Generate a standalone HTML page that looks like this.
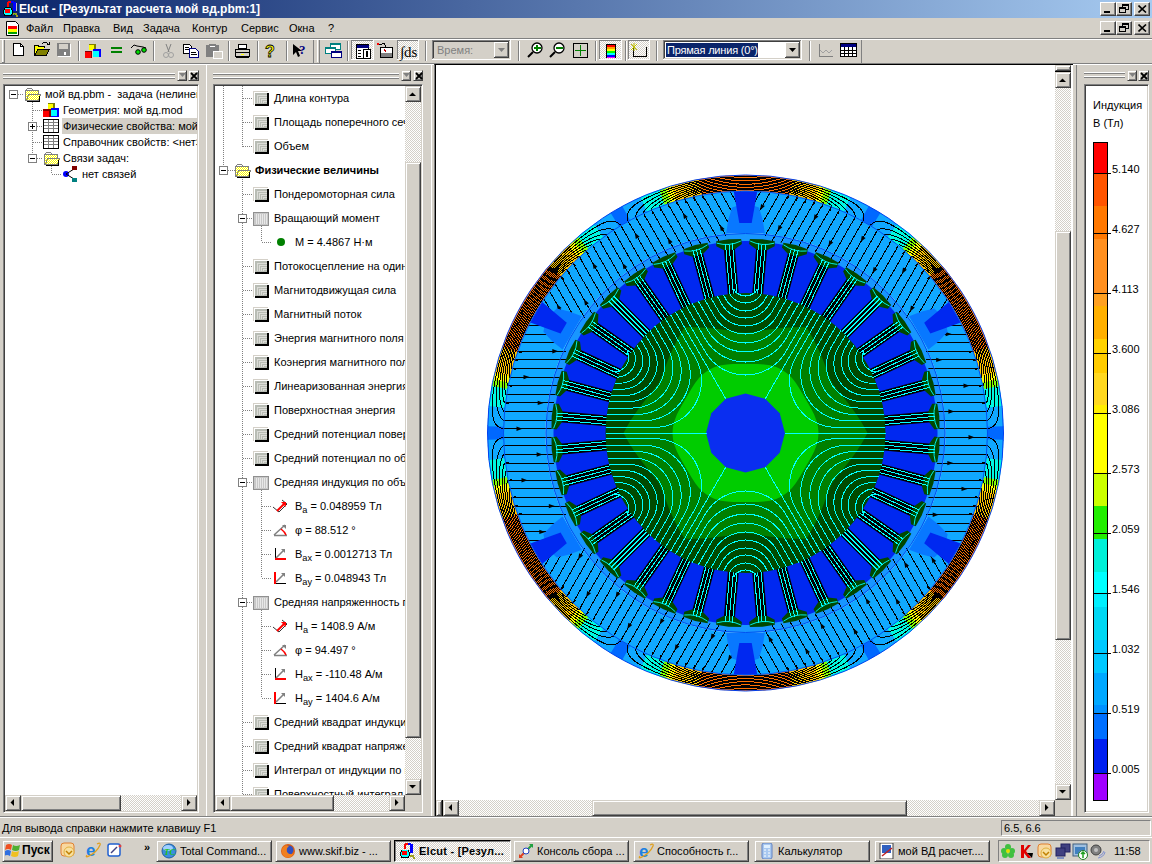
<!DOCTYPE html>
<html><head><meta charset="utf-8">
<style>
*{margin:0;padding:0;box-sizing:border-box}
html,body{width:1152px;height:864px;overflow:hidden;background:#D4D0C8;font-family:"Liberation Sans",sans-serif;font-size:11px;color:#000}
.a{position:absolute}
.t{position:absolute;white-space:nowrap;line-height:13px}
.raised{background:#D4D0C8;border:1px solid;border-color:#fff #404040 #404040 #fff;box-shadow:inset -1px -1px #808080}
.raised2{background:#D4D0C8;border:1px solid;border-color:#D4D0C8 #404040 #404040 #D4D0C8;box-shadow:inset 1px 1px #fff,inset -1px -1px #808080}
.sunk{border:1px solid;border-color:#808080 #fff #fff #808080;box-shadow:inset 1px 1px #404040,inset -1px -1px #D4D0C8}
.track{background-color:#fff;background-image:linear-gradient(45deg,#D4D0C8 25%,transparent 25%,transparent 75%,#D4D0C8 75%),linear-gradient(45deg,#D4D0C8 25%,transparent 25%,transparent 75%,#D4D0C8 75%);background-size:2px 2px;background-position:0 0,1px 1px}
.hl{position:absolute;height:1px}
.vl{position:absolute;width:1px}
.grip{position:absolute;height:6px;border-top:1px solid #fff;border-bottom:1px solid #808080}
.dot{position:absolute;border-left:1px dotted #808080}
.doth{position:absolute;border-top:1px dotted #808080}
</style></head><body>

<!-- TITLE BAR -->
<div class="a" style="left:0;top:0;width:1152px;height:18px;background:linear-gradient(90deg,#0A246A 0%,#A6CAF0 100%)"></div>
<svg class="a" style="left:1px;top:0px" width="18" height="18" viewBox="0 0 18 18" shape-rendering="crispEdges">
<rect x="6" y="2" width="2" height="5" fill="#FF0000"/><rect x="7" y="1" width="3" height="2" fill="#FF0000"/>
<rect x="10" y="1" width="3" height="2" fill="#0000FF"/><rect x="12" y="2" width="3" height="9" fill="#0000FF"/><rect x="15" y="3" width="1" height="8" fill="#C0C0C0"/>
<rect x="4" y="7" width="6" height="1" fill="#000"/><rect x="3" y="8" width="8" height="8" fill="#000"/><rect x="2" y="10" width="10" height="4" fill="#000"/>
<rect x="4" y="8" width="6" height="7" fill="#00FFFF"/><rect x="3" y="10" width="8" height="4" fill="#00FFFF"/>
<rect x="4" y="9" width="5" height="4" fill="#FF0000"/>
<rect x="12" y="13" width="4" height="2" fill="#A0A020"/><rect x="15" y="15" width="2" height="2" fill="#A0A020"/><rect x="13" y="14" width="1" height="1" fill="#00A000"/>
</svg>
<div class="t" style="left:19px;top:2px;color:#fff;font-weight:bold;font-size:12px;line-height:14px">Elcut - [Результат расчета мой вд.pbm:1]</div>
<div class="a raised" style="left:1100px;top:2px;width:16px;height:14px"><div class="a" style="left:3px;top:8px;width:6px;height:2px;background:#000"></div></div>
<div class="a raised" style="left:1116px;top:2px;width:16px;height:14px"><div class="a" style="left:5px;top:1px;width:7px;height:6px;border:1px solid #000;border-top-width:2px"></div><div class="a" style="left:2px;top:4px;width:7px;height:6px;border:1px solid #000;border-top-width:2px;background:#D4D0C8"></div></div>
<div class="a raised" style="left:1134px;top:2px;width:16px;height:14px"><svg class="a" style="left:3px;top:2px" width="9" height="8"><path d="M0.5 0.5 L8 7.5 M8 0.5 L0.5 7.5" stroke="#000" stroke-width="1.6"/></svg></div>

<!-- MENU BAR -->
<svg class="a" style="left:5px;top:20px" width="15" height="17" viewBox="0 0 15 17">
<path d="M1.5 1.5 h9 l3 3 v11 h-12 z" fill="#fff" stroke="#000"/>
<rect x="3" y="6" width="9" height="3" fill="#FF0000"/><rect x="3" y="9" width="9" height="3" fill="#FFFF00"/><rect x="3" y="12" width="9" height="2" fill="#00A000"/>
</svg>
<div class="t" style="left:26px;top:22px">Файл</div>
<div class="t" style="left:63px;top:22px">Правка</div>
<div class="t" style="left:113px;top:22px">Вид</div>
<div class="t" style="left:143px;top:22px">Задача</div>
<div class="t" style="left:192px;top:22px">Контур</div>
<div class="t" style="left:241px;top:22px">Сервис</div>
<div class="t" style="left:289px;top:22px">Окна</div>
<div class="t" style="left:328px;top:22px">?</div>
<div class="a raised" style="left:1100px;top:21px;width:16px;height:14px"><div class="a" style="left:3px;top:8px;width:6px;height:2px;background:#000"></div></div>
<div class="a raised" style="left:1116px;top:21px;width:16px;height:14px"><div class="a" style="left:5px;top:1px;width:7px;height:6px;border:1px solid #000;border-top-width:2px"></div><div class="a" style="left:2px;top:4px;width:7px;height:6px;border:1px solid #000;border-top-width:2px;background:#D4D0C8"></div></div>
<div class="a raised" style="left:1134px;top:21px;width:16px;height:14px"><svg class="a" style="left:3px;top:2px" width="9" height="8"><path d="M0.5 0.5 L8 7.5 M8 0.5 L0.5 7.5" stroke="#000" stroke-width="1.6"/></svg></div>
<div class="hl" style="left:0;top:38px;width:1152px;background:#808080"></div>
<div class="hl" style="left:0;top:39px;width:1152px;background:#fff"></div>

<!-- TOOLBAR -->
<svg class="a" style="left:0;top:0" width="1152" height="64" viewBox="0 0 1152 64" shape-rendering="crispEdges">
<defs><pattern id="chk" width="2" height="2" patternUnits="userSpaceOnUse"><rect width="2" height="2" fill="#fff"/><rect width="1" height="1" fill="#D4D0C8"/><rect x="1" y="1" width="1" height="1" fill="#D4D0C8"/></pattern></defs>
<!-- grip toolbar 1 -->
<rect x="2" y="40" width="1" height="22" fill="#fff"/><rect x="4" y="40" width="1" height="23" fill="#808080"/><rect x="2" y="62" width="3" height="1" fill="#808080"/>
<!-- new -->
<path d="M13.5 43.5 H20.5 L23.5 46.5 V55.5 H13.5 Z" fill="#fff" stroke="#000"/><path d="M20.5 43.5 V46.5 H23.5" stroke="#000" fill="none"/>
<!-- open -->
<path d="M34.5 55.5 V45.5 H38 L39 46.5 H44.5 V48" fill="#FFFF00" stroke="#000"/>
<path d="M34.5 55.5 L38 49.5 H49.5 L46 55.5 Z" fill="#808000" stroke="#000"/>
<path d="M42 44 Q45 41 48 44" stroke="#000" fill="none"/><path d="M47 44 h2 v-2" stroke="#000" fill="none"/>
<!-- save grey -->
<rect x="58" y="44" width="13" height="13" fill="#fff"/>
<rect x="57" y="43" width="13" height="13" fill="#808080"/><rect x="59" y="44" width="9" height="5" fill="#D4D0C8"/><rect x="64" y="52" width="2" height="3" fill="#fff"/>
<rect x="78" y="41" width="1" height="20" fill="#808080"/><rect x="79" y="41" width="1" height="20" fill="#fff"/>
<!-- cubes -->
<rect x="89" y="44" width="7" height="6" fill="#808000"/><rect x="89" y="45" width="5" height="5" fill="#FFFF00"/>
<rect x="85" y="51" width="7" height="7" fill="#800000"/><rect x="85" y="52" width="6" height="6" fill="#FF0000"/>
<rect x="93" y="49" width="8" height="8" fill="#0000FF"/><rect x="93" y="51" width="6" height="6" fill="#00FFFF"/>
<!-- = -->
<rect x="111" y="47" width="11" height="2" fill="#008000"/><rect x="111" y="51" width="11" height="2" fill="#008000"/>
<!-- glasses -->
<path d="M131 48 L134 45 L137 46 M137 46 L143 47 L146 48" stroke="#000" fill="none" shape-rendering="auto"/>
<circle cx="138" cy="52" r="2.3" fill="#00E000" stroke="#000" shape-rendering="auto"/><circle cx="144" cy="50" r="2.3" fill="#00E000" stroke="#000" shape-rendering="auto"/>
<rect x="153" y="41" width="1" height="20" fill="#808080"/><rect x="154" y="41" width="1" height="20" fill="#fff"/>
<!-- scissors grey -->
<path d="M166 44 L169 52 M171 44 L168 52" stroke="#808080" fill="none" shape-rendering="auto"/>
<circle cx="166" cy="55" r="2.5" fill="none" stroke="#A0A0A0" shape-rendering="auto"/><circle cx="171" cy="55" r="2.5" fill="none" stroke="#A0A0A0" shape-rendering="auto"/>
<!-- copy -->
<path d="M183.5 44.5 H189.5 L191.5 46.5 V53.5 H183.5 Z" fill="#fff" stroke="#000"/><rect x="185" y="47" width="4" height="1" fill="#000"/><rect x="185" y="49" width="5" height="1" fill="#000"/>
<path d="M189.5 48.5 H195.5 L198.5 51.5 V57.5 H189.5 Z" fill="#fff" stroke="#000080"/><rect x="191" y="52" width="5" height="1" fill="#000"/><rect x="191" y="54" width="6" height="1" fill="#000"/>
<!-- paste grey -->
<rect x="206" y="45" width="13" height="12" fill="#808080"/><rect x="209" y="44" width="7" height="3" fill="#808080"/><rect x="210" y="46" width="5" height="1" fill="#fff"/>
<rect x="213" y="51" width="9" height="7" fill="#D4D0C8" stroke="#fff"/>
<rect x="228" y="41" width="1" height="20" fill="#808080"/><rect x="229" y="41" width="1" height="20" fill="#fff"/>
<!-- print -->
<path d="M238.5 44.5 H246.5 V48.5 H238.5 Z" fill="#fff" stroke="#000"/>
<path d="M235.5 49.5 H249.5 V56.5 H235.5 Z" fill="#D4D0C8" stroke="#000"/><rect x="236" y="52" width="13" height="1" fill="#000"/><rect x="241" y="54" width="3" height="1" fill="#FFFF00"/><rect x="236" y="57" width="13" height="1" fill="#000"/>
<rect x="257" y="41" width="1" height="20" fill="#808080"/><rect x="258" y="41" width="1" height="20" fill="#fff"/>
<!-- ? -->
<text x="265" y="57" font-family="Liberation Sans" font-weight="bold" font-size="16" fill="#FFFF00" stroke="#000" stroke-width="0.8" shape-rendering="auto">?</text>
<rect x="286" y="41" width="1" height="20" fill="#808080"/><rect x="287" y="41" width="1" height="20" fill="#fff"/>
<!-- arrow ? -->
<path d="M293 44 V55 L296 52 L298 57 L300 56 L298 51 L302 51 Z" fill="#000" shape-rendering="auto"/>
<text x="299" y="54" font-family="Liberation Serif" font-weight="bold" font-size="13" fill="#000080" shape-rendering="auto">?</text>
<!-- toolbar 1 end + grip 2 -->
<rect x="313" y="40" width="1" height="23" fill="#808080"/><rect x="317" y="40" width="1" height="22" fill="#fff"/><rect x="319" y="40" width="1" height="23" fill="#808080"/>
<!-- windows icon -->
<rect x="330" y="43" width="10" height="6" fill="#fff" stroke="#008080"/><rect x="330" y="43" width="10" height="2" fill="#008080"/>
<rect x="325" y="47" width="10" height="6" fill="#fff" stroke="#008080"/><rect x="325" y="47" width="10" height="2" fill="#008080"/>
<rect x="331" y="51" width="10" height="6" fill="#fff" stroke="#000080"/><rect x="331" y="51" width="10" height="2" fill="#000080"/>
<rect x="347" y="41" width="1" height="20" fill="#808080"/><rect x="348" y="41" width="1" height="20" fill="#fff"/><rect x="351" y="40" width="23" height="20" fill="url(#chk)"/><path d="M351.5 60 V40.5 H374" stroke="#808080" fill="none"/><path d="M351 59.5 H373.5 V40" stroke="#fff" fill="none"/>
<!-- table icon -->
<rect x="356.5" y="44.5" width="12" height="14" fill="#fff" stroke="#000"/><rect x="357" y="45" width="12" height="3" fill="#000080"/>
<rect x="358" y="50" width="3" height="1" fill="#000"/><rect x="358" y="53" width="3" height="1" fill="#000"/><rect x="358" y="56" width="3" height="1" fill="#000"/>
<rect x="363.5" y="49.5" width="7" height="9" fill="#fff" stroke="#000"/><rect x="366" y="51" width="2" height="6" fill="#000"/>
<!-- meter -->
<rect x="380.5" y="47.5" width="12" height="10" fill="#fff" stroke="#000"/><rect x="381" y="53" width="11" height="4" fill="#808080"/>
<path d="M378 44 H382 L384 43 L386 47" stroke="#000" fill="none"/><rect x="377" y="43" width="2" height="2" fill="#f00"/><path d="M384 49 L386 52" stroke="#C00000"/>
<rect x="397" y="40" width="22" height="20" fill="url(#chk)"/><path d="M397.5 60 V40.5 H419" stroke="#808080" fill="none"/><path d="M397 59.5 H418.5 V40" stroke="#fff" fill="none"/>
<text x="400" y="57" font-family="Liberation Serif" font-size="15" fill="#000" shape-rendering="auto">∫ds</text>
<rect x="425" y="41" width="1" height="20" fill="#808080"/><rect x="426" y="41" width="1" height="20" fill="#fff"/>
<!-- combo Время -->
<path d="M432.5 59.5 V40.5 H510" stroke="#808080" fill="none"/><path d="M433.5 58.5 V41.5 H509" stroke="#404040" fill="none"/>
<path d="M432 59.5 H510.5 V40" stroke="#fff" fill="none"/><path d="M433 58.5 H509.5 V41" stroke="#D4D0C8" fill="none"/>
<rect x="494" y="42" width="15" height="16" fill="#D4D0C8"/><path d="M494.5 57 V42.5 H508" stroke="#fff" fill="none"/><path d="M494 57.5 H508.5 V42" stroke="#404040" fill="none"/><path d="M495 56.5 H507.5 V43" stroke="#808080" fill="none"/>
<path d="M498 48 H505 L501.5 52 Z" fill="#808080" shape-rendering="auto"/>
<text x="437" y="54" font-family="Liberation Sans" font-size="11" fill="#808080" shape-rendering="auto">Время:</text>
<rect x="518" y="41" width="1" height="20" fill="#808080"/><rect x="519" y="41" width="1" height="20" fill="#fff"/>
<!-- zoom + -->
<circle cx="537" cy="48" r="5" fill="#fff" stroke="#000" stroke-width="1.3" shape-rendering="auto"/><rect x="534" y="47" width="7" height="2" fill="#008000"/><rect x="536" y="45" width="2" height="6" fill="#008000"/>
<path d="M533 52 L528 57" stroke="#000" stroke-width="2" shape-rendering="auto"/>
<!-- zoom - -->
<circle cx="559" cy="48" r="5" fill="#fff" stroke="#000" stroke-width="1.3" shape-rendering="auto"/><rect x="556" y="47" width="7" height="2" fill="#008000"/>
<path d="M555 52 L550 57" stroke="#000" stroke-width="2" shape-rendering="auto"/>
<!-- fit -->
<rect x="573.5" y="43.5" width="14" height="14" fill="none" stroke="#000"/><rect x="575" y="50" width="11" height="1" fill="#008000"/><rect x="580" y="45" width="1" height="11" fill="#008000"/>
<rect x="595" y="41" width="1" height="20" fill="#808080"/><rect x="596" y="41" width="1" height="20" fill="#fff"/><rect x="599" y="40" width="23" height="20" fill="url(#chk)"/><path d="M599.5 60 V40.5 H622" stroke="#808080" fill="none"/><path d="M599 59.5 H621.5 V40" stroke="#fff" fill="none"/>
<rect x="606" y="44" width="10" height="14" fill="#000"/>
<rect x="607" y="45" width="8" height="2" fill="#FF0000"/><rect x="607" y="47" width="8" height="2" fill="#FFA000"/><rect x="607" y="49" width="8" height="2" fill="#FFFF00"/><rect x="607" y="51" width="8" height="2" fill="#00FF00"/><rect x="607" y="53" width="8" height="2" fill="#00FFFF"/><rect x="607" y="55" width="8" height="2" fill="#0000FF"/><rect x="607" y="57" width="8" height="1" fill="#FF00FF"/>
<rect x="625" y="41" width="1" height="20" fill="#808080"/><rect x="626" y="41" width="1" height="20" fill="#fff"/><rect x="628" y="40" width="22" height="20" fill="url(#chk)"/><path d="M628.5 60 V40.5 H650" stroke="#808080" fill="none"/><path d="M628 59.5 H649.5 V40" stroke="#fff" fill="none"/>
<path d="M633.5 46 V56.5 H646.5 V47" stroke="#000" fill="none"/>
<path d="M631 44 L637 50 M637 44 L631 50 M634 43 V51" stroke="#C0C000" stroke-width="1" shape-rendering="auto"/>
<rect x="656" y="41" width="1" height="20" fill="#808080"/><rect x="657" y="41" width="1" height="20" fill="#fff"/>
<!-- combo line -->
<path d="M663.5 59.5 V40.5 H801" stroke="#808080" fill="none"/><path d="M664.5 58.5 V41.5 H800" stroke="#404040" fill="none"/>
<path d="M663 59.5 H801.5 V40" stroke="#fff" fill="none"/><path d="M664 58.5 H800.5 V41" stroke="#D4D0C8" fill="none"/>
<rect x="665" y="42" width="120" height="16" fill="#fff"/>
<rect x="666" y="43" width="92" height="14" fill="#0A246A"/>
<rect x="785" y="42" width="15" height="16" fill="#D4D0C8"/><path d="M785.5 57 V42.5 H799" stroke="#fff" fill="none"/><path d="M785 57.5 H799.5 V42" stroke="#404040" fill="none"/><path d="M786 56.5 H798.5 V43" stroke="#808080" fill="none"/>
<path d="M789 48 H796 L792.5 52 Z" fill="#000" shape-rendering="auto"/>
<text x="667" y="54" font-family="Liberation Sans" font-size="11" letter-spacing="-0.2" fill="#fff" shape-rendering="auto">Прямая линия (0°)</text>
<rect x="809" y="41" width="1" height="20" fill="#808080"/><rect x="810" y="41" width="1" height="20" fill="#fff"/>
<!-- graph grey -->
<path d="M819.5 44 V56.5 H833" stroke="#808080" fill="none"/><path d="M820 50 L823 53 L826 50 L829 53 L832 50" stroke="#A0A0A0" fill="none" shape-rendering="auto"/>
<!-- table -->
<rect x="840.5" y="43.5" width="16" height="13" fill="#fff" stroke="#000"/><rect x="841" y="44" width="15" height="3" fill="#000080"/>
<path d="M841 50.5 H856 M841 53.5 H856 M844.5 47 V56 M848.5 47 V56 M852.5 47 V56" stroke="#000"/>
<rect x="861" y="40" width="1" height="23" fill="#808080"/>
</svg>
<div class="hl" style="left:0;top:63px;width:1152px;background:#808080"></div>
<div class="hl" style="left:0;top:64px;width:1152px;background:#fff"></div>

<!-- LEFT PANEL -->
<div class="grip" style="left:3px;top:73px;width:172px;height:2px"></div><div class="grip" style="left:3px;top:77px;width:172px;height:2px"></div><div class="a raised2" style="left:177px;top:70px;width:10px;height:11px"><svg class="a" style="left:1px;top:2px" width="7" height="5"><path d="M0 0 H7 L3.5 4 Z" fill="#808080"/></svg></div><div class="a raised2" style="left:188px;top:70px;width:11px;height:11px"><svg class="a" style="left:1px;top:1px" width="8" height="8"><path d="M1 1 L7 7 M7 1 L1 7" stroke="#000" stroke-width="1.8"/></svg></div><div class="a sunk" style="left:3px;top:84px;width:196px;height:729px;background:#fff"></div><div class="a" style="left:0;top:86px;width:197px;height:709px;overflow:hidden"><div class="a" style="left:0;top:-86px;width:197px;height:800px"><div class="a" style="left:9px;top:90px;width:9px;height:9px;border:1px solid #808080;background:#fff"><div class="a" style="left:1px;top:3px;width:5px;height:1px;background:#000"></div></div><div class="a" style="left:18px;top:94px;width:6px;height:1px;background-image:linear-gradient(90deg,#808080 50%,transparent 50%);background-size:2px 1px"></div><svg class="a" style="left:24px;top:87px" width="17" height="15" viewBox="0 0 17 15" shape-rendering="crispEdges"><defs><pattern id="ydot" width="2" height="2" patternUnits="userSpaceOnUse"><rect width="2" height="2" fill="#FFFF00"/><rect width="1" height="1" fill="#fff"/><rect x="1" y="1" width="1" height="1" fill="#fff"/></pattern></defs><path d="M1.5 3.5 L3.5 1.5 H7.5 L9.5 3.5 H14.5 V6.5" fill="#fff" stroke="#808080"/><path d="M1.5 13.5 V3.5 H14.5 V13.5 Z" fill="url(#ydot)" stroke="#808080"/><path d="M2.5 13.5 L4.5 7.5 H16.5 L14.5 13.5 Z" fill="url(#ydot)" stroke="#808080"/><path d="M15.5 13.5 V9 M3 14.5 H16" stroke="#000"/></svg><div class="t" style="left:45px;top:88px;">мой вд.pbm -&nbsp; задача (нелинейная магнитостатика)</div><div class="a" style="left:32px;top:102px;width:1px;height:56px;background-image:linear-gradient(#808080 50%,transparent 50%);background-size:1px 2px"></div><div class="a" style="left:33px;top:110px;width:10px;height:1px;background-image:linear-gradient(90deg,#808080 50%,transparent 50%);background-size:2px 1px"></div><svg class="a" style="left:43px;top:102px" width="17" height="16" viewBox="0 0 17 16"><rect x="5" y="1" width="7" height="7" fill="#808000"/><rect x="5" y="2" width="5" height="5" fill="#FFFF00"/><rect x="0" y="7" width="8" height="8" fill="#800000"/><rect x="0" y="9" width="6" height="6" fill="#FF0000"/><rect x="8" y="6" width="8" height="9" fill="#0000FF"/><rect x="8" y="8" width="6" height="6" fill="#00FFFF"/></svg><div class="t" style="left:63px;top:104px;">Геометрия: мой вд.mod</div><div class="a" style="left:28px;top:122px;width:9px;height:9px;border:1px solid #808080;background:#fff"><div class="a" style="left:1px;top:3px;width:5px;height:1px;background:#000"></div><div class="a" style="left:3px;top:1px;width:1px;height:5px;background:#000"></div></div><div class="a" style="left:37px;top:126px;width:6px;height:1px;background-image:linear-gradient(90deg,#808080 50%,transparent 50%);background-size:2px 1px"></div><svg class="a" style="left:43px;top:119px" width="16" height="14" viewBox="0 0 16 14" shape-rendering="crispEdges"><rect x="0.5" y="0.5" width="15" height="13" fill="#fff" stroke="#000"/><path d="M1 3.5 H15 M1 6.5 H15 M1 9.5 H15 M5.5 1 V13 M10.5 1 V13" stroke="#808080"/></svg><div class="a" style="left:62px;top:118px;width:135px;height:16px;background:#D4D0C8"></div><div class="t" style="left:63px;top:120px;">Физические свойства: мой вд.dms</div><div class="a" style="left:33px;top:142px;width:10px;height:1px;background-image:linear-gradient(90deg,#808080 50%,transparent 50%);background-size:2px 1px"></div><svg class="a" style="left:43px;top:135px" width="16" height="14" viewBox="0 0 16 14" shape-rendering="crispEdges"><rect x="0.5" y="0.5" width="15" height="13" fill="#fff" stroke="#000"/><path d="M1 3.5 H15 M1 6.5 H15 M1 9.5 H15 M5.5 1 V13 M10.5 1 V13" stroke="#808080"/></svg><div class="t" style="left:63px;top:136px;">Справочник свойств: &lt;нет&gt;</div><div class="a" style="left:28px;top:154px;width:9px;height:9px;border:1px solid #808080;background:#fff"><div class="a" style="left:1px;top:3px;width:5px;height:1px;background:#000"></div></div><div class="a" style="left:37px;top:158px;width:6px;height:1px;background-image:linear-gradient(90deg,#808080 50%,transparent 50%);background-size:2px 1px"></div><svg class="a" style="left:43px;top:151px" width="17" height="15" viewBox="0 0 17 15" shape-rendering="crispEdges"><defs><pattern id="ydot" width="2" height="2" patternUnits="userSpaceOnUse"><rect width="2" height="2" fill="#FFFF00"/><rect width="1" height="1" fill="#fff"/><rect x="1" y="1" width="1" height="1" fill="#fff"/></pattern></defs><path d="M1.5 3.5 L3.5 1.5 H7.5 L9.5 3.5 H14.5 V6.5" fill="#fff" stroke="#808080"/><path d="M1.5 13.5 V3.5 H14.5 V13.5 Z" fill="url(#ydot)" stroke="#808080"/><path d="M2.5 13.5 L4.5 7.5 H16.5 L14.5 13.5 Z" fill="url(#ydot)" stroke="#808080"/><path d="M15.5 13.5 V9 M3 14.5 H16" stroke="#000"/></svg><div class="t" style="left:63px;top:152px;">Связи задач:</div><div class="a" style="left:51px;top:166px;width:1px;height:8px;background-image:linear-gradient(#808080 50%,transparent 50%);background-size:1px 2px"></div><div class="a" style="left:52px;top:174px;width:10px;height:1px;background-image:linear-gradient(90deg,#808080 50%,transparent 50%);background-size:2px 1px"></div><svg class="a" style="left:62px;top:166px" width="17" height="16" viewBox="0 0 17 16"><circle cx="4" cy="8" r="3" fill="#0000FF"/><path d="M4 8 L12 3 M4 8 L12 13" stroke="#000"/><rect x="10" y="0" width="5" height="4" fill="#800000"/><rect x="10" y="12" width="5" height="4" fill="#008080"/></svg><div class="t" style="left:82px;top:168px;">нет связей</div></div></div><div class="a track" style="left:5px;top:795px;width:192px;height:16px"></div><div class="a raised2" style="left:5px;top:795px;width:16px;height:16px"><svg class="a" style="left:-1px;top:-1px" width="16" height="16"><path d="M9 4 V11 L5.5 7.5 Z" fill="#000"/></svg></div><div class="a raised2" style="left:181px;top:795px;width:16px;height:16px"><svg class="a" style="left:-1px;top:-1px" width="16" height="16"><path d="M6 4 V11 L9.5 7.5 Z" fill="#000"/></svg></div><div class="a raised2" style="left:21px;top:795px;width:100px;height:16px"></div>
<!-- MIDDLE PANEL -->
<div class="vl" style="left:206px;top:65px;height:752px;background:#fff"></div><div class="grip" style="left:213px;top:73px;width:186px;height:2px"></div><div class="grip" style="left:213px;top:77px;width:186px;height:2px"></div><div class="a raised2" style="left:401px;top:70px;width:10px;height:11px"><svg class="a" style="left:1px;top:2px" width="7" height="5"><path d="M0 0 H7 L3.5 4 Z" fill="#808080"/></svg></div><div class="a raised2" style="left:413px;top:70px;width:10px;height:11px"><svg class="a" style="left:1px;top:1px" width="8" height="8"><path d="M1 1 L7 7 M7 1 L1 7" stroke="#000" stroke-width="1.8"/></svg></div><div class="a sunk" style="left:213px;top:84px;width:210px;height:729px;background:#fff"></div><div class="a" style="left:216px;top:86px;width:189px;height:709px;overflow:hidden"><div class="a" style="left:7px;top:0px;width:1px;height:80px;background-image:linear-gradient(#808080 50%,transparent 50%);background-size:1px 2px"></div><div class="a" style="left:26px;top:0px;width:1px;height:61px;background-image:linear-gradient(#808080 50%,transparent 50%);background-size:1px 2px"></div><div class="a" style="left:26px;top:89px;width:1px;height:639px;background-image:linear-gradient(#808080 50%,transparent 50%);background-size:1px 2px"></div><div class="a" style="left:27px;top:12px;width:10px;height:1px;background-image:linear-gradient(90deg,#808080 50%,transparent 50%);background-size:2px 1px"></div><svg class="a" style="left:37px;top:5px" width="17" height="15" viewBox="0 0 17 15" shape-rendering="crispEdges"><rect x="0" y="0" width="15" height="14" fill="#D4D0C8"/><rect x="1" y="1" width="14" height="13" fill="#fff"/><rect x="2" y="2" width="13" height="12" fill="#000"/><rect x="2" y="2" width="12" height="11" fill="#B8BCB4"/><path d="M4.5 12 V4.5 H14 M6.5 12 V6.5 H14 M8.5 12 V8.5 H14 M10.5 12 V10.5 H14" stroke="#DCDCD8" fill="none"/><rect x="15" y="2" width="1" height="13" fill="#000"/><rect x="2" y="14" width="14" height="1" fill="#000"/></svg><div class="t" style="left:58px;top:6px;">Длина контура</div><div class="a" style="left:27px;top:36px;width:10px;height:1px;background-image:linear-gradient(90deg,#808080 50%,transparent 50%);background-size:2px 1px"></div><svg class="a" style="left:37px;top:29px" width="17" height="15" viewBox="0 0 17 15" shape-rendering="crispEdges"><rect x="0" y="0" width="15" height="14" fill="#D4D0C8"/><rect x="1" y="1" width="14" height="13" fill="#fff"/><rect x="2" y="2" width="13" height="12" fill="#000"/><rect x="2" y="2" width="12" height="11" fill="#B8BCB4"/><path d="M4.5 12 V4.5 H14 M6.5 12 V6.5 H14 M8.5 12 V8.5 H14 M10.5 12 V10.5 H14" stroke="#DCDCD8" fill="none"/><rect x="15" y="2" width="1" height="13" fill="#000"/><rect x="2" y="14" width="14" height="1" fill="#000"/></svg><div class="t" style="left:58px;top:30px;">Площадь поперечного сечения</div><div class="a" style="left:27px;top:60px;width:10px;height:1px;background-image:linear-gradient(90deg,#808080 50%,transparent 50%);background-size:2px 1px"></div><svg class="a" style="left:37px;top:53px" width="17" height="15" viewBox="0 0 17 15" shape-rendering="crispEdges"><rect x="0" y="0" width="15" height="14" fill="#D4D0C8"/><rect x="1" y="1" width="14" height="13" fill="#fff"/><rect x="2" y="2" width="13" height="12" fill="#000"/><rect x="2" y="2" width="12" height="11" fill="#B8BCB4"/><path d="M4.5 12 V4.5 H14 M6.5 12 V6.5 H14 M8.5 12 V8.5 H14 M10.5 12 V10.5 H14" stroke="#DCDCD8" fill="none"/><rect x="15" y="2" width="1" height="13" fill="#000"/><rect x="2" y="14" width="14" height="1" fill="#000"/></svg><div class="t" style="left:58px;top:54px;">Объем</div><div class="a" style="left:3px;top:80px;width:9px;height:9px;border:1px solid #808080;background:#fff"><div class="a" style="left:1px;top:3px;width:5px;height:1px;background:#000"></div></div><div class="a" style="left:12px;top:84px;width:7px;height:1px;background-image:linear-gradient(90deg,#808080 50%,transparent 50%);background-size:2px 1px"></div><svg class="a" style="left:18px;top:77px" width="17" height="15" viewBox="0 0 17 15" shape-rendering="crispEdges"><defs><pattern id="ydot" width="2" height="2" patternUnits="userSpaceOnUse"><rect width="2" height="2" fill="#FFFF00"/><rect width="1" height="1" fill="#fff"/><rect x="1" y="1" width="1" height="1" fill="#fff"/></pattern></defs><path d="M1.5 3.5 L3.5 1.5 H7.5 L9.5 3.5 H14.5 V6.5" fill="#fff" stroke="#808080"/><path d="M1.5 13.5 V3.5 H14.5 V13.5 Z" fill="url(#ydot)" stroke="#808080"/><path d="M2.5 13.5 L4.5 7.5 H16.5 L14.5 13.5 Z" fill="url(#ydot)" stroke="#808080"/><path d="M15.5 13.5 V9 M3 14.5 H16" stroke="#000"/></svg><div class="t" style="left:39px;top:78px;"><b>Физические величины</b></div><div class="a" style="left:27px;top:108px;width:10px;height:1px;background-image:linear-gradient(90deg,#808080 50%,transparent 50%);background-size:2px 1px"></div><svg class="a" style="left:37px;top:101px" width="17" height="15" viewBox="0 0 17 15" shape-rendering="crispEdges"><rect x="0" y="0" width="15" height="14" fill="#D4D0C8"/><rect x="1" y="1" width="14" height="13" fill="#fff"/><rect x="2" y="2" width="13" height="12" fill="#000"/><rect x="2" y="2" width="12" height="11" fill="#B8BCB4"/><path d="M4.5 12 V4.5 H14 M6.5 12 V6.5 H14 M8.5 12 V8.5 H14 M10.5 12 V10.5 H14" stroke="#DCDCD8" fill="none"/><rect x="15" y="2" width="1" height="13" fill="#000"/><rect x="2" y="14" width="14" height="1" fill="#000"/></svg><div class="t" style="left:58px;top:102px;">Пондеромоторная сила</div><div class="a" style="left:22px;top:128px;width:9px;height:9px;border:1px solid #808080;background:#fff"><div class="a" style="left:1px;top:3px;width:5px;height:1px;background:#000"></div></div><div class="a" style="left:31px;top:132px;width:6px;height:1px;background-image:linear-gradient(90deg,#808080 50%,transparent 50%);background-size:2px 1px"></div><svg class="a" style="left:37px;top:126px" width="16" height="14" viewBox="0 0 16 14"><rect x="0.5" y="0.5" width="15" height="13" fill="#C8C8C8" stroke="#909090"/><path d="M3.5 2 V12 M5.5 2 V12 M7.5 2 V12 M9.5 2 V12 M11.5 2 V12 M13.5 2 V12" stroke="#E8E8E8"/></svg><div class="a" style="left:45px;top:140px;width:1px;height:16px;background-image:linear-gradient(#808080 50%,transparent 50%);background-size:1px 2px"></div><div class="t" style="left:58px;top:126px;">Вращающий момент</div><div class="a" style="left:46px;top:156px;width:10px;height:1px;background-image:linear-gradient(90deg,#808080 50%,transparent 50%);background-size:2px 1px"></div><div class="a" style="left:61px;top:152px;width:8px;height:8px;border-radius:50%;background:#008000"></div><div class="t" style="left:79px;top:150px;">M = 4.4867 Н·м</div><div class="a" style="left:27px;top:180px;width:10px;height:1px;background-image:linear-gradient(90deg,#808080 50%,transparent 50%);background-size:2px 1px"></div><svg class="a" style="left:37px;top:173px" width="17" height="15" viewBox="0 0 17 15" shape-rendering="crispEdges"><rect x="0" y="0" width="15" height="14" fill="#D4D0C8"/><rect x="1" y="1" width="14" height="13" fill="#fff"/><rect x="2" y="2" width="13" height="12" fill="#000"/><rect x="2" y="2" width="12" height="11" fill="#B8BCB4"/><path d="M4.5 12 V4.5 H14 M6.5 12 V6.5 H14 M8.5 12 V8.5 H14 M10.5 12 V10.5 H14" stroke="#DCDCD8" fill="none"/><rect x="15" y="2" width="1" height="13" fill="#000"/><rect x="2" y="14" width="14" height="1" fill="#000"/></svg><div class="t" style="left:58px;top:174px;">Потокосцепление на один виток</div><div class="a" style="left:27px;top:204px;width:10px;height:1px;background-image:linear-gradient(90deg,#808080 50%,transparent 50%);background-size:2px 1px"></div><svg class="a" style="left:37px;top:197px" width="17" height="15" viewBox="0 0 17 15" shape-rendering="crispEdges"><rect x="0" y="0" width="15" height="14" fill="#D4D0C8"/><rect x="1" y="1" width="14" height="13" fill="#fff"/><rect x="2" y="2" width="13" height="12" fill="#000"/><rect x="2" y="2" width="12" height="11" fill="#B8BCB4"/><path d="M4.5 12 V4.5 H14 M6.5 12 V6.5 H14 M8.5 12 V8.5 H14 M10.5 12 V10.5 H14" stroke="#DCDCD8" fill="none"/><rect x="15" y="2" width="1" height="13" fill="#000"/><rect x="2" y="14" width="14" height="1" fill="#000"/></svg><div class="t" style="left:58px;top:198px;">Магнитодвижущая сила</div><div class="a" style="left:27px;top:228px;width:10px;height:1px;background-image:linear-gradient(90deg,#808080 50%,transparent 50%);background-size:2px 1px"></div><svg class="a" style="left:37px;top:221px" width="17" height="15" viewBox="0 0 17 15" shape-rendering="crispEdges"><rect x="0" y="0" width="15" height="14" fill="#D4D0C8"/><rect x="1" y="1" width="14" height="13" fill="#fff"/><rect x="2" y="2" width="13" height="12" fill="#000"/><rect x="2" y="2" width="12" height="11" fill="#B8BCB4"/><path d="M4.5 12 V4.5 H14 M6.5 12 V6.5 H14 M8.5 12 V8.5 H14 M10.5 12 V10.5 H14" stroke="#DCDCD8" fill="none"/><rect x="15" y="2" width="1" height="13" fill="#000"/><rect x="2" y="14" width="14" height="1" fill="#000"/></svg><div class="t" style="left:58px;top:222px;">Магнитный поток</div><div class="a" style="left:27px;top:252px;width:10px;height:1px;background-image:linear-gradient(90deg,#808080 50%,transparent 50%);background-size:2px 1px"></div><svg class="a" style="left:37px;top:245px" width="17" height="15" viewBox="0 0 17 15" shape-rendering="crispEdges"><rect x="0" y="0" width="15" height="14" fill="#D4D0C8"/><rect x="1" y="1" width="14" height="13" fill="#fff"/><rect x="2" y="2" width="13" height="12" fill="#000"/><rect x="2" y="2" width="12" height="11" fill="#B8BCB4"/><path d="M4.5 12 V4.5 H14 M6.5 12 V6.5 H14 M8.5 12 V8.5 H14 M10.5 12 V10.5 H14" stroke="#DCDCD8" fill="none"/><rect x="15" y="2" width="1" height="13" fill="#000"/><rect x="2" y="14" width="14" height="1" fill="#000"/></svg><div class="t" style="left:58px;top:246px;">Энергия магнитного поля</div><div class="a" style="left:27px;top:276px;width:10px;height:1px;background-image:linear-gradient(90deg,#808080 50%,transparent 50%);background-size:2px 1px"></div><svg class="a" style="left:37px;top:269px" width="17" height="15" viewBox="0 0 17 15" shape-rendering="crispEdges"><rect x="0" y="0" width="15" height="14" fill="#D4D0C8"/><rect x="1" y="1" width="14" height="13" fill="#fff"/><rect x="2" y="2" width="13" height="12" fill="#000"/><rect x="2" y="2" width="12" height="11" fill="#B8BCB4"/><path d="M4.5 12 V4.5 H14 M6.5 12 V6.5 H14 M8.5 12 V8.5 H14 M10.5 12 V10.5 H14" stroke="#DCDCD8" fill="none"/><rect x="15" y="2" width="1" height="13" fill="#000"/><rect x="2" y="14" width="14" height="1" fill="#000"/></svg><div class="t" style="left:58px;top:270px;">Коэнергия магнитного поля</div><div class="a" style="left:27px;top:300px;width:10px;height:1px;background-image:linear-gradient(90deg,#808080 50%,transparent 50%);background-size:2px 1px"></div><svg class="a" style="left:37px;top:293px" width="17" height="15" viewBox="0 0 17 15" shape-rendering="crispEdges"><rect x="0" y="0" width="15" height="14" fill="#D4D0C8"/><rect x="1" y="1" width="14" height="13" fill="#fff"/><rect x="2" y="2" width="13" height="12" fill="#000"/><rect x="2" y="2" width="12" height="11" fill="#B8BCB4"/><path d="M4.5 12 V4.5 H14 M6.5 12 V6.5 H14 M8.5 12 V8.5 H14 M10.5 12 V10.5 H14" stroke="#DCDCD8" fill="none"/><rect x="15" y="2" width="1" height="13" fill="#000"/><rect x="2" y="14" width="14" height="1" fill="#000"/></svg><div class="t" style="left:58px;top:294px;">Линеаризованная энергия</div><div class="a" style="left:27px;top:324px;width:10px;height:1px;background-image:linear-gradient(90deg,#808080 50%,transparent 50%);background-size:2px 1px"></div><svg class="a" style="left:37px;top:317px" width="17" height="15" viewBox="0 0 17 15" shape-rendering="crispEdges"><rect x="0" y="0" width="15" height="14" fill="#D4D0C8"/><rect x="1" y="1" width="14" height="13" fill="#fff"/><rect x="2" y="2" width="13" height="12" fill="#000"/><rect x="2" y="2" width="12" height="11" fill="#B8BCB4"/><path d="M4.5 12 V4.5 H14 M6.5 12 V6.5 H14 M8.5 12 V8.5 H14 M10.5 12 V10.5 H14" stroke="#DCDCD8" fill="none"/><rect x="15" y="2" width="1" height="13" fill="#000"/><rect x="2" y="14" width="14" height="1" fill="#000"/></svg><div class="t" style="left:58px;top:318px;">Поверхностная энергия</div><div class="a" style="left:27px;top:348px;width:10px;height:1px;background-image:linear-gradient(90deg,#808080 50%,transparent 50%);background-size:2px 1px"></div><svg class="a" style="left:37px;top:341px" width="17" height="15" viewBox="0 0 17 15" shape-rendering="crispEdges"><rect x="0" y="0" width="15" height="14" fill="#D4D0C8"/><rect x="1" y="1" width="14" height="13" fill="#fff"/><rect x="2" y="2" width="13" height="12" fill="#000"/><rect x="2" y="2" width="12" height="11" fill="#B8BCB4"/><path d="M4.5 12 V4.5 H14 M6.5 12 V6.5 H14 M8.5 12 V8.5 H14 M10.5 12 V10.5 H14" stroke="#DCDCD8" fill="none"/><rect x="15" y="2" width="1" height="13" fill="#000"/><rect x="2" y="14" width="14" height="1" fill="#000"/></svg><div class="t" style="left:58px;top:342px;">Средний потенциал поверхности</div><div class="a" style="left:27px;top:372px;width:10px;height:1px;background-image:linear-gradient(90deg,#808080 50%,transparent 50%);background-size:2px 1px"></div><svg class="a" style="left:37px;top:365px" width="17" height="15" viewBox="0 0 17 15" shape-rendering="crispEdges"><rect x="0" y="0" width="15" height="14" fill="#D4D0C8"/><rect x="1" y="1" width="14" height="13" fill="#fff"/><rect x="2" y="2" width="13" height="12" fill="#000"/><rect x="2" y="2" width="12" height="11" fill="#B8BCB4"/><path d="M4.5 12 V4.5 H14 M6.5 12 V6.5 H14 M8.5 12 V8.5 H14 M10.5 12 V10.5 H14" stroke="#DCDCD8" fill="none"/><rect x="15" y="2" width="1" height="13" fill="#000"/><rect x="2" y="14" width="14" height="1" fill="#000"/></svg><div class="t" style="left:58px;top:366px;">Средний потенциал по объему</div><div class="a" style="left:22px;top:392px;width:9px;height:9px;border:1px solid #808080;background:#fff"><div class="a" style="left:1px;top:3px;width:5px;height:1px;background:#000"></div></div><div class="a" style="left:31px;top:396px;width:6px;height:1px;background-image:linear-gradient(90deg,#808080 50%,transparent 50%);background-size:2px 1px"></div><svg class="a" style="left:37px;top:390px" width="16" height="14" viewBox="0 0 16 14"><rect x="0.5" y="0.5" width="15" height="13" fill="#C8C8C8" stroke="#909090"/><path d="M3.5 2 V12 M5.5 2 V12 M7.5 2 V12 M9.5 2 V12 M11.5 2 V12 M13.5 2 V12" stroke="#E8E8E8"/></svg><div class="a" style="left:45px;top:404px;width:1px;height:88px;background-image:linear-gradient(#808080 50%,transparent 50%);background-size:1px 2px"></div><div class="t" style="left:58px;top:390px;">Средняя индукция по объему</div><div class="a" style="left:46px;top:420px;width:10px;height:1px;background-image:linear-gradient(90deg,#808080 50%,transparent 50%);background-size:2px 1px"></div><svg class="a" style="left:56px;top:413px" width="17" height="14" viewBox="0 0 17 14"><path d="M1 8 L7 13 L15 5 L10 1" stroke="#000" fill="none" stroke-width="0.8"/><path d="M5 12 L13 4" stroke="#f00" stroke-width="2"/><path d="M9 3 H14 V8 Z" fill="#f00"/></svg><div class="t" style="left:79px;top:414px;">B<sub>a</sub> = 0.048959 Тл</div><div class="a" style="left:46px;top:444px;width:10px;height:1px;background-image:linear-gradient(90deg,#808080 50%,transparent 50%);background-size:2px 1px"></div><svg class="a" style="left:56px;top:437px" width="17" height="14" viewBox="0 0 17 14"><path d="M2 12.5 H15 M2 12 L13 2" stroke="#808080" stroke-width="1.5" fill="none"/><path d="M10 2 H14 V6 Z" fill="#808080"/><path d="M9 6 Q13 9 14 12" stroke="#f00" stroke-width="1.5" fill="none"/></svg><div class="t" style="left:79px;top:438px;">φ = 88.512 °</div><div class="a" style="left:46px;top:468px;width:10px;height:1px;background-image:linear-gradient(90deg,#808080 50%,transparent 50%);background-size:2px 1px"></div><svg class="a" style="left:56px;top:461px" width="17" height="14" viewBox="0 0 17 14"><path d="M3.5 1 V13" stroke="#000"/><path d="M3 12 H14" stroke="#f00" stroke-width="2"/><path d="M4 11 L12 3" stroke="#808080" stroke-width="1.6"/><path d="M9 2 H13 V6 Z" fill="#808080"/></svg><div class="t" style="left:79px;top:462px;">B<sub>ax</sub> = 0.0012713 Тл</div><div class="a" style="left:46px;top:492px;width:10px;height:1px;background-image:linear-gradient(90deg,#808080 50%,transparent 50%);background-size:2px 1px"></div><svg class="a" style="left:56px;top:485px" width="17" height="14" viewBox="0 0 17 14"><path d="M3 12.5 H14" stroke="#000"/><path d="M3 1 V13" stroke="#f00" stroke-width="2"/><path d="M4 11 L12 3" stroke="#808080" stroke-width="1.6"/><path d="M9 2 H13 V6 Z" fill="#808080"/></svg><div class="t" style="left:79px;top:486px;">B<sub>ay</sub> = 0.048943 Тл</div><div class="a" style="left:22px;top:512px;width:9px;height:9px;border:1px solid #808080;background:#fff"><div class="a" style="left:1px;top:3px;width:5px;height:1px;background:#000"></div></div><div class="a" style="left:31px;top:516px;width:6px;height:1px;background-image:linear-gradient(90deg,#808080 50%,transparent 50%);background-size:2px 1px"></div><svg class="a" style="left:37px;top:510px" width="16" height="14" viewBox="0 0 16 14"><rect x="0.5" y="0.5" width="15" height="13" fill="#C8C8C8" stroke="#909090"/><path d="M3.5 2 V12 M5.5 2 V12 M7.5 2 V12 M9.5 2 V12 M11.5 2 V12 M13.5 2 V12" stroke="#E8E8E8"/></svg><div class="a" style="left:45px;top:524px;width:1px;height:88px;background-image:linear-gradient(#808080 50%,transparent 50%);background-size:1px 2px"></div><div class="t" style="left:58px;top:510px;">Средняя напряженность поля</div><div class="a" style="left:46px;top:540px;width:10px;height:1px;background-image:linear-gradient(90deg,#808080 50%,transparent 50%);background-size:2px 1px"></div><svg class="a" style="left:56px;top:533px" width="17" height="14" viewBox="0 0 17 14"><path d="M1 8 L7 13 L15 5 L10 1" stroke="#000" fill="none" stroke-width="0.8"/><path d="M5 12 L13 4" stroke="#f00" stroke-width="2"/><path d="M9 3 H14 V8 Z" fill="#f00"/></svg><div class="t" style="left:79px;top:534px;">H<sub>a</sub> = 1408.9 А/м</div><div class="a" style="left:46px;top:564px;width:10px;height:1px;background-image:linear-gradient(90deg,#808080 50%,transparent 50%);background-size:2px 1px"></div><svg class="a" style="left:56px;top:557px" width="17" height="14" viewBox="0 0 17 14"><path d="M2 12.5 H15 M2 12 L13 2" stroke="#808080" stroke-width="1.5" fill="none"/><path d="M10 2 H14 V6 Z" fill="#808080"/><path d="M9 6 Q13 9 14 12" stroke="#f00" stroke-width="1.5" fill="none"/></svg><div class="t" style="left:79px;top:558px;">φ = 94.497 °</div><div class="a" style="left:46px;top:588px;width:10px;height:1px;background-image:linear-gradient(90deg,#808080 50%,transparent 50%);background-size:2px 1px"></div><svg class="a" style="left:56px;top:581px" width="17" height="14" viewBox="0 0 17 14"><path d="M3.5 1 V13" stroke="#000"/><path d="M3 12 H14" stroke="#f00" stroke-width="2"/><path d="M4 11 L12 3" stroke="#808080" stroke-width="1.6"/><path d="M9 2 H13 V6 Z" fill="#808080"/></svg><div class="t" style="left:79px;top:582px;">H<sub>ax</sub> = -110.48 А/м</div><div class="a" style="left:46px;top:612px;width:10px;height:1px;background-image:linear-gradient(90deg,#808080 50%,transparent 50%);background-size:2px 1px"></div><svg class="a" style="left:56px;top:605px" width="17" height="14" viewBox="0 0 17 14"><path d="M3 12.5 H14" stroke="#000"/><path d="M3 1 V13" stroke="#f00" stroke-width="2"/><path d="M4 11 L12 3" stroke="#808080" stroke-width="1.6"/><path d="M9 2 H13 V6 Z" fill="#808080"/></svg><div class="t" style="left:79px;top:606px;">H<sub>ay</sub> = 1404.6 А/м</div><div class="a" style="left:27px;top:636px;width:10px;height:1px;background-image:linear-gradient(90deg,#808080 50%,transparent 50%);background-size:2px 1px"></div><svg class="a" style="left:37px;top:629px" width="17" height="15" viewBox="0 0 17 15" shape-rendering="crispEdges"><rect x="0" y="0" width="15" height="14" fill="#D4D0C8"/><rect x="1" y="1" width="14" height="13" fill="#fff"/><rect x="2" y="2" width="13" height="12" fill="#000"/><rect x="2" y="2" width="12" height="11" fill="#B8BCB4"/><path d="M4.5 12 V4.5 H14 M6.5 12 V6.5 H14 M8.5 12 V8.5 H14 M10.5 12 V10.5 H14" stroke="#DCDCD8" fill="none"/><rect x="15" y="2" width="1" height="13" fill="#000"/><rect x="2" y="14" width="14" height="1" fill="#000"/></svg><div class="t" style="left:58px;top:630px;">Средний квадрат индукции</div><div class="a" style="left:27px;top:660px;width:10px;height:1px;background-image:linear-gradient(90deg,#808080 50%,transparent 50%);background-size:2px 1px"></div><svg class="a" style="left:37px;top:653px" width="17" height="15" viewBox="0 0 17 15" shape-rendering="crispEdges"><rect x="0" y="0" width="15" height="14" fill="#D4D0C8"/><rect x="1" y="1" width="14" height="13" fill="#fff"/><rect x="2" y="2" width="13" height="12" fill="#000"/><rect x="2" y="2" width="12" height="11" fill="#B8BCB4"/><path d="M4.5 12 V4.5 H14 M6.5 12 V6.5 H14 M8.5 12 V8.5 H14 M10.5 12 V10.5 H14" stroke="#DCDCD8" fill="none"/><rect x="15" y="2" width="1" height="13" fill="#000"/><rect x="2" y="14" width="14" height="1" fill="#000"/></svg><div class="t" style="left:58px;top:654px;">Средний квадрат напряженности</div><div class="a" style="left:27px;top:684px;width:10px;height:1px;background-image:linear-gradient(90deg,#808080 50%,transparent 50%);background-size:2px 1px"></div><svg class="a" style="left:37px;top:677px" width="17" height="15" viewBox="0 0 17 15" shape-rendering="crispEdges"><rect x="0" y="0" width="15" height="14" fill="#D4D0C8"/><rect x="1" y="1" width="14" height="13" fill="#fff"/><rect x="2" y="2" width="13" height="12" fill="#000"/><rect x="2" y="2" width="12" height="11" fill="#B8BCB4"/><path d="M4.5 12 V4.5 H14 M6.5 12 V6.5 H14 M8.5 12 V8.5 H14 M10.5 12 V10.5 H14" stroke="#DCDCD8" fill="none"/><rect x="15" y="2" width="1" height="13" fill="#000"/><rect x="2" y="14" width="14" height="1" fill="#000"/></svg><div class="t" style="left:58px;top:678px;">Интеграл от индукции по поверхности</div><div class="a" style="left:27px;top:708px;width:10px;height:1px;background-image:linear-gradient(90deg,#808080 50%,transparent 50%);background-size:2px 1px"></div><svg class="a" style="left:37px;top:701px" width="17" height="15" viewBox="0 0 17 15" shape-rendering="crispEdges"><rect x="0" y="0" width="15" height="14" fill="#D4D0C8"/><rect x="1" y="1" width="14" height="13" fill="#fff"/><rect x="2" y="2" width="13" height="12" fill="#000"/><rect x="2" y="2" width="12" height="11" fill="#B8BCB4"/><path d="M4.5 12 V4.5 H14 M6.5 12 V6.5 H14 M8.5 12 V8.5 H14 M10.5 12 V10.5 H14" stroke="#DCDCD8" fill="none"/><rect x="15" y="2" width="1" height="13" fill="#000"/><rect x="2" y="14" width="14" height="1" fill="#000"/></svg><div class="t" style="left:58px;top:702px;">Поверхностный интеграл</div></div><div class="a track" style="left:405px;top:86px;width:16px;height:709px"></div><div class="a raised2" style="left:405px;top:86px;width:16px;height:16px"><svg class="a" style="left:-1px;top:-1px" width="16" height="16"><path d="M4 10 H11 L7.5 6.5 Z" fill="#000"/></svg></div><div class="a raised2" style="left:405px;top:779px;width:16px;height:16px"><svg class="a" style="left:-1px;top:-1px" width="16" height="16"><path d="M4 6 H11 L7.5 9.5 Z" fill="#000"/></svg></div><div class="a raised2" style="left:405px;top:162px;width:16px;height:576px"></div><div class="a" style="left:405px;top:795px;width:16px;height:16px;background:#D4D0C8"></div><div class="a track" style="left:215px;top:795px;width:190px;height:16px"></div><div class="a raised2" style="left:215px;top:795px;width:16px;height:16px"><svg class="a" style="left:-1px;top:-1px" width="16" height="16"><path d="M9 4 V11 L5.5 7.5 Z" fill="#000"/></svg></div><div class="a raised2" style="left:389px;top:795px;width:16px;height:16px"><svg class="a" style="left:-1px;top:-1px" width="16" height="16"><path d="M6 4 V11 L9.5 7.5 Z" fill="#000"/></svg></div><div class="a raised2" style="left:230px;top:795px;width:104px;height:16px"></div>

<!-- MAIN VIEW -->
<div class="vl" style="left:431px;top:65px;height:752px;background:#fff"></div><div class="a" style="left:434px;top:64px;width:639px;height:753px;background:#fff;border-left:1px solid #808080;border-top:1px solid #000;box-shadow:inset 1px 0 #000"></div><!-- PLOT -->
<svg class="a" style="left:436px;top:65px" width="619" height="735" viewBox="436 65 619 735">
<defs>
<clipPath id="core"><circle cx="745.5" cy="433.0" r="140"/></clipPath>
<clipPath id="outer"><path d="M487.5 433.0 a258 258 0 1 0 516 0 a258 258 0 1 0 -516 0 Z M544.5 433.0 a201 201 0 1 1 402 0 a201 201 0 1 1 -402 0 Z" clip-rule="evenodd"/></clipPath>
<clipPath id="seg0"><path d="M745.5 191.0 A242 242 0 0 1 955.1 312.0 L913.5 336.0 A194 194 0 0 0 745.5 239.0 Z"/></clipPath>
<clipPath id="seg1"><path d="M955.1 312.0 A242 242 0 0 1 955.1 554.0 L913.5 530.0 A194 194 0 0 0 913.5 336.0 Z"/></clipPath>
<clipPath id="seg2"><path d="M955.1 554.0 A242 242 0 0 1 745.5 675.0 L745.5 627.0 A194 194 0 0 0 913.5 530.0 Z"/></clipPath>
<clipPath id="seg3"><path d="M745.5 675.0 A242 242 0 0 1 535.9 554.0 L577.5 530.0 A194 194 0 0 0 745.5 627.0 Z"/></clipPath>
<clipPath id="seg4"><path d="M535.9 554.0 A242 242 0 0 1 535.9 312.0 L577.5 336.0 A194 194 0 0 0 577.5 530.0 Z"/></clipPath>
<clipPath id="seg5"><path d="M535.9 312.0 A242 242 0 0 1 745.5 191.0 L745.5 239.0 A194 194 0 0 0 577.5 336.0 Z"/></clipPath>
</defs>
<path d="M745.5 175.0 A258 258 0 0 1 753.6 175.1 L753.1 191.6 A241.5 241.5 0 0 0 745.5 191.5 Z" fill="#FF7000"/>
<path d="M752.3 175.1 A258 258 0 0 1 760.4 175.4 L759.4 191.9 A241.5 241.5 0 0 0 751.8 191.6 Z" fill="#FF7000"/>
<path d="M759.0 175.4 A258 258 0 0 1 767.1 175.9 L765.7 192.3 A241.5 241.5 0 0 0 758.1 191.8 Z" fill="#FF7000"/>
<path d="M765.7 175.8 A258 258 0 0 1 773.8 176.6 L772.0 193.0 A241.5 241.5 0 0 0 764.4 192.2 Z" fill="#FF7000"/>
<path d="M772.5 176.4 A258 258 0 0 1 780.5 177.4 L778.3 193.7 A241.5 241.5 0 0 0 770.7 192.8 Z" fill="#FF7000"/>
<path d="M779.2 177.2 A258 258 0 0 1 787.2 178.4 L784.5 194.7 A241.5 241.5 0 0 0 777.0 193.6 Z" fill="#FF7000"/>
<path d="M785.9 178.2 A258 258 0 0 1 793.8 179.6 L790.8 195.8 A241.5 241.5 0 0 0 783.3 194.5 Z" fill="#FF7000"/>
<path d="M792.5 179.3 A258 258 0 0 1 800.5 180.9 L796.9 197.0 A241.5 241.5 0 0 0 789.5 195.5 Z" fill="#FFC800"/>
<path d="M799.1 180.6 A258 258 0 0 1 807.0 182.4 L803.1 198.5 A241.5 241.5 0 0 0 795.7 196.8 Z" fill="#FFC800"/>
<path d="M805.7 182.1 A258 258 0 0 1 813.6 184.1 L809.2 200.1 A241.5 241.5 0 0 0 801.9 198.2 Z" fill="#FFC800"/>
<path d="M812.3 183.8 A258 258 0 0 1 820.1 186.0 L815.3 201.8 A241.5 241.5 0 0 0 808.0 199.7 Z" fill="#FFC800"/>
<path d="M818.8 185.6 A258 258 0 0 1 826.5 188.0 L821.3 203.7 A241.5 241.5 0 0 0 814.1 201.4 Z" fill="#FFFF00"/>
<path d="M825.2 187.6 A258 258 0 0 1 832.9 190.3 L827.3 205.8 A241.5 241.5 0 0 0 820.1 203.3 Z" fill="#80FF00"/>
<path d="M831.6 189.8 A258 258 0 0 1 839.2 192.6 L833.2 208.0 A241.5 241.5 0 0 0 826.1 205.4 Z" fill="#00F8E0"/>
<path d="M838.0 192.1 A258 258 0 0 1 845.5 195.2 L839.1 210.4 A241.5 241.5 0 0 0 832.0 207.5 Z" fill="#00F8E0"/>
<path d="M844.2 194.6 A258 258 0 0 1 851.7 197.9 L844.9 212.9 A241.5 241.5 0 0 0 837.9 209.9 Z" fill="#00F8E0"/>
<path d="M850.4 197.3 A258 258 0 0 1 857.8 200.7 L850.6 215.6 A241.5 241.5 0 0 0 843.7 212.4 Z" fill="#10A8FF"/>
<path d="M856.6 200.1 A258 258 0 0 1 863.8 203.7 L856.3 218.4 A241.5 241.5 0 0 0 849.5 215.0 Z" fill="#10A8FF"/>
<path d="M862.6 203.1 A258 258 0 0 1 869.8 206.9 L861.8 221.4 A241.5 241.5 0 0 0 855.1 217.8 Z" fill="#10A8FF"/>
<path d="M868.6 206.3 A258 258 0 0 1 875.7 210.2 L867.3 224.5 A241.5 241.5 0 0 0 860.7 220.8 Z" fill="#0068FF"/>
<path d="M874.5 209.6 A258 258 0 0 1 881.5 213.7 L872.8 227.8 A241.5 241.5 0 0 0 866.2 223.9 Z" fill="#0068FF"/>
<path d="M880.3 213.0 A258 258 0 0 1 887.1 217.4 L878.1 231.2 A241.5 241.5 0 0 0 871.7 227.1 Z" fill="#10A8FF"/>
<path d="M886.0 216.6 A258 258 0 0 1 892.7 221.1 L883.3 234.7 A241.5 241.5 0 0 0 877.0 230.5 Z" fill="#10A8FF"/>
<path d="M891.6 220.4 A258 258 0 0 1 898.2 225.1 L888.5 238.4 A241.5 241.5 0 0 0 882.3 234.0 Z" fill="#10A8FF"/>
<path d="M897.1 224.3 A258 258 0 0 1 903.6 229.1 L893.5 242.2 A241.5 241.5 0 0 0 887.5 237.6 Z" fill="#00F8E0"/>
<path d="M902.6 228.3 A258 258 0 0 1 908.9 233.3 L898.5 246.1 A241.5 241.5 0 0 0 892.5 241.4 Z" fill="#00F8E0"/>
<path d="M907.9 232.5 A258 258 0 0 1 914.1 237.7 L903.3 250.2 A241.5 241.5 0 0 0 897.5 245.3 Z" fill="#00F8E0"/>
<path d="M913.1 236.8 A258 258 0 0 1 919.1 242.2 L908.0 254.4 A241.5 241.5 0 0 0 902.3 249.4 Z" fill="#80FF00"/>
<path d="M918.1 241.3 A258 258 0 0 1 924.1 246.8 L912.7 258.7 A241.5 241.5 0 0 0 907.1 253.5 Z" fill="#FFFF00"/>
<path d="M923.1 245.9 A258 258 0 0 1 928.9 251.5 L917.2 263.1 A241.5 241.5 0 0 0 911.7 257.8 Z" fill="#FFC800"/>
<path d="M927.9 250.6 A258 258 0 0 1 933.6 256.4 L921.5 267.7 A241.5 241.5 0 0 0 916.3 262.2 Z" fill="#FFC800"/>
<path d="M932.6 255.4 A258 258 0 0 1 938.1 261.4 L925.8 272.3 A241.5 241.5 0 0 0 920.7 266.8 Z" fill="#FFC800"/>
<path d="M937.2 260.4 A258 258 0 0 1 942.6 266.5 L930.0 277.1 A241.5 241.5 0 0 0 925.0 271.4 Z" fill="#FFC800"/>
<path d="M941.7 265.4 A258 258 0 0 1 946.9 271.7 L934.0 282.0 A241.5 241.5 0 0 0 929.1 276.2 Z" fill="#FF7000"/>
<path d="M946.0 270.6 A258 258 0 0 1 951.0 277.0 L937.9 287.0 A241.5 241.5 0 0 0 933.2 281.0 Z" fill="#FF7000"/>
<path d="M950.2 275.9 A258 258 0 0 1 955.0 282.4 L941.6 292.1 A241.5 241.5 0 0 0 937.1 286.0 Z" fill="#FF7000"/>
<path d="M954.2 281.4 A258 258 0 0 1 958.9 288.0 L945.2 297.3 A241.5 241.5 0 0 0 940.9 291.0 Z" fill="#FF7000"/>
<path d="M958.1 286.9 A258 258 0 0 1 962.6 293.6 L948.7 302.5 A241.5 241.5 0 0 0 944.5 296.2 Z" fill="#FF7000"/>
<path d="M961.9 292.5 A258 258 0 0 1 966.2 299.3 L952.1 307.9 A241.5 241.5 0 0 0 948.0 301.5 Z" fill="#FF7000"/>
<path d="M965.5 298.2 A258 258 0 0 1 969.6 305.2 L955.3 313.3 A241.5 241.5 0 0 0 951.4 306.8 Z" fill="#FF7000"/>
<path d="M968.9 304.0 A258 258 0 0 1 972.9 311.1 L958.3 318.9 A241.5 241.5 0 0 0 954.6 312.2 Z" fill="#FF7000"/>
<path d="M972.2 309.9 A258 258 0 0 1 976.0 317.1 L961.2 324.5 A241.5 241.5 0 0 0 957.7 317.8 Z" fill="#FF7000"/>
<path d="M975.4 315.9 A258 258 0 0 1 978.9 323.1 L964.0 330.2 A241.5 241.5 0 0 0 960.7 323.4 Z" fill="#FF7000"/>
<path d="M978.4 321.9 A258 258 0 0 1 981.7 329.3 L966.6 335.9 A241.5 241.5 0 0 0 963.5 329.0 Z" fill="#FF7000"/>
<path d="M981.2 328.1 A258 258 0 0 1 984.4 335.5 L969.1 341.8 A241.5 241.5 0 0 0 966.1 334.8 Z" fill="#FF7000"/>
<path d="M983.9 334.3 A258 258 0 0 1 986.8 341.8 L971.4 347.6 A241.5 241.5 0 0 0 968.6 340.6 Z" fill="#FF7000"/>
<path d="M986.4 340.5 A258 258 0 0 1 989.1 348.2 L973.6 353.6 A241.5 241.5 0 0 0 971.0 346.5 Z" fill="#FF7000"/>
<path d="M988.7 346.9 A258 258 0 0 1 991.3 354.6 L975.6 359.6 A241.5 241.5 0 0 0 973.1 352.4 Z" fill="#FFC800"/>
<path d="M990.9 353.3 A258 258 0 0 1 993.3 361.0 L977.4 365.6 A241.5 241.5 0 0 0 975.2 358.4 Z" fill="#FFC800"/>
<path d="M992.9 359.7 A258 258 0 0 1 995.1 367.5 L979.1 371.7 A241.5 241.5 0 0 0 977.1 364.4 Z" fill="#FFC800"/>
<path d="M994.7 366.2 A258 258 0 0 1 996.7 374.1 L980.6 377.9 A241.5 241.5 0 0 0 978.8 370.5 Z" fill="#FFC800"/>
<path d="M996.4 372.8 A258 258 0 0 1 998.1 380.7 L982.0 384.0 A241.5 241.5 0 0 0 980.3 376.6 Z" fill="#FFFF00"/>
<path d="M997.9 379.4 A258 258 0 0 1 999.4 387.3 L983.2 390.2 A241.5 241.5 0 0 0 981.7 382.8 Z" fill="#80FF00"/>
<path d="M999.2 386.0 A258 258 0 0 1 1000.5 394.0 L984.2 396.5 A241.5 241.5 0 0 0 983.0 389.0 Z" fill="#00F8E0"/>
<path d="M1000.3 392.6 A258 258 0 0 1 1001.5 400.7 L985.1 402.7 A241.5 241.5 0 0 0 984.0 395.2 Z" fill="#00F8E0"/>
<path d="M1001.3 399.3 A258 258 0 0 1 1002.2 407.4 L985.8 409.0 A241.5 241.5 0 0 0 984.9 401.5 Z" fill="#00F8E0"/>
<path d="M1002.1 406.0 A258 258 0 0 1 1002.8 414.1 L986.4 415.3 A241.5 241.5 0 0 0 985.7 407.8 Z" fill="#10A8FF"/>
<path d="M1002.7 412.8 A258 258 0 0 1 1003.2 420.8 L986.7 421.6 A241.5 241.5 0 0 0 986.3 414.1 Z" fill="#10A8FF"/>
<path d="M1003.1 419.5 A258 258 0 0 1 1003.4 427.6 L986.9 427.9 A241.5 241.5 0 0 0 986.7 420.4 Z" fill="#10A8FF"/>
<path d="M1003.4 426.2 A258 258 0 0 1 1003.5 434.4 L987.0 434.3 A241.5 241.5 0 0 0 986.9 426.7 Z" fill="#0068FF"/>
<path d="M1003.5 433.0 A258 258 0 0 1 1003.4 441.1 L986.9 440.6 A241.5 241.5 0 0 0 987.0 433.0 Z" fill="#0068FF"/>
<path d="M1003.4 439.8 A258 258 0 0 1 1003.1 447.9 L986.6 446.9 A241.5 241.5 0 0 0 986.9 439.3 Z" fill="#10A8FF"/>
<path d="M1003.1 446.5 A258 258 0 0 1 1002.6 454.6 L986.2 453.2 A241.5 241.5 0 0 0 986.7 445.6 Z" fill="#10A8FF"/>
<path d="M1002.7 453.2 A258 258 0 0 1 1001.9 461.3 L985.5 459.5 A241.5 241.5 0 0 0 986.3 451.9 Z" fill="#10A8FF"/>
<path d="M1002.1 460.0 A258 258 0 0 1 1001.1 468.0 L984.8 465.8 A241.5 241.5 0 0 0 985.7 458.2 Z" fill="#00F8E0"/>
<path d="M1001.3 466.7 A258 258 0 0 1 1000.1 474.7 L983.8 472.0 A241.5 241.5 0 0 0 984.9 464.5 Z" fill="#00F8E0"/>
<path d="M1000.3 473.4 A258 258 0 0 1 998.9 481.3 L982.7 478.3 A241.5 241.5 0 0 0 984.0 470.8 Z" fill="#00F8E0"/>
<path d="M999.2 480.0 A258 258 0 0 1 997.6 488.0 L981.5 484.4 A241.5 241.5 0 0 0 983.0 477.0 Z" fill="#80FF00"/>
<path d="M997.9 486.6 A258 258 0 0 1 996.1 494.5 L980.0 490.6 A241.5 241.5 0 0 0 981.7 483.2 Z" fill="#FFFF00"/>
<path d="M996.4 493.2 A258 258 0 0 1 994.4 501.1 L978.4 496.7 A241.5 241.5 0 0 0 980.3 489.4 Z" fill="#FFC800"/>
<path d="M994.7 499.8 A258 258 0 0 1 992.5 507.6 L976.7 502.8 A241.5 241.5 0 0 0 978.8 495.5 Z" fill="#FFC800"/>
<path d="M992.9 506.3 A258 258 0 0 1 990.5 514.0 L974.8 508.8 A241.5 241.5 0 0 0 977.1 501.6 Z" fill="#FFC800"/>
<path d="M990.9 512.7 A258 258 0 0 1 988.2 520.4 L972.7 514.8 A241.5 241.5 0 0 0 975.2 507.6 Z" fill="#FFC800"/>
<path d="M988.7 519.1 A258 258 0 0 1 985.9 526.7 L970.5 520.7 A241.5 241.5 0 0 0 973.1 513.6 Z" fill="#FF7000"/>
<path d="M986.4 525.5 A258 258 0 0 1 983.3 533.0 L968.1 526.6 A241.5 241.5 0 0 0 971.0 519.5 Z" fill="#FF7000"/>
<path d="M983.9 531.7 A258 258 0 0 1 980.6 539.2 L965.6 532.4 A241.5 241.5 0 0 0 968.6 525.4 Z" fill="#FF7000"/>
<path d="M981.2 537.9 A258 258 0 0 1 977.8 545.3 L962.9 538.1 A241.5 241.5 0 0 0 966.1 531.2 Z" fill="#FF7000"/>
<path d="M978.4 544.1 A258 258 0 0 1 974.8 551.3 L960.1 543.8 A241.5 241.5 0 0 0 963.5 537.0 Z" fill="#FF7000"/>
<path d="M975.4 550.1 A258 258 0 0 1 971.6 557.3 L957.1 549.3 A241.5 241.5 0 0 0 960.7 542.6 Z" fill="#FF7000"/>
<path d="M972.2 556.1 A258 258 0 0 1 968.3 563.2 L954.0 554.8 A241.5 241.5 0 0 0 957.7 548.2 Z" fill="#FF7000"/>
<path d="M968.9 562.0 A258 258 0 0 1 964.8 569.0 L950.7 560.3 A241.5 241.5 0 0 0 954.6 553.8 Z" fill="#FF7000"/>
<path d="M965.5 567.8 A258 258 0 0 1 961.1 574.6 L947.3 565.6 A241.5 241.5 0 0 0 951.4 559.2 Z" fill="#FF7000"/>
<path d="M961.9 573.5 A258 258 0 0 1 957.4 580.2 L943.8 570.8 A241.5 241.5 0 0 0 948.0 564.5 Z" fill="#FF7000"/>
<path d="M958.1 579.1 A258 258 0 0 1 953.4 585.7 L940.1 576.0 A241.5 241.5 0 0 0 944.5 569.8 Z" fill="#FF7000"/>
<path d="M954.2 584.6 A258 258 0 0 1 949.4 591.1 L936.3 581.0 A241.5 241.5 0 0 0 940.9 575.0 Z" fill="#FF7000"/>
<path d="M950.2 590.1 A258 258 0 0 1 945.2 596.4 L932.4 586.0 A241.5 241.5 0 0 0 937.1 580.0 Z" fill="#FF7000"/>
<path d="M946.0 595.4 A258 258 0 0 1 940.8 601.6 L928.3 590.8 A241.5 241.5 0 0 0 933.2 585.0 Z" fill="#FF7000"/>
<path d="M941.7 600.6 A258 258 0 0 1 936.3 606.6 L924.1 595.5 A241.5 241.5 0 0 0 929.1 589.8 Z" fill="#FFC800"/>
<path d="M937.2 605.6 A258 258 0 0 1 931.7 611.6 L919.8 600.2 A241.5 241.5 0 0 0 925.0 594.6 Z" fill="#FFC800"/>
<path d="M932.6 610.6 A258 258 0 0 1 927.0 616.4 L915.4 604.7 A241.5 241.5 0 0 0 920.7 599.2 Z" fill="#FFC800"/>
<path d="M927.9 615.4 A258 258 0 0 1 922.1 621.1 L910.8 609.0 A241.5 241.5 0 0 0 916.3 603.8 Z" fill="#FFC800"/>
<path d="M923.1 620.1 A258 258 0 0 1 917.1 625.6 L906.2 613.3 A241.5 241.5 0 0 0 911.7 608.2 Z" fill="#FFFF00"/>
<path d="M918.1 624.7 A258 258 0 0 1 912.0 630.1 L901.4 617.5 A241.5 241.5 0 0 0 907.1 612.5 Z" fill="#80FF00"/>
<path d="M913.1 629.2 A258 258 0 0 1 906.8 634.4 L896.5 621.5 A241.5 241.5 0 0 0 902.3 616.6 Z" fill="#00F8E0"/>
<path d="M907.9 633.5 A258 258 0 0 1 901.5 638.5 L891.5 625.4 A241.5 241.5 0 0 0 897.5 620.7 Z" fill="#00F8E0"/>
<path d="M902.6 637.7 A258 258 0 0 1 896.1 642.5 L886.4 629.1 A241.5 241.5 0 0 0 892.5 624.6 Z" fill="#00F8E0"/>
<path d="M897.1 641.7 A258 258 0 0 1 890.5 646.4 L881.2 632.7 A241.5 241.5 0 0 0 887.5 628.4 Z" fill="#10A8FF"/>
<path d="M891.6 645.6 A258 258 0 0 1 884.9 650.1 L876.0 636.2 A241.5 241.5 0 0 0 882.3 632.0 Z" fill="#10A8FF"/>
<path d="M886.0 649.4 A258 258 0 0 1 879.2 653.7 L870.6 639.6 A241.5 241.5 0 0 0 877.0 635.5 Z" fill="#10A8FF"/>
<path d="M880.3 653.0 A258 258 0 0 1 873.3 657.1 L865.2 642.8 A241.5 241.5 0 0 0 871.7 638.9 Z" fill="#0068FF"/>
<path d="M874.5 656.4 A258 258 0 0 1 867.4 660.4 L859.6 645.8 A241.5 241.5 0 0 0 866.2 642.1 Z" fill="#0068FF"/>
<path d="M868.6 659.7 A258 258 0 0 1 861.4 663.5 L854.0 648.7 A241.5 241.5 0 0 0 860.7 645.2 Z" fill="#10A8FF"/>
<path d="M862.6 662.9 A258 258 0 0 1 855.4 666.4 L848.3 651.5 A241.5 241.5 0 0 0 855.1 648.2 Z" fill="#10A8FF"/>
<path d="M856.6 665.9 A258 258 0 0 1 849.2 669.2 L842.6 654.1 A241.5 241.5 0 0 0 849.5 651.0 Z" fill="#10A8FF"/>
<path d="M850.4 668.7 A258 258 0 0 1 843.0 671.9 L836.7 656.6 A241.5 241.5 0 0 0 843.7 653.6 Z" fill="#00F8E0"/>
<path d="M844.2 671.4 A258 258 0 0 1 836.7 674.3 L830.9 658.9 A241.5 241.5 0 0 0 837.9 656.1 Z" fill="#00F8E0"/>
<path d="M838.0 673.9 A258 258 0 0 1 830.3 676.6 L824.9 661.1 A241.5 241.5 0 0 0 832.0 658.5 Z" fill="#00F8E0"/>
<path d="M831.6 676.2 A258 258 0 0 1 823.9 678.8 L818.9 663.1 A241.5 241.5 0 0 0 826.1 660.6 Z" fill="#80FF00"/>
<path d="M825.2 678.4 A258 258 0 0 1 817.5 680.8 L812.9 664.9 A241.5 241.5 0 0 0 820.1 662.7 Z" fill="#FFFF00"/>
<path d="M818.8 680.4 A258 258 0 0 1 811.0 682.6 L806.8 666.6 A241.5 241.5 0 0 0 814.1 664.6 Z" fill="#FFC800"/>
<path d="M812.3 682.2 A258 258 0 0 1 804.4 684.2 L800.6 668.1 A241.5 241.5 0 0 0 808.0 666.3 Z" fill="#FFC800"/>
<path d="M805.7 683.9 A258 258 0 0 1 797.8 685.6 L794.5 669.5 A241.5 241.5 0 0 0 801.9 667.8 Z" fill="#FFC800"/>
<path d="M799.1 685.4 A258 258 0 0 1 791.2 686.9 L788.3 670.7 A241.5 241.5 0 0 0 795.7 669.2 Z" fill="#FFC800"/>
<path d="M792.5 686.7 A258 258 0 0 1 784.5 688.0 L782.0 671.7 A241.5 241.5 0 0 0 789.5 670.5 Z" fill="#FF7000"/>
<path d="M785.9 687.8 A258 258 0 0 1 777.8 689.0 L775.8 672.6 A241.5 241.5 0 0 0 783.3 671.5 Z" fill="#FF7000"/>
<path d="M779.2 688.8 A258 258 0 0 1 771.1 689.7 L769.5 673.3 A241.5 241.5 0 0 0 777.0 672.4 Z" fill="#FF7000"/>
<path d="M772.5 689.6 A258 258 0 0 1 764.4 690.3 L763.2 673.9 A241.5 241.5 0 0 0 770.7 673.2 Z" fill="#FF7000"/>
<path d="M765.7 690.2 A258 258 0 0 1 757.7 690.7 L756.9 674.2 A241.5 241.5 0 0 0 764.4 673.8 Z" fill="#FF7000"/>
<path d="M759.0 690.6 A258 258 0 0 1 750.9 690.9 L750.6 674.4 A241.5 241.5 0 0 0 758.1 674.2 Z" fill="#FF7000"/>
<path d="M752.3 690.9 A258 258 0 0 1 744.1 691.0 L744.2 674.5 A241.5 241.5 0 0 0 751.8 674.4 Z" fill="#FF7000"/>
<path d="M745.5 691.0 A258 258 0 0 1 737.4 690.9 L737.9 674.4 A241.5 241.5 0 0 0 745.5 674.5 Z" fill="#FF7000"/>
<path d="M738.7 690.9 A258 258 0 0 1 730.6 690.6 L731.6 674.1 A241.5 241.5 0 0 0 739.2 674.4 Z" fill="#FF7000"/>
<path d="M732.0 690.6 A258 258 0 0 1 723.9 690.1 L725.3 673.7 A241.5 241.5 0 0 0 732.9 674.2 Z" fill="#FF7000"/>
<path d="M725.3 690.2 A258 258 0 0 1 717.2 689.4 L719.0 673.0 A241.5 241.5 0 0 0 726.6 673.8 Z" fill="#FF7000"/>
<path d="M718.5 689.6 A258 258 0 0 1 710.5 688.6 L712.7 672.3 A241.5 241.5 0 0 0 720.3 673.2 Z" fill="#FF7000"/>
<path d="M711.8 688.8 A258 258 0 0 1 703.8 687.6 L706.5 671.3 A241.5 241.5 0 0 0 714.0 672.4 Z" fill="#FF7000"/>
<path d="M705.1 687.8 A258 258 0 0 1 697.2 686.4 L700.2 670.2 A241.5 241.5 0 0 0 707.7 671.5 Z" fill="#FF7000"/>
<path d="M698.5 686.7 A258 258 0 0 1 690.5 685.1 L694.1 669.0 A241.5 241.5 0 0 0 701.5 670.5 Z" fill="#FFC800"/>
<path d="M691.9 685.4 A258 258 0 0 1 684.0 683.6 L687.9 667.5 A241.5 241.5 0 0 0 695.3 669.2 Z" fill="#FFC800"/>
<path d="M685.3 683.9 A258 258 0 0 1 677.4 681.9 L681.8 665.9 A241.5 241.5 0 0 0 689.1 667.8 Z" fill="#FFC800"/>
<path d="M678.7 682.2 A258 258 0 0 1 670.9 680.0 L675.7 664.2 A241.5 241.5 0 0 0 683.0 666.3 Z" fill="#FFC800"/>
<path d="M672.2 680.4 A258 258 0 0 1 664.5 678.0 L669.7 662.3 A241.5 241.5 0 0 0 676.9 664.6 Z" fill="#FFFF00"/>
<path d="M665.8 678.4 A258 258 0 0 1 658.1 675.7 L663.7 660.2 A241.5 241.5 0 0 0 670.9 662.7 Z" fill="#80FF00"/>
<path d="M659.4 676.2 A258 258 0 0 1 651.8 673.4 L657.8 658.0 A241.5 241.5 0 0 0 664.9 660.6 Z" fill="#00F8E0"/>
<path d="M653.0 673.9 A258 258 0 0 1 645.5 670.8 L651.9 655.6 A241.5 241.5 0 0 0 659.0 658.5 Z" fill="#00F8E0"/>
<path d="M646.8 671.4 A258 258 0 0 1 639.3 668.1 L646.1 653.1 A241.5 241.5 0 0 0 653.1 656.1 Z" fill="#00F8E0"/>
<path d="M640.6 668.7 A258 258 0 0 1 633.2 665.3 L640.4 650.4 A241.5 241.5 0 0 0 647.3 653.6 Z" fill="#10A8FF"/>
<path d="M634.4 665.9 A258 258 0 0 1 627.2 662.3 L634.7 647.6 A241.5 241.5 0 0 0 641.5 651.0 Z" fill="#10A8FF"/>
<path d="M628.4 662.9 A258 258 0 0 1 621.2 659.1 L629.2 644.6 A241.5 241.5 0 0 0 635.9 648.2 Z" fill="#10A8FF"/>
<path d="M622.4 659.7 A258 258 0 0 1 615.3 655.8 L623.7 641.5 A241.5 241.5 0 0 0 630.3 645.2 Z" fill="#0068FF"/>
<path d="M616.5 656.4 A258 258 0 0 1 609.5 652.3 L618.2 638.2 A241.5 241.5 0 0 0 624.8 642.1 Z" fill="#0068FF"/>
<path d="M610.7 653.0 A258 258 0 0 1 603.9 648.6 L612.9 634.8 A241.5 241.5 0 0 0 619.3 638.9 Z" fill="#10A8FF"/>
<path d="M605.0 649.4 A258 258 0 0 1 598.3 644.9 L607.7 631.3 A241.5 241.5 0 0 0 614.0 635.5 Z" fill="#10A8FF"/>
<path d="M599.4 645.6 A258 258 0 0 1 592.8 640.9 L602.5 627.6 A241.5 241.5 0 0 0 608.7 632.0 Z" fill="#10A8FF"/>
<path d="M593.9 641.7 A258 258 0 0 1 587.4 636.9 L597.5 623.8 A241.5 241.5 0 0 0 603.5 628.4 Z" fill="#00F8E0"/>
<path d="M588.4 637.7 A258 258 0 0 1 582.1 632.7 L592.5 619.9 A241.5 241.5 0 0 0 598.5 624.6 Z" fill="#00F8E0"/>
<path d="M583.1 633.5 A258 258 0 0 1 576.9 628.3 L587.7 615.8 A241.5 241.5 0 0 0 593.5 620.7 Z" fill="#00F8E0"/>
<path d="M577.9 629.2 A258 258 0 0 1 571.9 623.8 L583.0 611.6 A241.5 241.5 0 0 0 588.7 616.6 Z" fill="#80FF00"/>
<path d="M572.9 624.7 A258 258 0 0 1 566.9 619.2 L578.3 607.3 A241.5 241.5 0 0 0 583.9 612.5 Z" fill="#FFFF00"/>
<path d="M567.9 620.1 A258 258 0 0 1 562.1 614.5 L573.8 602.9 A241.5 241.5 0 0 0 579.3 608.2 Z" fill="#FFC800"/>
<path d="M563.1 615.4 A258 258 0 0 1 557.4 609.6 L569.5 598.3 A241.5 241.5 0 0 0 574.7 603.8 Z" fill="#FFC800"/>
<path d="M558.4 610.6 A258 258 0 0 1 552.9 604.6 L565.2 593.7 A241.5 241.5 0 0 0 570.3 599.2 Z" fill="#FFC800"/>
<path d="M553.8 605.6 A258 258 0 0 1 548.4 599.5 L561.0 588.9 A241.5 241.5 0 0 0 566.0 594.6 Z" fill="#FFC800"/>
<path d="M549.3 600.6 A258 258 0 0 1 544.1 594.3 L557.0 584.0 A241.5 241.5 0 0 0 561.9 589.8 Z" fill="#FF7000"/>
<path d="M545.0 595.4 A258 258 0 0 1 540.0 589.0 L553.1 579.0 A241.5 241.5 0 0 0 557.8 585.0 Z" fill="#FF7000"/>
<path d="M540.8 590.1 A258 258 0 0 1 536.0 583.6 L549.4 573.9 A241.5 241.5 0 0 0 553.9 580.0 Z" fill="#FF7000"/>
<path d="M536.8 584.6 A258 258 0 0 1 532.1 578.0 L545.8 568.7 A241.5 241.5 0 0 0 550.1 575.0 Z" fill="#FF7000"/>
<path d="M532.9 579.1 A258 258 0 0 1 528.4 572.4 L542.3 563.5 A241.5 241.5 0 0 0 546.5 569.8 Z" fill="#FF7000"/>
<path d="M529.1 573.5 A258 258 0 0 1 524.8 566.7 L538.9 558.1 A241.5 241.5 0 0 0 543.0 564.5 Z" fill="#FF7000"/>
<path d="M525.5 567.8 A258 258 0 0 1 521.4 560.8 L535.7 552.7 A241.5 241.5 0 0 0 539.6 559.2 Z" fill="#FF7000"/>
<path d="M522.1 562.0 A258 258 0 0 1 518.1 554.9 L532.7 547.1 A241.5 241.5 0 0 0 536.4 553.8 Z" fill="#FF7000"/>
<path d="M518.8 556.1 A258 258 0 0 1 515.0 548.9 L529.8 541.5 A241.5 241.5 0 0 0 533.3 548.2 Z" fill="#FF7000"/>
<path d="M515.6 550.1 A258 258 0 0 1 512.1 542.9 L527.0 535.8 A241.5 241.5 0 0 0 530.3 542.6 Z" fill="#FF7000"/>
<path d="M512.6 544.1 A258 258 0 0 1 509.3 536.7 L524.4 530.1 A241.5 241.5 0 0 0 527.5 537.0 Z" fill="#FF7000"/>
<path d="M509.8 537.9 A258 258 0 0 1 506.6 530.5 L521.9 524.2 A241.5 241.5 0 0 0 524.9 531.2 Z" fill="#FF7000"/>
<path d="M507.1 531.7 A258 258 0 0 1 504.2 524.2 L519.6 518.4 A241.5 241.5 0 0 0 522.4 525.4 Z" fill="#FF7000"/>
<path d="M504.6 525.5 A258 258 0 0 1 501.9 517.8 L517.4 512.4 A241.5 241.5 0 0 0 520.0 519.5 Z" fill="#FF7000"/>
<path d="M502.3 519.1 A258 258 0 0 1 499.7 511.4 L515.4 506.4 A241.5 241.5 0 0 0 517.9 513.6 Z" fill="#FFC800"/>
<path d="M500.1 512.7 A258 258 0 0 1 497.7 505.0 L513.6 500.4 A241.5 241.5 0 0 0 515.8 507.6 Z" fill="#FFC800"/>
<path d="M498.1 506.3 A258 258 0 0 1 495.9 498.5 L511.9 494.3 A241.5 241.5 0 0 0 513.9 501.6 Z" fill="#FFC800"/>
<path d="M496.3 499.8 A258 258 0 0 1 494.3 491.9 L510.4 488.1 A241.5 241.5 0 0 0 512.2 495.5 Z" fill="#FFC800"/>
<path d="M494.6 493.2 A258 258 0 0 1 492.9 485.3 L509.0 482.0 A241.5 241.5 0 0 0 510.7 489.4 Z" fill="#FFFF00"/>
<path d="M493.1 486.6 A258 258 0 0 1 491.6 478.7 L507.8 475.8 A241.5 241.5 0 0 0 509.3 483.2 Z" fill="#80FF00"/>
<path d="M491.8 480.0 A258 258 0 0 1 490.5 472.0 L506.8 469.5 A241.5 241.5 0 0 0 508.0 477.0 Z" fill="#00F8E0"/>
<path d="M490.7 473.4 A258 258 0 0 1 489.5 465.3 L505.9 463.3 A241.5 241.5 0 0 0 507.0 470.8 Z" fill="#00F8E0"/>
<path d="M489.7 466.7 A258 258 0 0 1 488.8 458.6 L505.2 457.0 A241.5 241.5 0 0 0 506.1 464.5 Z" fill="#00F8E0"/>
<path d="M488.9 460.0 A258 258 0 0 1 488.2 451.9 L504.6 450.7 A241.5 241.5 0 0 0 505.3 458.2 Z" fill="#10A8FF"/>
<path d="M488.3 453.2 A258 258 0 0 1 487.8 445.2 L504.3 444.4 A241.5 241.5 0 0 0 504.7 451.9 Z" fill="#10A8FF"/>
<path d="M487.9 446.5 A258 258 0 0 1 487.6 438.4 L504.1 438.1 A241.5 241.5 0 0 0 504.3 445.6 Z" fill="#10A8FF"/>
<path d="M487.6 439.8 A258 258 0 0 1 487.5 431.6 L504.0 431.7 A241.5 241.5 0 0 0 504.1 439.3 Z" fill="#0068FF"/>
<path d="M487.5 433.0 A258 258 0 0 1 487.6 424.9 L504.1 425.4 A241.5 241.5 0 0 0 504.0 433.0 Z" fill="#0068FF"/>
<path d="M487.6 426.2 A258 258 0 0 1 487.9 418.1 L504.4 419.1 A241.5 241.5 0 0 0 504.1 426.7 Z" fill="#10A8FF"/>
<path d="M487.9 419.5 A258 258 0 0 1 488.4 411.4 L504.8 412.8 A241.5 241.5 0 0 0 504.3 420.4 Z" fill="#10A8FF"/>
<path d="M488.3 412.8 A258 258 0 0 1 489.1 404.7 L505.5 406.5 A241.5 241.5 0 0 0 504.7 414.1 Z" fill="#10A8FF"/>
<path d="M488.9 406.0 A258 258 0 0 1 489.9 398.0 L506.2 400.2 A241.5 241.5 0 0 0 505.3 407.8 Z" fill="#00F8E0"/>
<path d="M489.7 399.3 A258 258 0 0 1 490.9 391.3 L507.2 394.0 A241.5 241.5 0 0 0 506.1 401.5 Z" fill="#00F8E0"/>
<path d="M490.7 392.6 A258 258 0 0 1 492.1 384.7 L508.3 387.7 A241.5 241.5 0 0 0 507.0 395.2 Z" fill="#00F8E0"/>
<path d="M491.8 386.0 A258 258 0 0 1 493.4 378.0 L509.5 381.6 A241.5 241.5 0 0 0 508.0 389.0 Z" fill="#80FF00"/>
<path d="M493.1 379.4 A258 258 0 0 1 494.9 371.5 L511.0 375.4 A241.5 241.5 0 0 0 509.3 382.8 Z" fill="#FFFF00"/>
<path d="M494.6 372.8 A258 258 0 0 1 496.6 364.9 L512.6 369.3 A241.5 241.5 0 0 0 510.7 376.6 Z" fill="#FFC800"/>
<path d="M496.3 366.2 A258 258 0 0 1 498.5 358.4 L514.3 363.2 A241.5 241.5 0 0 0 512.2 370.5 Z" fill="#FFC800"/>
<path d="M498.1 359.7 A258 258 0 0 1 500.5 352.0 L516.2 357.2 A241.5 241.5 0 0 0 513.9 364.4 Z" fill="#FFC800"/>
<path d="M500.1 353.3 A258 258 0 0 1 502.8 345.6 L518.3 351.2 A241.5 241.5 0 0 0 515.8 358.4 Z" fill="#FFC800"/>
<path d="M502.3 346.9 A258 258 0 0 1 505.1 339.3 L520.5 345.3 A241.5 241.5 0 0 0 517.9 352.4 Z" fill="#FF7000"/>
<path d="M504.6 340.5 A258 258 0 0 1 507.7 333.0 L522.9 339.4 A241.5 241.5 0 0 0 520.0 346.5 Z" fill="#FF7000"/>
<path d="M507.1 334.3 A258 258 0 0 1 510.4 326.8 L525.4 333.6 A241.5 241.5 0 0 0 522.4 340.6 Z" fill="#FF7000"/>
<path d="M509.8 328.1 A258 258 0 0 1 513.2 320.7 L528.1 327.9 A241.5 241.5 0 0 0 524.9 334.8 Z" fill="#FF7000"/>
<path d="M512.6 321.9 A258 258 0 0 1 516.2 314.7 L530.9 322.2 A241.5 241.5 0 0 0 527.5 329.0 Z" fill="#FF7000"/>
<path d="M515.6 315.9 A258 258 0 0 1 519.4 308.7 L533.9 316.7 A241.5 241.5 0 0 0 530.3 323.4 Z" fill="#FF7000"/>
<path d="M518.8 309.9 A258 258 0 0 1 522.7 302.8 L537.0 311.2 A241.5 241.5 0 0 0 533.3 317.8 Z" fill="#FF7000"/>
<path d="M522.1 304.0 A258 258 0 0 1 526.2 297.0 L540.3 305.7 A241.5 241.5 0 0 0 536.4 312.2 Z" fill="#FF7000"/>
<path d="M525.5 298.2 A258 258 0 0 1 529.9 291.4 L543.7 300.4 A241.5 241.5 0 0 0 539.6 306.8 Z" fill="#FF7000"/>
<path d="M529.1 292.5 A258 258 0 0 1 533.6 285.8 L547.2 295.2 A241.5 241.5 0 0 0 543.0 301.5 Z" fill="#FF7000"/>
<path d="M532.9 286.9 A258 258 0 0 1 537.6 280.3 L550.9 290.0 A241.5 241.5 0 0 0 546.5 296.2 Z" fill="#FF7000"/>
<path d="M536.8 281.4 A258 258 0 0 1 541.6 274.9 L554.7 285.0 A241.5 241.5 0 0 0 550.1 291.0 Z" fill="#FF7000"/>
<path d="M540.8 275.9 A258 258 0 0 1 545.8 269.6 L558.6 280.0 A241.5 241.5 0 0 0 553.9 286.0 Z" fill="#FF7000"/>
<path d="M545.0 270.6 A258 258 0 0 1 550.2 264.4 L562.7 275.2 A241.5 241.5 0 0 0 557.8 281.0 Z" fill="#FF7000"/>
<path d="M549.3 265.4 A258 258 0 0 1 554.7 259.4 L566.9 270.5 A241.5 241.5 0 0 0 561.9 276.2 Z" fill="#FFC800"/>
<path d="M553.8 260.4 A258 258 0 0 1 559.3 254.4 L571.2 265.8 A241.5 241.5 0 0 0 566.0 271.4 Z" fill="#FFC800"/>
<path d="M558.4 255.4 A258 258 0 0 1 564.0 249.6 L575.6 261.3 A241.5 241.5 0 0 0 570.3 266.8 Z" fill="#FFC800"/>
<path d="M563.1 250.6 A258 258 0 0 1 568.9 244.9 L580.2 257.0 A241.5 241.5 0 0 0 574.7 262.2 Z" fill="#FFC800"/>
<path d="M567.9 245.9 A258 258 0 0 1 573.9 240.4 L584.8 252.7 A241.5 241.5 0 0 0 579.3 257.8 Z" fill="#FFFF00"/>
<path d="M572.9 241.3 A258 258 0 0 1 579.0 235.9 L589.6 248.5 A241.5 241.5 0 0 0 583.9 253.5 Z" fill="#80FF00"/>
<path d="M577.9 236.8 A258 258 0 0 1 584.2 231.6 L594.5 244.5 A241.5 241.5 0 0 0 588.7 249.4 Z" fill="#00F8E0"/>
<path d="M583.1 232.5 A258 258 0 0 1 589.5 227.5 L599.5 240.6 A241.5 241.5 0 0 0 593.5 245.3 Z" fill="#00F8E0"/>
<path d="M588.4 228.3 A258 258 0 0 1 594.9 223.5 L604.6 236.9 A241.5 241.5 0 0 0 598.5 241.4 Z" fill="#00F8E0"/>
<path d="M593.9 224.3 A258 258 0 0 1 600.5 219.6 L609.8 233.3 A241.5 241.5 0 0 0 603.5 237.6 Z" fill="#10A8FF"/>
<path d="M599.4 220.4 A258 258 0 0 1 606.1 215.9 L615.0 229.8 A241.5 241.5 0 0 0 608.7 234.0 Z" fill="#10A8FF"/>
<path d="M605.0 216.6 A258 258 0 0 1 611.8 212.3 L620.4 226.4 A241.5 241.5 0 0 0 614.0 230.5 Z" fill="#10A8FF"/>
<path d="M610.7 213.0 A258 258 0 0 1 617.7 208.9 L625.8 223.2 A241.5 241.5 0 0 0 619.3 227.1 Z" fill="#0068FF"/>
<path d="M616.5 209.6 A258 258 0 0 1 623.6 205.6 L631.4 220.2 A241.5 241.5 0 0 0 624.7 223.9 Z" fill="#0068FF"/>
<path d="M622.4 206.3 A258 258 0 0 1 629.6 202.5 L637.0 217.3 A241.5 241.5 0 0 0 630.3 220.8 Z" fill="#10A8FF"/>
<path d="M628.4 203.1 A258 258 0 0 1 635.6 199.6 L642.7 214.5 A241.5 241.5 0 0 0 635.9 217.8 Z" fill="#10A8FF"/>
<path d="M634.4 200.1 A258 258 0 0 1 641.8 196.8 L648.4 211.9 A241.5 241.5 0 0 0 641.5 215.0 Z" fill="#10A8FF"/>
<path d="M640.6 197.3 A258 258 0 0 1 648.0 194.1 L654.3 209.4 A241.5 241.5 0 0 0 647.3 212.4 Z" fill="#00F8E0"/>
<path d="M646.8 194.6 A258 258 0 0 1 654.3 191.7 L660.1 207.1 A241.5 241.5 0 0 0 653.1 209.9 Z" fill="#00F8E0"/>
<path d="M653.0 192.1 A258 258 0 0 1 660.7 189.4 L666.1 204.9 A241.5 241.5 0 0 0 659.0 207.5 Z" fill="#00F8E0"/>
<path d="M659.4 189.8 A258 258 0 0 1 667.1 187.2 L672.1 202.9 A241.5 241.5 0 0 0 664.9 205.4 Z" fill="#80FF00"/>
<path d="M665.8 187.6 A258 258 0 0 1 673.5 185.2 L678.1 201.1 A241.5 241.5 0 0 0 670.9 203.3 Z" fill="#FFFF00"/>
<path d="M672.2 185.6 A258 258 0 0 1 680.0 183.4 L684.2 199.4 A241.5 241.5 0 0 0 676.9 201.4 Z" fill="#FFC800"/>
<path d="M678.7 183.8 A258 258 0 0 1 686.6 181.8 L690.4 197.9 A241.5 241.5 0 0 0 683.0 199.7 Z" fill="#FFC800"/>
<path d="M685.3 182.1 A258 258 0 0 1 693.2 180.4 L696.5 196.5 A241.5 241.5 0 0 0 689.1 198.2 Z" fill="#FFC800"/>
<path d="M691.9 180.6 A258 258 0 0 1 699.8 179.1 L702.7 195.3 A241.5 241.5 0 0 0 695.3 196.8 Z" fill="#FFC800"/>
<path d="M698.5 179.3 A258 258 0 0 1 706.5 178.0 L709.0 194.3 A241.5 241.5 0 0 0 701.5 195.5 Z" fill="#FF7000"/>
<path d="M705.1 178.2 A258 258 0 0 1 713.2 177.0 L715.2 193.4 A241.5 241.5 0 0 0 707.7 194.5 Z" fill="#FF7000"/>
<path d="M711.8 177.2 A258 258 0 0 1 719.9 176.3 L721.5 192.7 A241.5 241.5 0 0 0 714.0 193.6 Z" fill="#FF7000"/>
<path d="M718.5 176.4 A258 258 0 0 1 726.6 175.7 L727.8 192.1 A241.5 241.5 0 0 0 720.3 192.8 Z" fill="#FF7000"/>
<path d="M725.3 175.8 A258 258 0 0 1 733.3 175.3 L734.1 191.8 A241.5 241.5 0 0 0 726.6 192.2 Z" fill="#FF7000"/>
<path d="M732.0 175.4 A258 258 0 0 1 740.1 175.1 L740.4 191.6 A241.5 241.5 0 0 0 732.9 191.8 Z" fill="#FF7000"/>
<path d="M738.7 175.1 A258 258 0 0 1 746.9 175.0 L746.8 191.5 A241.5 241.5 0 0 0 739.2 191.6 Z" fill="#FF7000"/>
<path d="M503.5 433.0 a242 242 0 1 0 484 0 a242 242 0 1 0 -484 0 Z M545.5 433.0 a200 200 0 1 1 400 0 a200 200 0 1 1 -400 0 Z" fill="#10A8FF" fill-rule="evenodd"/>
<path d="M545.5 433.0 a200 200 0 1 0 400 0 a200 200 0 1 0 -400 0 Z M555.5 433.0 a190 190 0 1 1 380 0 a190 190 0 1 1 -380 0 Z" fill="#1896FF" fill-rule="evenodd"/>
<g clip-path="url(#seg0)" stroke="#000" stroke-width="1" fill="none" shape-rendering="crispEdges"><path d="M742.4 223.4 L777.4 162.7"/><path d="M749.9 227.7 L784.9 167.0"/><path d="M757.3 232.0 L792.3 171.3"/><path d="M764.7 236.3 L799.7 175.6"/><path d="M772.2 240.6 L807.2 179.9"/><path d="M779.6 244.9 L814.6 184.2"/><path d="M787.1 249.2 L822.1 188.5"/><path d="M794.5 253.5 L829.5 192.8"/><path d="M802.0 257.8 L837.0 197.1"/><path d="M809.4 262.1 L844.4 201.4"/><path d="M816.9 266.4 L851.9 205.7"/><path d="M824.3 270.7 L859.3 210.0"/><path d="M831.8 275.0 L866.8 214.3"/><path d="M839.2 279.3 L874.2 218.6"/><path d="M846.7 283.6 L881.7 222.9"/><path d="M854.1 287.9 L889.1 227.2"/><path d="M861.6 292.2 L896.6 231.5"/><path d="M869.0 296.5 L904.0 235.8"/><path d="M876.5 300.8 L911.5 240.1"/><path d="M883.9 305.1 L918.9 244.4"/><path d="M891.4 309.4 L926.4 248.7"/><path d="M898.8 313.7 L933.8 253.0"/><path d="M906.3 318.0 L941.3 257.3"/><path d="M913.7 322.3 L948.7 261.6"/><path d="M921.1 326.6 L956.1 265.9"/><path d="M928.6 330.9 L963.6 270.2"/><path d="M936.0 335.2 L971.0 274.5"/></g>
<g clip-path="url(#seg1)" stroke="#000" stroke-width="1" fill="none" shape-rendering="crispEdges"><path d="M925.5 325.5 L995.5 325.5"/><path d="M925.5 334.1 L995.5 334.1"/><path d="M925.5 342.7 L995.5 342.7"/><path d="M925.5 351.3 L995.5 351.3"/><path d="M925.5 359.9 L995.5 359.9"/><path d="M925.5 368.5 L995.5 368.5"/><path d="M925.5 377.1 L995.5 377.1"/><path d="M925.5 385.7 L995.5 385.7"/><path d="M925.5 394.3 L995.5 394.3"/><path d="M925.5 402.9 L995.5 402.9"/><path d="M925.5 411.5 L995.5 411.5"/><path d="M925.5 420.1 L995.5 420.1"/><path d="M925.5 428.7 L995.5 428.7"/><path d="M925.5 437.3 L995.5 437.3"/><path d="M925.5 445.9 L995.5 445.9"/><path d="M925.5 454.5 L995.5 454.5"/><path d="M925.5 463.1 L995.5 463.1"/><path d="M925.5 471.7 L995.5 471.7"/><path d="M925.5 480.3 L995.5 480.3"/><path d="M925.5 488.9 L995.5 488.9"/><path d="M925.5 497.5 L995.5 497.5"/><path d="M925.5 506.1 L995.5 506.1"/><path d="M925.5 514.7 L995.5 514.7"/><path d="M925.5 523.3 L995.5 523.3"/><path d="M925.5 531.9 L995.5 531.9"/><path d="M925.5 540.5 L995.5 540.5"/><path d="M925.5 549.1 L995.5 549.1"/></g>
<g clip-path="url(#seg2)" stroke="#000" stroke-width="1" fill="none" shape-rendering="crispEdges"><path d="M928.6 535.1 L963.6 595.8"/><path d="M921.1 539.4 L956.1 600.1"/><path d="M913.7 543.7 L948.7 604.4"/><path d="M906.3 548.0 L941.3 608.7"/><path d="M898.8 552.3 L933.8 613.0"/><path d="M891.4 556.6 L926.4 617.3"/><path d="M883.9 560.9 L918.9 621.6"/><path d="M876.5 565.2 L911.5 625.9"/><path d="M869.0 569.5 L904.0 630.2"/><path d="M861.6 573.8 L896.6 634.5"/><path d="M854.1 578.1 L889.1 638.8"/><path d="M846.7 582.4 L881.7 643.1"/><path d="M839.2 586.7 L874.2 647.4"/><path d="M831.8 591.0 L866.8 651.7"/><path d="M824.3 595.3 L859.3 656.0"/><path d="M816.9 599.6 L851.9 660.3"/><path d="M809.4 603.9 L844.4 664.6"/><path d="M802.0 608.2 L837.0 668.9"/><path d="M794.5 612.5 L829.5 673.2"/><path d="M787.1 616.8 L822.1 677.5"/><path d="M779.6 621.1 L814.6 681.8"/><path d="M772.2 625.4 L807.2 686.1"/><path d="M764.7 629.7 L799.7 690.4"/><path d="M757.3 634.0 L792.3 694.7"/><path d="M749.9 638.3 L784.9 699.0"/><path d="M742.4 642.6 L777.4 703.3"/><path d="M735.0 646.9 L770.0 707.6"/></g>
<g clip-path="url(#seg3)" stroke="#000" stroke-width="1" fill="none" shape-rendering="crispEdges"><path d="M748.6 642.6 L713.6 703.3"/><path d="M741.1 638.3 L706.1 699.0"/><path d="M733.7 634.0 L698.7 694.7"/><path d="M726.3 629.7 L691.3 690.4"/><path d="M718.8 625.4 L683.8 686.1"/><path d="M711.4 621.1 L676.4 681.8"/><path d="M703.9 616.8 L668.9 677.5"/><path d="M696.5 612.5 L661.5 673.2"/><path d="M689.0 608.2 L654.0 668.9"/><path d="M681.6 603.9 L646.6 664.6"/><path d="M674.1 599.6 L639.1 660.3"/><path d="M666.7 595.3 L631.7 656.0"/><path d="M659.2 591.0 L624.2 651.7"/><path d="M651.8 586.7 L616.8 647.4"/><path d="M644.3 582.4 L609.3 643.1"/><path d="M636.9 578.1 L601.9 638.8"/><path d="M629.4 573.8 L594.4 634.5"/><path d="M622.0 569.5 L587.0 630.2"/><path d="M614.5 565.2 L579.5 625.9"/><path d="M607.1 560.9 L572.1 621.6"/><path d="M599.6 556.6 L564.6 617.3"/><path d="M592.2 552.3 L557.2 613.0"/><path d="M584.7 548.0 L549.7 608.7"/><path d="M577.3 543.7 L542.3 604.4"/><path d="M569.9 539.4 L534.9 600.1"/><path d="M562.4 535.1 L527.4 595.8"/><path d="M555.0 530.8 L520.0 591.5"/></g>
<g clip-path="url(#seg4)" stroke="#000" stroke-width="1" fill="none" shape-rendering="crispEdges"><path d="M565.5 540.5 L495.5 540.5"/><path d="M565.5 531.9 L495.5 531.9"/><path d="M565.5 523.3 L495.5 523.3"/><path d="M565.5 514.7 L495.5 514.7"/><path d="M565.5 506.1 L495.5 506.1"/><path d="M565.5 497.5 L495.5 497.5"/><path d="M565.5 488.9 L495.5 488.9"/><path d="M565.5 480.3 L495.5 480.3"/><path d="M565.5 471.7 L495.5 471.7"/><path d="M565.5 463.1 L495.5 463.1"/><path d="M565.5 454.5 L495.5 454.5"/><path d="M565.5 445.9 L495.5 445.9"/><path d="M565.5 437.3 L495.5 437.3"/><path d="M565.5 428.7 L495.5 428.7"/><path d="M565.5 420.1 L495.5 420.1"/><path d="M565.5 411.5 L495.5 411.5"/><path d="M565.5 402.9 L495.5 402.9"/><path d="M565.5 394.3 L495.5 394.3"/><path d="M565.5 385.7 L495.5 385.7"/><path d="M565.5 377.1 L495.5 377.1"/><path d="M565.5 368.5 L495.5 368.5"/><path d="M565.5 359.9 L495.5 359.9"/><path d="M565.5 351.3 L495.5 351.3"/><path d="M565.5 342.7 L495.5 342.7"/><path d="M565.5 334.1 L495.5 334.1"/><path d="M565.5 325.5 L495.5 325.5"/><path d="M565.5 316.9 L495.5 316.9"/></g>
<g clip-path="url(#seg5)" stroke="#000" stroke-width="1" fill="none" shape-rendering="crispEdges"><path d="M562.4 330.9 L527.4 270.2"/><path d="M569.9 326.6 L534.9 265.9"/><path d="M577.3 322.3 L542.3 261.6"/><path d="M584.7 318.0 L549.7 257.3"/><path d="M592.2 313.7 L557.2 253.0"/><path d="M599.6 309.4 L564.6 248.7"/><path d="M607.1 305.1 L572.1 244.4"/><path d="M614.5 300.8 L579.5 240.1"/><path d="M622.0 296.5 L587.0 235.8"/><path d="M629.4 292.2 L594.4 231.5"/><path d="M636.9 287.9 L601.9 227.2"/><path d="M644.3 283.6 L609.3 222.9"/><path d="M651.8 279.3 L616.8 218.6"/><path d="M659.2 275.0 L624.2 214.3"/><path d="M666.7 270.7 L631.7 210.0"/><path d="M674.1 266.4 L639.1 205.7"/><path d="M681.6 262.1 L646.6 201.4"/><path d="M689.0 257.8 L654.0 197.1"/><path d="M696.5 253.5 L661.5 192.8"/><path d="M703.9 249.2 L668.9 188.5"/><path d="M711.4 244.9 L676.4 184.2"/><path d="M718.8 240.6 L683.8 179.9"/><path d="M726.3 236.3 L691.3 175.6"/><path d="M733.7 232.0 L698.7 171.3"/><path d="M741.1 227.7 L706.1 167.0"/><path d="M748.6 223.4 L713.6 162.7"/><path d="M756.0 219.1 L721.0 158.4"/></g>
<g fill="#000"><path d="M760.0 210.2 L764.9 206.1 L761.1 203.9 Z"/><path d="M777.5 231.3 L782.4 227.2 L778.6 225.0 Z"/><path d="M813.5 220.6 L818.4 216.5 L814.6 214.3 Z"/><path d="M828.3 246.6 L833.2 242.5 L829.4 240.3 Z"/><path d="M860.7 242.1 L865.6 238.0 L861.8 235.8 Z"/><path d="M872.5 273.3 L877.4 269.2 L873.6 267.0 Z"/><path d="M901.9 273.9 L906.8 269.8 L903.0 267.6 Z"/><path d="M909.9 311.7 L914.8 307.6 L910.9 305.4 Z"/><path d="M951.7 334.1 L945.7 336.3 L945.7 331.9 Z"/><path d="M942.2 359.9 L936.2 362.1 L936.2 357.7 Z"/><path d="M969.5 385.7 L963.5 387.9 L963.5 383.5 Z"/><path d="M954.4 411.5 L948.4 413.7 L948.4 409.3 Z"/><path d="M974.5 437.3 L968.5 439.5 L968.5 435.1 Z"/><path d="M953.3 463.1 L947.3 465.3 L947.3 460.9 Z"/><path d="M967.5 488.9 L961.5 491.1 L961.5 486.7 Z"/><path d="M938.7 514.7 L932.7 516.9 L932.7 512.5 Z"/><path d="M931.3 556.9 L932.4 563.2 L936.2 561.0 Z"/><path d="M904.1 561.6 L905.2 567.9 L909.0 565.7 Z"/><path d="M895.5 598.1 L896.6 604.4 L900.4 602.2 Z"/><path d="M865.6 597.9 L866.7 604.2 L870.5 602.0 Z"/><path d="M853.3 628.2 L854.4 634.5 L858.2 632.3 Z"/><path d="M820.3 622.8 L821.4 629.1 L825.2 626.9 Z"/><path d="M805.1 648.0 L806.2 654.3 L810.0 652.1 Z"/><path d="M768.3 636.0 L769.4 642.3 L773.2 640.1 Z"/><path d="M728.0 661.0 L729.1 654.7 L732.9 656.9 Z"/><path d="M710.5 639.9 L711.6 633.6 L715.4 635.8 Z"/><path d="M674.5 650.6 L675.6 644.3 L679.4 646.5 Z"/><path d="M659.7 624.6 L660.8 618.3 L664.6 620.5 Z"/><path d="M627.3 629.1 L628.4 622.8 L632.2 625.0 Z"/><path d="M615.5 597.9 L616.6 591.6 L620.4 593.8 Z"/><path d="M586.1 597.3 L587.2 591.0 L591.0 593.2 Z"/><path d="M578.1 559.5 L579.2 553.2 L583.1 555.4 Z"/><path d="M545.3 531.9 L539.3 529.7 L539.3 534.1 Z"/><path d="M554.8 506.1 L548.8 503.9 L548.8 508.3 Z"/><path d="M527.5 480.3 L521.5 478.1 L521.5 482.5 Z"/><path d="M542.6 454.5 L536.6 452.3 L536.6 456.7 Z"/><path d="M522.5 428.7 L516.5 426.5 L516.5 430.9 Z"/><path d="M543.7 402.9 L537.7 400.7 L537.7 405.1 Z"/><path d="M529.5 377.1 L523.5 374.9 L523.5 379.3 Z"/><path d="M558.3 351.3 L552.3 349.1 L552.3 353.5 Z"/><path d="M556.7 303.9 L561.6 308.0 L557.8 310.2 Z"/><path d="M583.9 299.2 L588.8 303.3 L585.0 305.5 Z"/><path d="M592.5 262.7 L597.4 266.8 L593.6 269.0 Z"/><path d="M622.4 262.9 L627.3 267.0 L623.5 269.2 Z"/><path d="M634.7 232.6 L639.6 236.7 L635.8 238.9 Z"/><path d="M667.7 238.0 L672.6 242.1 L668.8 244.3 Z"/><path d="M682.9 212.8 L687.8 216.9 L684.0 219.1 Z"/><path d="M719.7 224.8 L724.6 228.9 L720.8 231.1 Z"/></g>
<path d="M726.2 232.9 L728.3 219.7 L732.1 207.4 L745.5 203.0 L758.9 207.4 L762.7 219.7 L764.8 232.9 Z" fill="#0878FF"/>
<path d="M733.7 191.3 L757.3 191.3 L751.7 223.1 L739.3 223.1 Z" fill="#0028F0"/>
<path d="M909.1 316.3 L921.7 311.5 L934.2 308.6 L944.7 318.0 L947.6 331.8 L938.8 341.2 L928.4 349.6 Z" fill="#0878FF"/>
<path d="M948.9 301.9 L960.7 322.4 L930.4 333.4 L924.2 322.7 Z" fill="#0028F0"/>
<path d="M928.4 516.4 L938.8 524.8 L947.6 534.2 L944.7 548.0 L934.2 557.4 L921.7 554.5 L909.1 549.7 Z" fill="#0878FF"/>
<path d="M960.7 543.6 L948.9 564.1 L924.2 543.3 L930.4 532.6 Z" fill="#0028F0"/>
<path d="M764.8 633.1 L762.7 646.3 L758.9 658.6 L745.5 663.0 L732.1 658.6 L728.3 646.3 L726.2 633.1 Z" fill="#0878FF"/>
<path d="M757.3 674.7 L733.7 674.7 L739.3 642.9 L751.7 642.9 Z" fill="#0028F0"/>
<path d="M581.9 549.7 L569.3 554.5 L556.8 557.4 L546.3 548.0 L543.4 534.2 L552.2 524.8 L562.6 516.4 Z" fill="#0878FF"/>
<path d="M542.1 564.1 L530.3 543.6 L560.6 532.6 L566.8 543.3 Z" fill="#0028F0"/>
<path d="M562.6 349.6 L552.2 341.2 L543.4 331.8 L546.3 318.0 L556.8 308.6 L569.3 311.5 L581.9 316.3 Z" fill="#0878FF"/>
<path d="M530.3 322.4 L542.1 301.9 L566.8 322.7 L560.6 333.4 Z" fill="#0028F0"/>
<g fill="none" stroke="#000" stroke-width="1" clip-path="url(#outer)" shape-rendering="crispEdges"><path d="M787.9 198.8 L788.8 193.9 L786.7 193.3 L784.6 193.0 L782.4 192.6 L780.2 192.3 L778.1 192.0 L775.9 191.7 L773.8 191.5 L771.6 191.2 L769.4 191.0 L767.3 190.8 L765.1 190.6 L762.9 190.4 L760.7 190.3 L758.6 190.2 L756.4 190.1 L754.2 190.0 L752.0 189.9 L749.9 189.9 L747.7 189.8 L745.5 189.8"/><path d="M796.7 200.6 L797.8 195.7 L795.7 194.8 L793.6 194.0 L791.5 193.2 L789.4 192.5 L787.3 191.9 L785.1 191.5 L782.9 191.2 L780.7 190.9 L778.5 190.5 L776.4 190.3 L774.2 190.0 L772.0 189.7 L769.8 189.5 L767.6 189.3 L765.4 189.1 L763.2 188.9 L761.0 188.8 L758.8 188.7 L756.5 188.6 L754.3 188.5 L752.1 188.4 L749.9 188.3 L747.7 188.3 L745.5 188.3"/><path d="M805.3 202.6 L806.5 197.8 L804.6 196.8 L802.6 195.9 L800.6 195.1 L798.6 194.2 L796.6 193.4 L794.5 192.7 L792.5 191.9 L790.4 191.3 L788.4 190.6 L786.2 190.2 L784.1 189.9 L782.0 189.5 L779.9 189.2 L777.7 188.9 L775.6 188.7 L773.4 188.4 L771.3 188.2 L769.2 188.0 L767.0 187.8 L764.9 187.6 L762.7 187.4 L760.6 187.3 L758.4 187.2 L756.3 187.1 L754.1 187.0 L752.0 186.9 L749.8 186.9 L747.7 186.8 L745.5 186.8"/><path d="M813.7 205.0 L815.1 200.2 L813.2 199.1 L811.3 198.0 L809.3 197.0 L807.3 196.1 L805.3 195.2 L803.3 194.3 L801.3 193.5 L799.3 192.7 L797.2 191.9 L795.1 191.2 L793.1 190.5 L791.0 189.8 L788.9 189.2 L786.7 188.8 L784.6 188.5 L782.4 188.1 L780.3 187.8 L778.1 187.5 L775.9 187.2 L773.8 187.0 L771.6 186.7 L769.4 186.5 L767.3 186.3 L765.1 186.1 L762.9 186.0 L760.8 185.8 L758.6 185.7 L756.4 185.6 L754.2 185.5 L752.0 185.4 L749.9 185.4 L747.7 185.4 L745.5 185.3"/><path d="M821.9 207.6 L823.5 202.9 L821.7 201.6 L819.8 200.4 L817.9 199.3 L816.0 198.2 L814.0 197.2 L812.0 196.2 L810.0 195.3 L808.0 194.4 L806.0 193.5 L803.9 192.7 L801.9 191.9 L799.8 191.1 L797.7 190.4 L795.6 189.7 L793.5 189.0 L791.4 188.4 L789.3 187.8 L787.1 187.4 L784.9 187.0 L782.8 186.7 L780.6 186.4 L778.4 186.1 L776.2 185.8 L774.0 185.5 L771.9 185.3 L769.7 185.1 L767.5 184.9 L765.3 184.7 L763.1 184.5 L760.9 184.4 L758.7 184.2 L756.5 184.1 L754.3 184.0 L752.1 184.0 L749.9 183.9 L747.7 183.9 L745.5 183.9"/><path d="M830.0 210.5 L831.8 205.8 L830.0 204.4 L828.2 203.0 L826.4 201.7 L824.5 200.5 L822.6 199.4 L820.7 198.3 L818.7 197.2 L816.7 196.2 L814.7 195.2 L812.7 194.3 L810.7 193.4 L808.6 192.6 L806.6 191.8 L804.5 191.0 L802.4 190.2 L800.3 189.5 L798.2 188.8 L796.1 188.2 L793.9 187.6 L791.8 187.0 L789.6 186.4 L787.4 186.0 L785.3 185.6 L783.1 185.3 L780.9 185.0 L778.7 184.6 L776.5 184.4 L774.3 184.1 L772.1 183.9 L769.9 183.6 L767.7 183.4 L765.4 183.2 L763.2 183.1 L761.0 182.9 L758.8 182.8 L756.6 182.7 L754.4 182.6 L752.2 182.5 L749.9 182.5 L747.7 182.5 L745.5 182.4"/><path d="M837.9 213.7 L839.9 209.1 L838.2 207.4 L836.5 205.8 L834.8 204.4 L833.0 203.0 L831.1 201.7 L829.3 200.4 L827.4 199.3 L825.4 198.1 L823.4 197.1 L821.5 196.1 L819.5 195.1 L817.4 194.2 L815.4 193.3 L813.3 192.4 L811.3 191.6 L809.2 190.8 L807.1 190.0 L805.0 189.3 L802.8 188.6 L800.7 187.9 L798.6 187.3 L796.4 186.7 L794.3 186.1 L792.1 185.5 L789.9 185.0 L787.7 184.6 L785.5 184.2 L783.3 183.9 L781.1 183.5 L778.9 183.2 L776.7 182.9 L774.5 182.7 L772.3 182.4 L770.0 182.2 L767.8 182.0 L765.6 181.8 L763.4 181.6 L761.1 181.5 L758.9 181.4 L756.7 181.2 L754.4 181.2 L752.2 181.1 L750.0 181.0 L747.7 181.0 L745.5 181.0"/><path d="M845.7 217.1 L847.8 212.6 L846.4 210.5 L844.8 208.7 L843.2 207.0 L841.5 205.4 L839.7 204.0 L837.9 202.6 L836.0 201.3 L834.1 200.1 L832.2 198.9 L830.3 197.8 L828.3 196.8 L826.3 195.8 L824.3 194.8 L822.2 193.8 L820.2 193.0 L818.1 192.1 L816.0 191.3 L813.9 190.5 L811.8 189.7 L809.7 189.0 L807.6 188.3 L805.4 187.6 L803.3 186.9 L801.1 186.3 L799.0 185.7 L796.8 185.1 L794.6 184.6 L792.4 184.1 L790.2 183.6 L788.0 183.2 L785.8 182.8 L783.6 182.4 L781.3 182.1 L779.1 181.8 L776.9 181.5 L774.7 181.3 L772.4 181.0 L770.2 180.8 L768.0 180.6 L765.7 180.4 L763.5 180.2 L761.2 180.1 L759.0 179.9 L756.7 179.8 L754.5 179.7 L752.2 179.7 L750.0 179.6 L747.7 179.6 L745.5 179.6"/><path d="M853.3 220.8 L855.6 216.4 L854.6 213.6 L853.3 211.3 L851.8 209.3 L850.2 207.5 L848.5 205.9 L846.8 204.4 L844.9 203.0 L843.1 201.7 L841.2 200.5 L839.2 199.4 L837.3 198.2 L835.3 197.2 L833.3 196.2 L831.2 195.2 L829.2 194.3 L827.1 193.3 L825.1 192.5 L823.0 191.6 L820.9 190.8 L818.7 190.0 L816.6 189.3 L814.5 188.6 L812.3 187.8 L810.2 187.2 L808.0 186.5 L805.9 185.9 L803.7 185.3 L801.5 184.7 L799.3 184.2 L797.1 183.6 L794.9 183.1 L792.7 182.6 L790.5 182.2 L788.3 181.8 L786.0 181.4 L783.8 181.0 L781.6 180.7 L779.3 180.4 L777.1 180.1 L774.8 179.8 L772.6 179.6 L770.3 179.4 L768.1 179.1 L765.8 179.0 L763.6 178.8 L761.3 178.6 L759.1 178.5 L756.8 178.4 L754.5 178.3 L752.3 178.2 L750.0 178.2 L747.8 178.1 L745.5 178.1"/><path d="M860.8 224.8 L863.2 220.4 L863.6 215.3 L862.7 212.2 L861.4 209.9 L859.9 208.1 L858.1 206.5 L856.4 205.0 L854.5 203.7 L852.6 202.5 L850.6 201.3 L848.7 200.2 L846.7 199.1 L844.6 198.1 L842.6 197.1 L840.6 196.1 L838.5 195.2 L836.4 194.3 L834.3 193.4 L832.2 192.6 L830.1 191.7 L828.0 190.9 L825.8 190.2 L823.7 189.4 L821.5 188.7 L819.4 188.0 L817.2 187.3 L815.0 186.6 L812.9 186.0 L810.7 185.4 L808.5 184.8 L806.3 184.2 L804.1 183.6 L801.9 183.1 L799.7 182.6 L797.4 182.1 L795.2 181.6 L793.0 181.2 L790.7 180.7 L788.5 180.3 L786.3 180.0 L784.0 179.6 L781.8 179.3 L779.5 179.0 L777.3 178.7 L775.0 178.4 L772.7 178.2 L770.5 177.9 L768.2 177.7 L765.9 177.5 L763.7 177.4 L761.4 177.2 L759.1 177.1 L756.9 177.0 L754.6 176.9 L752.3 176.8 L750.0 176.8 L747.8 176.7 L745.5 176.7"/><path d="M868.1 229.0 L870.7 224.7 L875.0 221.9 L878.1 221.1 L880.7 221.1 L883.1 221.5 L885.4 222.2 L887.5 223.0 L889.6 224.0 L891.6 225.0 L893.6 226.1 L895.6 227.2 L897.5 228.4 L899.4 229.7 L901.3 230.9 L903.1 232.2 L905.0 233.6 L906.8 234.9 L908.6 236.3 L910.4 237.7 L912.1 239.1 L913.9 240.6 L915.6 242.0 L917.4 243.5 L919.1 245.0 L920.8 246.5 L922.4 248.0 L924.1 249.6 L925.7 251.2 L927.4 252.7 L929.0 254.3 L930.6 256.0 L932.2 257.6 L933.7 259.2 L935.3 260.9 L936.8 262.6 L938.3 264.3 L939.8 266.0 L941.3 267.7 L942.8 269.4 L944.2 271.2 L945.7 273.0 L947.1 274.7 L948.5 276.5 L949.9 278.3 L951.2 280.2 L952.6 282.0 L953.9 283.8 L955.2 285.7 L956.5 287.6 L957.8 289.4 L959.1 291.3 L960.3 293.2 L961.5 295.1 L962.8 297.1 L964.0 299.0 L965.1 300.9 L966.3 302.9 L967.5 304.9"/><path d="M875.3 233.5 L878.0 229.3 L881.0 228.9 L883.6 228.8 L886.1 229.1 L888.4 229.6 L890.6 230.2 L892.8 231.0 L894.9 231.9 L897.0 232.9 L899.0 233.9 L901.0 235.0 L902.9 236.1 L904.8 237.3 L906.7 238.6 L908.6 239.8 L910.4 241.1 L912.2 242.5 L914.0 243.8 L915.8 245.2 L917.6 246.6 L919.3 248.1 L921.0 249.5 L922.7 251.0 L924.4 252.5 L926.0 254.1 L927.7 255.6 L929.3 257.2 L930.9 258.8 L932.5 260.4 L934.1 262.0 L935.7 263.6 L937.2 265.3 L938.7 266.9 L940.2 268.6 L941.7 270.3 L943.1 272.1 L944.6 273.8 L946.0 275.6 L947.4 277.4 L948.7 279.2 L950.1 281.0 L951.4 282.8 L952.7 284.7 L954.1 286.5 L955.3 288.4 L956.6 290.2 L957.9 292.1 L959.1 294.0 L960.3 295.9 L961.6 297.8 L962.7 299.7 L963.9 301.7 L965.1 303.6 L966.2 305.6"/><path d="M882.3 238.3 L885.2 234.2 L887.7 234.4 L890.1 234.8 L892.4 235.4 L894.6 236.1 L896.7 236.9 L898.8 237.8 L900.9 238.7 L902.9 239.8 L904.9 240.9 L906.8 242.0 L908.7 243.2 L910.6 244.4 L912.4 245.7 L914.2 247.0 L916.0 248.3 L917.8 249.7 L919.6 251.1 L921.3 252.5 L923.0 253.9 L924.7 255.4 L926.4 256.9 L928.1 258.4 L929.7 259.9 L931.3 261.5 L932.9 263.1 L934.5 264.7 L936.1 266.3 L937.6 267.9 L939.1 269.6 L940.6 271.3 L942.0 273.0 L943.5 274.8 L944.8 276.5 L946.2 278.3 L947.6 280.1 L948.9 281.9 L950.3 283.7 L951.6 285.5 L952.9 287.3 L954.2 289.2 L955.4 291.0 L956.7 292.9 L957.9 294.8 L959.1 296.7 L960.3 298.6 L961.5 300.5 L962.7 302.4 L963.8 304.3 L965.0 306.3"/><path d="M889.2 243.3 L892.2 239.3 L894.5 239.9 L896.7 240.6 L898.9 241.4 L901.0 242.2 L903.0 243.2 L905.0 244.2 L907.0 245.2 L908.9 246.4 L910.8 247.5 L912.7 248.7 L914.6 250.0 L916.4 251.3 L918.2 252.6 L920.0 254.0 L921.7 255.3 L923.4 256.7 L925.1 258.2 L926.8 259.6 L928.5 261.1 L930.1 262.6 L931.8 264.2 L933.4 265.7 L934.9 267.3 L936.5 268.9 L938.1 270.5 L939.5 272.2 L940.9 273.9 L942.3 275.7 L943.7 277.4 L945.1 279.2 L946.5 281.0 L947.8 282.7 L949.1 284.5 L950.4 286.4 L951.7 288.2 L953.0 290.0 L954.3 291.9 L955.5 293.7 L956.7 295.6 L957.9 297.5 L959.1 299.3 L960.3 301.2 L961.5 303.2 L962.6 305.1 L963.7 307.0"/><path d="M895.9 248.6 L899.1 244.7 L901.2 245.5 L903.3 246.4 L905.3 247.3 L907.3 248.3 L909.3 249.4 L911.2 250.5 L913.1 251.7 L915.0 252.9 L916.8 254.2 L918.6 255.4 L920.4 256.8 L922.2 258.1 L923.9 259.5 L925.6 260.9 L927.3 262.4 L929.0 263.8 L930.6 265.3 L932.2 266.8 L933.8 268.4 L935.4 269.9 L937.0 271.5 L938.5 273.2 L939.9 274.9 L941.3 276.6 L942.6 278.3 L944.0 280.1 L945.3 281.9 L946.7 283.6 L948.0 285.4 L949.3 287.2 L950.6 289.0 L951.8 290.8 L953.1 292.7 L954.3 294.5 L955.5 296.4 L956.7 298.2 L957.9 300.1 L959.1 302.0 L960.2 303.9 L961.4 305.8 L962.5 307.7"/><path d="M902.5 254.1 L905.8 250.4 L907.8 251.3 L909.8 252.4 L911.7 253.5 L913.6 254.6 L915.5 255.8 L917.3 257.0 L919.1 258.2 L920.9 259.5 L922.7 260.9 L924.4 262.2 L926.1 263.6 L927.8 265.0 L929.5 266.5 L931.1 267.9 L932.8 269.4 L934.4 271.0 L935.9 272.5 L937.4 274.2 L938.8 275.9 L940.2 277.6 L941.5 279.3 L942.9 281.0 L944.2 282.8 L945.5 284.5 L946.8 286.3 L948.1 288.1 L949.4 289.9 L950.7 291.7 L951.9 293.5 L953.1 295.4 L954.3 297.2 L955.5 299.0 L956.7 300.9 L957.9 302.8 L959.0 304.7 L960.1 306.5 L961.2 308.4"/><path d="M908.9 259.9 L912.3 256.3 L914.2 257.4 L916.1 258.6 L917.9 259.8 L919.7 261.0 L921.5 262.3 L923.3 263.6 L925.0 264.9 L926.7 266.3 L928.4 267.7 L930.1 269.1 L931.7 270.6 L933.3 272.0 L934.9 273.5 L936.4 275.2 L937.7 276.9 L939.1 278.6 L940.5 280.3 L941.8 282.0 L943.1 283.7 L944.4 285.5 L945.7 287.3 L947.0 289.0 L948.3 290.8 L949.5 292.6 L950.7 294.4 L951.9 296.2 L953.1 298.0 L954.3 299.9 L955.5 301.7 L956.6 303.6 L957.8 305.4 L958.9 307.3 L960.0 309.2"/><path d="M915.1 266.1 L918.7 262.6 L920.5 263.8 L922.3 265.0 L924.0 266.3 L925.7 267.6 L927.4 269.0 L929.1 270.4 L930.8 271.8 L932.4 273.2 L934.0 274.7 L935.4 276.3 L936.7 278.0 L938.1 279.7 L939.4 281.4 L940.8 283.1 L942.1 284.8 L943.3 286.5 L944.6 288.2 L945.9 290.0 L947.1 291.7 L948.4 293.5 L949.6 295.3 L950.8 297.1 L951.9 298.9 L953.1 300.7 L954.3 302.5 L955.4 304.4 L956.5 306.2 L957.6 308.0 L958.7 309.9"/><path d="M921.2 272.5 L924.9 269.1 L926.7 270.4 L928.4 271.8 L930.1 273.3 L931.8 274.7 L933.4 276.3 L934.8 278.0 L936.2 279.7 L937.6 281.4 L938.9 283.2 L940.3 284.9 L941.6 286.7 L942.9 288.5 L944.2 290.2 L945.5 292.0 L946.8 293.9 L948.0 295.7 L949.3 297.5 L950.5 299.4 L951.7 301.2 L952.9 303.1 L954.0 305.0 L955.2 306.8 L956.3 308.7 L957.4 310.7"/><path d="M927.1 279.2 L930.9 275.9 L932.5 277.5 L933.8 279.2 L935.2 280.9 L936.6 282.6 L937.9 284.3 L939.2 286.0 L940.5 287.7 L941.8 289.5 L943.1 291.3 L944.4 293.0 L945.6 294.8 L946.9 296.6 L948.1 298.4 L949.3 300.3 L950.4 302.1 L951.6 303.9 L952.8 305.8 L953.9 307.7 L955.0 309.5 L956.1 311.4"/><path d="M969.5 352.7 L974.2 351.0 L973.7 348.9 L972.9 346.8 L972.1 344.8 L971.3 342.7 L970.5 340.7 L969.7 338.7 L968.8 336.7 L967.9 334.7 L967.1 332.7 L966.1 330.7 L965.2 328.8 L964.3 326.8 L963.3 324.8 L962.3 322.9 L961.3 321.0 L960.3 319.0 L959.3 317.1 L958.3 315.2 L957.2 313.3 L956.1 311.4"/><path d="M972.4 361.1 L977.1 359.6 L976.9 357.4 L976.5 355.2 L976.1 353.0 L975.7 350.8 L975.2 348.6 L974.4 346.6 L973.6 344.5 L972.8 342.4 L972.0 340.4 L971.1 338.4 L970.3 336.3 L969.4 334.3 L968.5 332.3 L967.6 330.3 L966.6 328.3 L965.7 326.3 L964.7 324.3 L963.7 322.3 L962.7 320.3 L961.7 318.4 L960.6 316.4 L959.6 314.5 L958.5 312.6 L957.4 310.7"/><path d="M974.9 369.6 L979.7 368.2 L979.6 366.1 L979.4 363.9 L979.1 361.7 L978.8 359.6 L978.5 357.4 L978.2 355.3 L977.8 353.2 L977.3 351.0 L976.9 348.9 L976.1 346.9 L975.4 344.9 L974.6 342.9 L973.8 340.9 L973.0 338.9 L972.1 336.9 L971.3 334.9 L970.4 332.9 L969.5 331.0 L968.6 329.0 L967.7 327.1 L966.8 325.1 L965.8 323.2 L964.9 321.3 L963.9 319.4 L962.9 317.4 L961.9 315.5 L960.8 313.7 L959.8 311.8 L958.7 309.9"/><path d="M977.1 378.0 L981.9 376.9 L981.9 374.7 L981.9 372.5 L981.7 370.3 L981.6 368.1 L981.4 365.9 L981.1 363.7 L980.8 361.6 L980.5 359.4 L980.1 357.2 L979.7 355.1 L979.3 352.9 L978.8 350.8 L978.3 348.7 L977.6 346.6 L976.8 344.6 L976.0 342.5 L975.2 340.5 L974.4 338.5 L973.6 336.5 L972.7 334.5 L971.8 332.5 L970.9 330.5 L970.0 328.5 L969.1 326.5 L968.2 324.6 L967.2 322.6 L966.2 320.7 L965.2 318.7 L964.2 316.8 L963.2 314.9 L962.1 313.0 L961.1 311.1 L960.0 309.2"/><path d="M978.9 386.5 L983.8 385.5 L984.0 383.3 L984.1 381.1 L984.1 378.8 L984.1 376.6 L984.0 374.4 L983.8 372.2 L983.7 370.0 L983.4 367.8 L983.2 365.6 L982.9 363.4 L982.5 361.3 L982.1 359.1 L981.7 356.9 L981.3 354.8 L980.8 352.6 L980.3 350.5 L979.7 348.3 L979.0 346.2 L978.2 344.2 L977.4 342.1 L976.6 340.1 L975.8 338.0 L975.0 336.0 L974.1 334.0 L973.2 332.0 L972.3 330.0 L971.4 328.0 L970.4 326.0 L969.5 324.0 L968.5 322.0 L967.5 320.1 L966.5 318.1 L965.5 316.1 L964.5 314.2 L963.4 312.3 L962.3 310.4 L961.2 308.4"/><path d="M980.4 394.9 L985.4 394.1 L985.7 391.9 L986.0 389.7 L986.2 387.4 L986.3 385.2 L986.4 382.9 L986.4 380.7 L986.3 378.5 L986.2 376.3 L986.0 374.1 L985.8 371.9 L985.6 369.7 L985.3 367.5 L984.9 365.3 L984.6 363.1 L984.2 360.9 L983.7 358.7 L983.3 356.5 L982.8 354.4 L982.3 352.2 L981.7 350.1 L981.1 347.9 L980.4 345.8 L979.6 343.7 L978.8 341.7 L978.0 339.6 L977.2 337.6 L976.3 335.5 L975.4 333.5 L974.6 331.4 L973.6 329.4 L972.7 327.4 L971.8 325.4 L970.8 323.4 L969.8 321.4 L968.8 319.4 L967.8 317.4 L966.8 315.5 L965.7 313.5 L964.7 311.6 L963.6 309.6 L962.5 307.7"/><path d="M981.7 403.4 L986.6 402.8 L987.3 400.5 L987.8 398.3 L988.2 396.0 L988.4 393.8 L988.7 391.5 L988.8 389.3 L988.8 387.0 L988.8 384.8 L988.8 382.5 L988.7 380.3 L988.5 378.1 L988.3 375.9 L988.1 373.7 L987.8 371.4 L987.5 369.2 L987.1 367.0 L986.7 364.8 L986.3 362.6 L985.8 360.5 L985.4 358.3 L984.8 356.1 L984.3 353.9 L983.7 351.8 L983.1 349.6 L982.5 347.5 L981.8 345.4 L981.0 343.3 L980.2 341.2 L979.4 339.1 L978.5 337.0 L977.7 335.0 L976.8 332.9 L975.9 330.9 L975.0 328.8 L974.0 326.8 L973.1 324.8 L972.1 322.8 L971.1 320.8 L970.1 318.8 L969.1 316.8 L968.1 314.8 L967.0 312.8 L965.9 310.9 L964.8 308.9 L963.7 307.0"/><path d="M982.6 411.9 L987.5 411.4 L988.6 409.1 L989.4 406.9 L990.1 404.6 L990.6 402.3 L991.0 400.1 L991.2 397.8 L991.4 395.6 L991.5 393.3 L991.6 391.1 L991.6 388.8 L991.5 386.6 L991.4 384.3 L991.2 382.1 L991.0 379.9 L990.7 377.6 L990.4 375.4 L990.1 373.2 L989.7 371.0 L989.3 368.8 L988.9 366.6 L988.5 364.4 L988.0 362.2 L987.5 360.0 L986.9 357.8 L986.4 355.7 L985.8 353.5 L985.2 351.3 L984.5 349.2 L983.9 347.0 L983.1 344.9 L982.3 342.8 L981.5 340.7 L980.7 338.6 L979.8 336.5 L979.0 334.4 L978.1 332.4 L977.2 330.3 L976.3 328.3 L975.3 326.2 L974.4 324.2 L973.4 322.2 L972.4 320.1 L971.4 318.1 L970.4 316.1 L969.3 314.1 L968.3 312.2 L967.2 310.2 L966.1 308.2 L965.0 306.3"/><path d="M983.2 420.3 L988.2 420.0 L990.0 417.8 L991.4 415.5 L992.4 413.2 L993.1 410.9 L993.7 408.7 L994.1 406.4 L994.4 404.1 L994.6 401.9 L994.7 399.6 L994.7 397.4 L994.7 395.1 L994.6 392.8 L994.5 390.6 L994.3 388.4 L994.1 386.1 L993.9 383.9 L993.6 381.6 L993.3 379.4 L992.9 377.2 L992.5 375.0 L992.1 372.7 L991.7 370.5 L991.2 368.3 L990.7 366.1 L990.2 363.9 L989.7 361.7 L989.1 359.5 L988.5 357.4 L987.9 355.2 L987.3 353.0 L986.6 350.8 L985.9 348.7 L985.2 346.5 L984.5 344.4 L983.7 342.3 L982.9 340.2 L982.0 338.1 L981.2 336.0 L980.3 333.9 L979.4 331.8 L978.5 329.7 L977.6 327.7 L976.6 325.6 L975.7 323.6 L974.7 321.5 L973.7 319.5 L972.7 317.5 L971.7 315.5 L970.6 313.5 L969.5 311.5 L968.4 309.5 L967.3 307.5 L966.2 305.6"/><path d="M983.5 428.8 L988.5 428.7 L993.1 426.4 L995.3 424.1 L996.6 421.8 L997.5 419.6 L998.0 417.3 L998.4 415.0 L998.6 412.7 L998.7 410.5 L998.7 408.2 L998.7 405.9 L998.6 403.7 L998.5 401.4 L998.4 399.1 L998.2 396.9 L998.0 394.6 L997.7 392.4 L997.4 390.1 L997.1 387.9 L996.7 385.6 L996.4 383.4 L996.0 381.1 L995.6 378.9 L995.1 376.7 L994.6 374.5 L994.1 372.3 L993.6 370.0 L993.1 367.8 L992.5 365.6 L992.0 363.4 L991.4 361.2 L990.7 359.0 L990.1 356.9 L989.4 354.7 L988.8 352.5 L988.1 350.4 L987.3 348.2 L986.6 346.1 L985.8 343.9 L985.0 341.8 L984.2 339.7 L983.4 337.6 L982.5 335.4 L981.6 333.3 L980.7 331.3 L979.8 329.2 L978.9 327.1 L977.9 325.0 L977.0 323.0 L976.0 320.9 L975.0 318.9 L974.0 316.9 L972.9 314.8 L971.9 312.8 L970.8 310.8 L969.7 308.8 L968.6 306.8 L967.5 304.9"/><path d="M983.5 437.2 L988.5 437.3 L993.1 439.6 L995.3 441.9 L996.6 444.2 L997.5 446.4 L998.0 448.7 L998.4 451.0 L998.6 453.3 L998.7 455.5 L998.7 457.8 L998.7 460.1 L998.6 462.3 L998.5 464.6 L998.4 466.9 L998.2 469.1 L998.0 471.4 L997.7 473.6 L997.4 475.9 L997.1 478.1 L996.7 480.4 L996.4 482.6 L996.0 484.9 L995.6 487.1 L995.1 489.3 L994.6 491.5 L994.1 493.7 L993.6 496.0 L993.1 498.2 L992.5 500.4 L992.0 502.6 L991.4 504.8 L990.7 507.0 L990.1 509.1 L989.4 511.3 L988.8 513.5 L988.1 515.6 L987.3 517.8 L986.6 519.9 L985.8 522.1 L985.0 524.2 L984.2 526.3 L983.4 528.4 L982.5 530.6 L981.6 532.7 L980.7 534.7 L979.8 536.8 L978.9 538.9 L977.9 541.0 L977.0 543.0 L976.0 545.1 L975.0 547.1 L974.0 549.1 L972.9 551.2 L971.9 553.2 L970.8 555.2 L969.7 557.2 L968.6 559.2 L967.5 561.1"/><path d="M983.2 445.7 L988.2 446.0 L990.0 448.2 L991.4 450.5 L992.4 452.8 L993.1 455.1 L993.7 457.3 L994.1 459.6 L994.4 461.9 L994.6 464.1 L994.7 466.4 L994.7 468.6 L994.7 470.9 L994.6 473.2 L994.5 475.4 L994.3 477.6 L994.1 479.9 L993.9 482.1 L993.6 484.4 L993.3 486.6 L992.9 488.8 L992.5 491.0 L992.1 493.3 L991.7 495.5 L991.2 497.7 L990.7 499.9 L990.2 502.1 L989.7 504.3 L989.1 506.5 L988.5 508.6 L987.9 510.8 L987.3 513.0 L986.6 515.2 L985.9 517.3 L985.2 519.5 L984.5 521.6 L983.7 523.7 L982.9 525.8 L982.0 527.9 L981.2 530.0 L980.3 532.1 L979.4 534.2 L978.5 536.3 L977.6 538.3 L976.6 540.4 L975.7 542.4 L974.7 544.5 L973.7 546.5 L972.7 548.5 L971.7 550.5 L970.6 552.5 L969.5 554.5 L968.4 556.5 L967.3 558.5 L966.2 560.4"/><path d="M982.6 454.1 L987.5 454.6 L988.6 456.9 L989.4 459.1 L990.1 461.4 L990.6 463.7 L991.0 465.9 L991.2 468.2 L991.4 470.4 L991.5 472.7 L991.6 474.9 L991.6 477.2 L991.5 479.4 L991.4 481.7 L991.2 483.9 L991.0 486.1 L990.7 488.4 L990.4 490.6 L990.1 492.8 L989.7 495.0 L989.3 497.2 L988.9 499.4 L988.5 501.6 L988.0 503.8 L987.5 506.0 L986.9 508.2 L986.4 510.3 L985.8 512.5 L985.2 514.7 L984.5 516.8 L983.9 519.0 L983.1 521.1 L982.3 523.2 L981.5 525.3 L980.7 527.4 L979.8 529.5 L979.0 531.6 L978.1 533.6 L977.2 535.7 L976.3 537.7 L975.3 539.8 L974.4 541.8 L973.4 543.8 L972.4 545.9 L971.4 547.9 L970.4 549.9 L969.3 551.9 L968.3 553.8 L967.2 555.8 L966.1 557.8 L965.0 559.7"/><path d="M981.7 462.6 L986.6 463.2 L987.3 465.5 L987.8 467.7 L988.2 470.0 L988.4 472.2 L988.7 474.5 L988.8 476.7 L988.8 479.0 L988.8 481.2 L988.8 483.5 L988.7 485.7 L988.5 487.9 L988.3 490.1 L988.1 492.3 L987.8 494.6 L987.5 496.8 L987.1 499.0 L986.7 501.2 L986.3 503.4 L985.8 505.5 L985.4 507.7 L984.8 509.9 L984.3 512.1 L983.7 514.2 L983.1 516.4 L982.5 518.5 L981.8 520.6 L981.0 522.7 L980.2 524.8 L979.4 526.9 L978.5 529.0 L977.7 531.0 L976.8 533.1 L975.9 535.1 L975.0 537.2 L974.0 539.2 L973.1 541.2 L972.1 543.2 L971.1 545.2 L970.1 547.2 L969.1 549.2 L968.1 551.2 L967.0 553.2 L965.9 555.1 L964.8 557.1 L963.7 559.0"/><path d="M980.4 471.1 L985.4 471.9 L985.7 474.1 L986.0 476.3 L986.2 478.6 L986.3 480.8 L986.4 483.1 L986.4 485.3 L986.3 487.5 L986.2 489.7 L986.0 491.9 L985.8 494.1 L985.6 496.3 L985.3 498.5 L984.9 500.7 L984.6 502.9 L984.2 505.1 L983.7 507.3 L983.3 509.5 L982.8 511.6 L982.3 513.8 L981.7 515.9 L981.1 518.1 L980.4 520.2 L979.6 522.3 L978.8 524.3 L978.0 526.4 L977.2 528.4 L976.3 530.5 L975.4 532.5 L974.6 534.6 L973.6 536.6 L972.7 538.6 L971.8 540.6 L970.8 542.6 L969.8 544.6 L968.8 546.6 L967.8 548.6 L966.8 550.5 L965.7 552.5 L964.7 554.4 L963.6 556.4 L962.5 558.3"/><path d="M978.9 479.5 L983.8 480.5 L984.0 482.7 L984.1 484.9 L984.1 487.2 L984.1 489.4 L984.0 491.6 L983.8 493.8 L983.7 496.0 L983.4 498.2 L983.2 500.4 L982.9 502.6 L982.5 504.7 L982.1 506.9 L981.7 509.1 L981.3 511.2 L980.8 513.4 L980.3 515.5 L979.7 517.7 L979.0 519.8 L978.2 521.8 L977.4 523.9 L976.6 525.9 L975.8 528.0 L975.0 530.0 L974.1 532.0 L973.2 534.0 L972.3 536.0 L971.4 538.0 L970.4 540.0 L969.5 542.0 L968.5 544.0 L967.5 545.9 L966.5 547.9 L965.5 549.9 L964.5 551.8 L963.4 553.7 L962.3 555.6 L961.2 557.6"/><path d="M977.1 488.0 L981.9 489.1 L981.9 491.3 L981.9 493.5 L981.7 495.7 L981.6 497.9 L981.4 500.1 L981.1 502.3 L980.8 504.4 L980.5 506.6 L980.1 508.8 L979.7 510.9 L979.3 513.1 L978.8 515.2 L978.3 517.3 L977.6 519.4 L976.8 521.4 L976.0 523.5 L975.2 525.5 L974.4 527.5 L973.6 529.5 L972.7 531.5 L971.8 533.5 L970.9 535.5 L970.0 537.5 L969.1 539.5 L968.2 541.4 L967.2 543.4 L966.2 545.3 L965.2 547.3 L964.2 549.2 L963.2 551.1 L962.1 553.0 L961.1 554.9 L960.0 556.8"/><path d="M974.9 496.4 L979.7 497.8 L979.6 499.9 L979.4 502.1 L979.1 504.3 L978.8 506.4 L978.5 508.6 L978.2 510.7 L977.8 512.8 L977.3 515.0 L976.9 517.1 L976.1 519.1 L975.4 521.1 L974.6 523.1 L973.8 525.1 L973.0 527.1 L972.1 529.1 L971.3 531.1 L970.4 533.1 L969.5 535.0 L968.6 537.0 L967.7 538.9 L966.8 540.9 L965.8 542.8 L964.9 544.7 L963.9 546.6 L962.9 548.6 L961.9 550.5 L960.8 552.3 L959.8 554.2 L958.7 556.1"/><path d="M972.4 504.9 L977.1 506.4 L976.9 508.6 L976.5 510.8 L976.1 513.0 L975.7 515.2 L975.2 517.4 L974.4 519.4 L973.6 521.5 L972.8 523.6 L972.0 525.6 L971.1 527.6 L970.3 529.7 L969.4 531.7 L968.5 533.7 L967.6 535.7 L966.6 537.7 L965.7 539.7 L964.7 541.7 L963.7 543.7 L962.7 545.7 L961.7 547.6 L960.6 549.6 L959.6 551.5 L958.5 553.4 L957.4 555.3"/><path d="M969.5 513.3 L974.2 515.0 L973.7 517.1 L972.9 519.2 L972.1 521.2 L971.3 523.3 L970.5 525.3 L969.7 527.3 L968.8 529.3 L967.9 531.3 L967.1 533.3 L966.1 535.3 L965.2 537.2 L964.3 539.2 L963.3 541.2 L962.3 543.1 L961.3 545.0 L960.3 547.0 L959.3 548.9 L958.3 550.8 L957.2 552.7 L956.1 554.6"/><path d="M927.1 586.8 L930.9 590.1 L932.5 588.5 L933.8 586.8 L935.2 585.1 L936.6 583.4 L937.9 581.7 L939.2 580.0 L940.5 578.3 L941.8 576.5 L943.1 574.7 L944.4 573.0 L945.6 571.2 L946.9 569.4 L948.1 567.6 L949.3 565.7 L950.4 563.9 L951.6 562.1 L952.8 560.2 L953.9 558.3 L955.0 556.5 L956.1 554.6"/><path d="M921.2 593.5 L924.9 596.9 L926.7 595.6 L928.4 594.2 L930.1 592.7 L931.8 591.3 L933.4 589.7 L934.8 588.0 L936.2 586.3 L937.6 584.6 L938.9 582.8 L940.3 581.1 L941.6 579.3 L942.9 577.5 L944.2 575.8 L945.5 574.0 L946.8 572.1 L948.0 570.3 L949.3 568.5 L950.5 566.6 L951.7 564.8 L952.9 562.9 L954.0 561.0 L955.2 559.2 L956.3 557.3 L957.4 555.3"/><path d="M915.1 599.9 L918.7 603.4 L920.5 602.2 L922.3 601.0 L924.0 599.7 L925.7 598.4 L927.4 597.0 L929.1 595.6 L930.8 594.2 L932.4 592.8 L934.0 591.3 L935.4 589.7 L936.7 588.0 L938.1 586.3 L939.4 584.6 L940.8 582.9 L942.1 581.2 L943.3 579.5 L944.6 577.8 L945.9 576.0 L947.1 574.3 L948.4 572.5 L949.6 570.7 L950.8 568.9 L951.9 567.1 L953.1 565.3 L954.3 563.5 L955.4 561.6 L956.5 559.8 L957.6 558.0 L958.7 556.1"/><path d="M908.9 606.1 L912.3 609.7 L914.2 608.6 L916.1 607.4 L917.9 606.2 L919.7 605.0 L921.5 603.7 L923.3 602.4 L925.0 601.1 L926.7 599.7 L928.4 598.3 L930.1 596.9 L931.7 595.4 L933.3 594.0 L934.9 592.5 L936.4 590.8 L937.7 589.1 L939.1 587.4 L940.5 585.7 L941.8 584.0 L943.1 582.3 L944.4 580.5 L945.7 578.7 L947.0 577.0 L948.3 575.2 L949.5 573.4 L950.7 571.6 L951.9 569.8 L953.1 568.0 L954.3 566.1 L955.5 564.3 L956.6 562.4 L957.8 560.6 L958.9 558.7 L960.0 556.8"/><path d="M902.5 611.9 L905.8 615.6 L907.8 614.7 L909.8 613.6 L911.7 612.5 L913.6 611.4 L915.5 610.2 L917.3 609.0 L919.1 607.8 L920.9 606.5 L922.7 605.1 L924.4 603.8 L926.1 602.4 L927.8 601.0 L929.5 599.5 L931.1 598.1 L932.8 596.6 L934.4 595.0 L935.9 593.5 L937.4 591.8 L938.8 590.1 L940.2 588.4 L941.5 586.7 L942.9 585.0 L944.2 583.2 L945.5 581.5 L946.8 579.7 L948.1 577.9 L949.4 576.1 L950.7 574.3 L951.9 572.5 L953.1 570.6 L954.3 568.8 L955.5 567.0 L956.7 565.1 L957.9 563.2 L959.0 561.3 L960.1 559.5 L961.2 557.6"/><path d="M895.9 617.4 L899.1 621.3 L901.2 620.5 L903.3 619.6 L905.3 618.7 L907.3 617.7 L909.3 616.6 L911.2 615.5 L913.1 614.3 L915.0 613.1 L916.8 611.8 L918.6 610.6 L920.4 609.2 L922.2 607.9 L923.9 606.5 L925.6 605.1 L927.3 603.6 L929.0 602.2 L930.6 600.7 L932.2 599.2 L933.8 597.6 L935.4 596.1 L937.0 594.5 L938.5 592.8 L939.9 591.1 L941.3 589.4 L942.6 587.7 L944.0 585.9 L945.3 584.1 L946.7 582.4 L948.0 580.6 L949.3 578.8 L950.6 577.0 L951.8 575.2 L953.1 573.3 L954.3 571.5 L955.5 569.6 L956.7 567.8 L957.9 565.9 L959.1 564.0 L960.2 562.1 L961.4 560.2 L962.5 558.3"/><path d="M889.2 622.7 L892.2 626.7 L894.5 626.1 L896.7 625.4 L898.9 624.6 L901.0 623.8 L903.0 622.8 L905.0 621.8 L907.0 620.8 L908.9 619.6 L910.8 618.5 L912.7 617.3 L914.6 616.0 L916.4 614.7 L918.2 613.4 L920.0 612.0 L921.7 610.7 L923.4 609.3 L925.1 607.8 L926.8 606.4 L928.5 604.9 L930.1 603.4 L931.8 601.8 L933.4 600.3 L934.9 598.7 L936.5 597.1 L938.1 595.5 L939.5 593.8 L940.9 592.1 L942.3 590.3 L943.7 588.6 L945.1 586.8 L946.5 585.0 L947.8 583.3 L949.1 581.5 L950.4 579.6 L951.7 577.8 L953.0 576.0 L954.3 574.1 L955.5 572.3 L956.7 570.4 L957.9 568.5 L959.1 566.7 L960.3 564.8 L961.5 562.8 L962.6 560.9 L963.7 559.0"/><path d="M882.3 627.7 L885.2 631.8 L887.7 631.6 L890.1 631.2 L892.4 630.6 L894.6 629.9 L896.7 629.1 L898.8 628.2 L900.9 627.3 L902.9 626.2 L904.9 625.1 L906.8 624.0 L908.7 622.8 L910.6 621.6 L912.4 620.3 L914.2 619.0 L916.0 617.7 L917.8 616.3 L919.6 614.9 L921.3 613.5 L923.0 612.1 L924.7 610.6 L926.4 609.1 L928.1 607.6 L929.7 606.1 L931.3 604.5 L932.9 602.9 L934.5 601.3 L936.1 599.7 L937.6 598.1 L939.1 596.4 L940.6 594.7 L942.0 593.0 L943.5 591.2 L944.8 589.5 L946.2 587.7 L947.6 585.9 L948.9 584.1 L950.3 582.3 L951.6 580.5 L952.9 578.7 L954.2 576.8 L955.4 575.0 L956.7 573.1 L957.9 571.2 L959.1 569.3 L960.3 567.4 L961.5 565.5 L962.7 563.6 L963.8 561.7 L965.0 559.7"/><path d="M875.3 632.5 L878.0 636.7 L881.0 637.1 L883.6 637.2 L886.1 636.9 L888.4 636.4 L890.6 635.8 L892.8 635.0 L894.9 634.1 L897.0 633.1 L899.0 632.1 L901.0 631.0 L902.9 629.9 L904.8 628.7 L906.7 627.4 L908.6 626.2 L910.4 624.9 L912.2 623.5 L914.0 622.2 L915.8 620.8 L917.6 619.4 L919.3 617.9 L921.0 616.5 L922.7 615.0 L924.4 613.5 L926.0 611.9 L927.7 610.4 L929.3 608.8 L930.9 607.2 L932.5 605.6 L934.1 604.0 L935.7 602.4 L937.2 600.7 L938.7 599.1 L940.2 597.4 L941.7 595.7 L943.1 593.9 L944.6 592.2 L946.0 590.4 L947.4 588.6 L948.7 586.8 L950.1 585.0 L951.4 583.2 L952.7 581.3 L954.1 579.5 L955.3 577.6 L956.6 575.8 L957.9 573.9 L959.1 572.0 L960.3 570.1 L961.6 568.2 L962.7 566.3 L963.9 564.3 L965.1 562.4 L966.2 560.4"/><path d="M868.1 637.0 L870.7 641.3 L875.0 644.1 L878.1 644.9 L880.7 644.9 L883.1 644.5 L885.4 643.8 L887.5 643.0 L889.6 642.0 L891.6 641.0 L893.6 639.9 L895.6 638.8 L897.5 637.6 L899.4 636.3 L901.3 635.1 L903.1 633.8 L905.0 632.4 L906.8 631.1 L908.6 629.7 L910.4 628.3 L912.1 626.9 L913.9 625.4 L915.6 624.0 L917.4 622.5 L919.1 621.0 L920.8 619.5 L922.4 618.0 L924.1 616.4 L925.7 614.8 L927.4 613.3 L929.0 611.7 L930.6 610.0 L932.2 608.4 L933.7 606.8 L935.3 605.1 L936.8 603.4 L938.3 601.7 L939.8 600.0 L941.3 598.3 L942.8 596.6 L944.2 594.8 L945.7 593.0 L947.1 591.3 L948.5 589.5 L949.9 587.7 L951.2 585.8 L952.6 584.0 L953.9 582.2 L955.2 580.3 L956.5 578.4 L957.8 576.6 L959.1 574.7 L960.3 572.8 L961.5 570.9 L962.8 568.9 L964.0 567.0 L965.1 565.1 L966.3 563.1 L967.5 561.1"/><path d="M860.8 641.2 L863.2 645.6 L863.6 650.7 L862.7 653.8 L861.4 656.1 L859.9 657.9 L858.1 659.5 L856.4 661.0 L854.5 662.3 L852.6 663.5 L850.6 664.7 L848.7 665.8 L846.7 666.9 L844.6 667.9 L842.6 668.9 L840.6 669.9 L838.5 670.8 L836.4 671.7 L834.3 672.6 L832.2 673.4 L830.1 674.3 L828.0 675.1 L825.8 675.8 L823.7 676.6 L821.5 677.3 L819.4 678.0 L817.2 678.7 L815.0 679.4 L812.9 680.0 L810.7 680.6 L808.5 681.2 L806.3 681.8 L804.1 682.4 L801.9 682.9 L799.7 683.4 L797.4 683.9 L795.2 684.4 L793.0 684.8 L790.7 685.3 L788.5 685.7 L786.3 686.0 L784.0 686.4 L781.8 686.7 L779.5 687.0 L777.3 687.3 L775.0 687.6 L772.7 687.8 L770.5 688.1 L768.2 688.3 L765.9 688.5 L763.7 688.6 L761.4 688.8 L759.1 688.9 L756.9 689.0 L754.6 689.1 L752.3 689.2 L750.0 689.2 L747.8 689.3 L745.5 689.3"/><path d="M853.3 645.2 L855.6 649.6 L854.6 652.4 L853.3 654.7 L851.8 656.7 L850.2 658.5 L848.5 660.1 L846.8 661.6 L844.9 663.0 L843.1 664.3 L841.2 665.5 L839.2 666.6 L837.3 667.8 L835.3 668.8 L833.3 669.8 L831.2 670.8 L829.2 671.7 L827.1 672.7 L825.1 673.5 L823.0 674.4 L820.9 675.2 L818.7 676.0 L816.6 676.7 L814.5 677.4 L812.3 678.2 L810.2 678.8 L808.0 679.5 L805.9 680.1 L803.7 680.7 L801.5 681.3 L799.3 681.8 L797.1 682.4 L794.9 682.9 L792.7 683.4 L790.5 683.8 L788.3 684.2 L786.0 684.6 L783.8 685.0 L781.6 685.3 L779.3 685.6 L777.1 685.9 L774.8 686.2 L772.6 686.4 L770.3 686.6 L768.1 686.9 L765.8 687.0 L763.6 687.2 L761.3 687.4 L759.1 687.5 L756.8 687.6 L754.5 687.7 L752.3 687.8 L750.0 687.8 L747.8 687.9 L745.5 687.9"/><path d="M845.7 648.9 L847.8 653.4 L846.4 655.5 L844.8 657.3 L843.2 659.0 L841.5 660.6 L839.7 662.0 L837.9 663.4 L836.0 664.7 L834.1 665.9 L832.2 667.1 L830.3 668.2 L828.3 669.2 L826.3 670.2 L824.3 671.2 L822.2 672.2 L820.2 673.0 L818.1 673.9 L816.0 674.7 L813.9 675.5 L811.8 676.3 L809.7 677.0 L807.6 677.7 L805.4 678.4 L803.3 679.1 L801.1 679.7 L799.0 680.3 L796.8 680.9 L794.6 681.4 L792.4 681.9 L790.2 682.4 L788.0 682.8 L785.8 683.2 L783.6 683.6 L781.3 683.9 L779.1 684.2 L776.9 684.5 L774.7 684.7 L772.4 685.0 L770.2 685.2 L768.0 685.4 L765.7 685.6 L763.5 685.8 L761.2 685.9 L759.0 686.1 L756.7 686.2 L754.5 686.3 L752.2 686.3 L750.0 686.4 L747.7 686.4 L745.5 686.4"/><path d="M837.9 652.3 L839.9 656.9 L838.2 658.6 L836.5 660.2 L834.8 661.6 L833.0 663.0 L831.1 664.3 L829.3 665.6 L827.4 666.7 L825.4 667.9 L823.4 668.9 L821.5 669.9 L819.5 670.9 L817.4 671.8 L815.4 672.7 L813.3 673.6 L811.3 674.4 L809.2 675.2 L807.1 676.0 L805.0 676.7 L802.8 677.4 L800.7 678.1 L798.6 678.7 L796.4 679.3 L794.3 679.9 L792.1 680.5 L789.9 681.0 L787.7 681.4 L785.5 681.8 L783.3 682.1 L781.1 682.5 L778.9 682.8 L776.7 683.1 L774.5 683.3 L772.3 683.6 L770.0 683.8 L767.8 684.0 L765.6 684.2 L763.4 684.4 L761.1 684.5 L758.9 684.6 L756.7 684.8 L754.4 684.8 L752.2 684.9 L750.0 685.0 L747.7 685.0 L745.5 685.0"/><path d="M830.0 655.5 L831.8 660.2 L830.0 661.6 L828.2 663.0 L826.4 664.3 L824.5 665.5 L822.6 666.6 L820.7 667.7 L818.7 668.8 L816.7 669.8 L814.7 670.8 L812.7 671.7 L810.7 672.6 L808.6 673.4 L806.6 674.2 L804.5 675.0 L802.4 675.8 L800.3 676.5 L798.2 677.2 L796.1 677.8 L793.9 678.4 L791.8 679.0 L789.6 679.6 L787.4 680.0 L785.3 680.4 L783.1 680.7 L780.9 681.0 L778.7 681.4 L776.5 681.6 L774.3 681.9 L772.1 682.1 L769.9 682.4 L767.7 682.6 L765.4 682.8 L763.2 682.9 L761.0 683.1 L758.8 683.2 L756.6 683.3 L754.4 683.4 L752.2 683.5 L749.9 683.5 L747.7 683.5 L745.5 683.6"/><path d="M821.9 658.4 L823.5 663.1 L821.7 664.4 L819.8 665.6 L817.9 666.7 L816.0 667.8 L814.0 668.8 L812.0 669.8 L810.0 670.7 L808.0 671.6 L806.0 672.5 L803.9 673.3 L801.9 674.1 L799.8 674.9 L797.7 675.6 L795.6 676.3 L793.5 677.0 L791.4 677.6 L789.3 678.2 L787.1 678.6 L784.9 679.0 L782.8 679.3 L780.6 679.6 L778.4 679.9 L776.2 680.2 L774.0 680.5 L771.9 680.7 L769.7 680.9 L767.5 681.1 L765.3 681.3 L763.1 681.5 L760.9 681.6 L758.7 681.8 L756.5 681.9 L754.3 682.0 L752.1 682.0 L749.9 682.1 L747.7 682.1 L745.5 682.1"/><path d="M813.7 661.0 L815.1 665.8 L813.2 666.9 L811.3 668.0 L809.3 669.0 L807.3 669.9 L805.3 670.8 L803.3 671.7 L801.3 672.5 L799.3 673.3 L797.2 674.1 L795.1 674.8 L793.1 675.5 L791.0 676.2 L788.9 676.8 L786.7 677.2 L784.6 677.5 L782.4 677.9 L780.3 678.2 L778.1 678.5 L775.9 678.8 L773.8 679.0 L771.6 679.3 L769.4 679.5 L767.3 679.7 L765.1 679.9 L762.9 680.0 L760.8 680.2 L758.6 680.3 L756.4 680.4 L754.2 680.5 L752.0 680.6 L749.9 680.6 L747.7 680.6 L745.5 680.7"/><path d="M805.3 663.4 L806.5 668.2 L804.6 669.2 L802.6 670.1 L800.6 670.9 L798.6 671.8 L796.6 672.6 L794.5 673.3 L792.5 674.1 L790.4 674.7 L788.4 675.4 L786.2 675.8 L784.1 676.1 L782.0 676.5 L779.9 676.8 L777.7 677.1 L775.6 677.3 L773.4 677.6 L771.3 677.8 L769.2 678.0 L767.0 678.2 L764.9 678.4 L762.7 678.6 L760.6 678.7 L758.4 678.8 L756.3 678.9 L754.1 679.0 L752.0 679.1 L749.8 679.1 L747.7 679.2 L745.5 679.2"/><path d="M796.7 665.4 L797.8 670.3 L795.7 671.2 L793.6 672.0 L791.5 672.8 L789.4 673.5 L787.3 674.1 L785.1 674.5 L782.9 674.8 L780.7 675.1 L778.5 675.5 L776.4 675.7 L774.2 676.0 L772.0 676.3 L769.8 676.5 L767.6 676.7 L765.4 676.9 L763.2 677.1 L761.0 677.2 L758.8 677.3 L756.5 677.4 L754.3 677.5 L752.1 677.6 L749.9 677.7 L747.7 677.7 L745.5 677.7"/><path d="M787.9 667.2 L788.8 672.1 L786.7 672.7 L784.6 673.0 L782.4 673.4 L780.2 673.7 L778.1 674.0 L775.9 674.3 L773.8 674.5 L771.6 674.8 L769.4 675.0 L767.3 675.2 L765.1 675.4 L762.9 675.6 L760.7 675.7 L758.6 675.8 L756.4 675.9 L754.2 676.0 L752.0 676.1 L749.9 676.1 L747.7 676.2 L745.5 676.2"/><path d="M703.1 667.2 L702.2 672.1 L704.3 672.7 L706.4 673.0 L708.6 673.4 L710.8 673.7 L712.9 674.0 L715.1 674.3 L717.2 674.5 L719.4 674.8 L721.6 675.0 L723.7 675.2 L725.9 675.4 L728.1 675.6 L730.3 675.7 L732.4 675.8 L734.6 675.9 L736.8 676.0 L739.0 676.1 L741.1 676.1 L743.3 676.2 L745.5 676.2"/><path d="M694.3 665.4 L693.2 670.3 L695.3 671.2 L697.4 672.0 L699.5 672.8 L701.6 673.5 L703.7 674.1 L705.9 674.5 L708.1 674.8 L710.3 675.1 L712.5 675.5 L714.6 675.7 L716.8 676.0 L719.0 676.3 L721.2 676.5 L723.4 676.7 L725.6 676.9 L727.8 677.1 L730.0 677.2 L732.2 677.3 L734.5 677.4 L736.7 677.5 L738.9 677.6 L741.1 677.7 L743.3 677.7 L745.5 677.7"/><path d="M685.7 663.4 L684.5 668.2 L686.4 669.2 L688.4 670.1 L690.4 670.9 L692.4 671.8 L694.4 672.6 L696.5 673.3 L698.5 674.1 L700.6 674.7 L702.6 675.4 L704.8 675.8 L706.9 676.1 L709.0 676.5 L711.1 676.8 L713.3 677.1 L715.4 677.3 L717.6 677.6 L719.7 677.8 L721.8 678.0 L724.0 678.2 L726.1 678.4 L728.3 678.6 L730.4 678.7 L732.6 678.8 L734.7 678.9 L736.9 679.0 L739.0 679.1 L741.2 679.1 L743.3 679.2 L745.5 679.2"/><path d="M677.3 661.0 L675.9 665.8 L677.8 666.9 L679.7 668.0 L681.7 669.0 L683.7 669.9 L685.7 670.8 L687.7 671.7 L689.7 672.5 L691.7 673.3 L693.8 674.1 L695.9 674.8 L697.9 675.5 L700.0 676.2 L702.1 676.8 L704.3 677.2 L706.4 677.5 L708.6 677.9 L710.7 678.2 L712.9 678.5 L715.1 678.8 L717.2 679.0 L719.4 679.3 L721.6 679.5 L723.7 679.7 L725.9 679.9 L728.1 680.0 L730.2 680.2 L732.4 680.3 L734.6 680.4 L736.8 680.5 L739.0 680.6 L741.1 680.6 L743.3 680.6 L745.5 680.7"/><path d="M669.1 658.4 L667.5 663.1 L669.3 664.4 L671.2 665.6 L673.1 666.7 L675.0 667.8 L677.0 668.8 L679.0 669.8 L681.0 670.7 L683.0 671.6 L685.0 672.5 L687.1 673.3 L689.1 674.1 L691.2 674.9 L693.3 675.6 L695.4 676.3 L697.5 677.0 L699.6 677.6 L701.7 678.2 L703.9 678.6 L706.1 679.0 L708.2 679.3 L710.4 679.6 L712.6 679.9 L714.8 680.2 L717.0 680.5 L719.1 680.7 L721.3 680.9 L723.5 681.1 L725.7 681.3 L727.9 681.5 L730.1 681.6 L732.3 681.8 L734.5 681.9 L736.7 682.0 L738.9 682.0 L741.1 682.1 L743.3 682.1 L745.5 682.1"/><path d="M661.0 655.5 L659.2 660.2 L661.0 661.6 L662.8 663.0 L664.6 664.3 L666.5 665.5 L668.4 666.6 L670.3 667.7 L672.3 668.8 L674.3 669.8 L676.3 670.8 L678.3 671.7 L680.3 672.6 L682.4 673.4 L684.4 674.2 L686.5 675.0 L688.6 675.8 L690.7 676.5 L692.8 677.2 L694.9 677.8 L697.1 678.4 L699.2 679.0 L701.4 679.6 L703.6 680.0 L705.7 680.4 L707.9 680.7 L710.1 681.0 L712.3 681.4 L714.5 681.6 L716.7 681.9 L718.9 682.1 L721.1 682.4 L723.3 682.6 L725.6 682.8 L727.8 682.9 L730.0 683.1 L732.2 683.2 L734.4 683.3 L736.6 683.4 L738.8 683.5 L741.1 683.5 L743.3 683.5 L745.5 683.6"/><path d="M653.1 652.3 L651.1 656.9 L652.8 658.6 L654.5 660.2 L656.2 661.6 L658.0 663.0 L659.9 664.3 L661.7 665.6 L663.6 666.7 L665.6 667.9 L667.6 668.9 L669.5 669.9 L671.5 670.9 L673.6 671.8 L675.6 672.7 L677.7 673.6 L679.7 674.4 L681.8 675.2 L683.9 676.0 L686.0 676.7 L688.2 677.4 L690.3 678.1 L692.4 678.7 L694.6 679.3 L696.7 679.9 L698.9 680.5 L701.1 681.0 L703.3 681.4 L705.5 681.8 L707.7 682.1 L709.9 682.5 L712.1 682.8 L714.3 683.1 L716.5 683.3 L718.7 683.6 L721.0 683.8 L723.2 684.0 L725.4 684.2 L727.6 684.4 L729.9 684.5 L732.1 684.6 L734.3 684.8 L736.6 684.8 L738.8 684.9 L741.0 685.0 L743.3 685.0 L745.5 685.0"/><path d="M645.3 648.9 L643.2 653.4 L644.6 655.5 L646.2 657.3 L647.8 659.0 L649.5 660.6 L651.3 662.0 L653.1 663.4 L655.0 664.7 L656.9 665.9 L658.8 667.1 L660.7 668.2 L662.7 669.2 L664.7 670.2 L666.7 671.2 L668.8 672.2 L670.8 673.0 L672.9 673.9 L675.0 674.7 L677.1 675.5 L679.2 676.3 L681.3 677.0 L683.4 677.7 L685.6 678.4 L687.7 679.1 L689.9 679.7 L692.0 680.3 L694.2 680.9 L696.4 681.4 L698.6 681.9 L700.8 682.4 L703.0 682.8 L705.2 683.2 L707.4 683.6 L709.7 683.9 L711.9 684.2 L714.1 684.5 L716.3 684.7 L718.6 685.0 L720.8 685.2 L723.0 685.4 L725.3 685.6 L727.5 685.8 L729.8 685.9 L732.0 686.1 L734.3 686.2 L736.5 686.3 L738.8 686.3 L741.0 686.4 L743.3 686.4 L745.5 686.4"/><path d="M637.7 645.2 L635.4 649.6 L636.4 652.4 L637.7 654.7 L639.2 656.7 L640.8 658.5 L642.5 660.1 L644.2 661.6 L646.1 663.0 L647.9 664.3 L649.8 665.5 L651.8 666.6 L653.7 667.8 L655.7 668.8 L657.7 669.8 L659.8 670.8 L661.8 671.7 L663.9 672.7 L665.9 673.5 L668.0 674.4 L670.1 675.2 L672.3 676.0 L674.4 676.7 L676.5 677.4 L678.7 678.2 L680.8 678.8 L683.0 679.5 L685.1 680.1 L687.3 680.7 L689.5 681.3 L691.7 681.8 L693.9 682.4 L696.1 682.9 L698.3 683.4 L700.5 683.8 L702.7 684.2 L705.0 684.6 L707.2 685.0 L709.4 685.3 L711.7 685.6 L713.9 685.9 L716.2 686.2 L718.4 686.4 L720.7 686.6 L722.9 686.9 L725.2 687.0 L727.4 687.2 L729.7 687.4 L731.9 687.5 L734.2 687.6 L736.5 687.7 L738.7 687.8 L741.0 687.8 L743.2 687.9 L745.5 687.9"/><path d="M630.2 641.2 L627.8 645.6 L627.4 650.7 L628.3 653.8 L629.6 656.1 L631.1 657.9 L632.9 659.5 L634.6 661.0 L636.5 662.3 L638.4 663.5 L640.4 664.7 L642.3 665.8 L644.3 666.9 L646.4 667.9 L648.4 668.9 L650.4 669.9 L652.5 670.8 L654.6 671.7 L656.7 672.6 L658.8 673.4 L660.9 674.3 L663.0 675.1 L665.2 675.8 L667.3 676.6 L669.5 677.3 L671.6 678.0 L673.8 678.7 L676.0 679.4 L678.1 680.0 L680.3 680.6 L682.5 681.2 L684.7 681.8 L686.9 682.4 L689.1 682.9 L691.3 683.4 L693.6 683.9 L695.8 684.4 L698.0 684.8 L700.3 685.3 L702.5 685.7 L704.7 686.0 L707.0 686.4 L709.2 686.7 L711.5 687.0 L713.7 687.3 L716.0 687.6 L718.3 687.8 L720.5 688.1 L722.8 688.3 L725.1 688.5 L727.3 688.6 L729.6 688.8 L731.9 688.9 L734.1 689.0 L736.4 689.1 L738.7 689.2 L741.0 689.2 L743.2 689.3 L745.5 689.3"/><path d="M622.9 637.0 L620.3 641.3 L616.0 644.1 L612.9 644.9 L610.3 644.9 L607.9 644.5 L605.6 643.8 L603.5 643.0 L601.4 642.0 L599.4 641.0 L597.4 639.9 L595.4 638.8 L593.5 637.6 L591.6 636.3 L589.7 635.1 L587.9 633.8 L586.0 632.4 L584.2 631.1 L582.4 629.7 L580.6 628.3 L578.9 626.9 L577.1 625.4 L575.4 624.0 L573.6 622.5 L571.9 621.0 L570.2 619.5 L568.6 618.0 L566.9 616.4 L565.3 614.8 L563.6 613.3 L562.0 611.7 L560.4 610.0 L558.8 608.4 L557.3 606.8 L555.7 605.1 L554.2 603.4 L552.7 601.7 L551.2 600.0 L549.7 598.3 L548.2 596.6 L546.8 594.8 L545.3 593.0 L543.9 591.3 L542.5 589.5 L541.1 587.7 L539.8 585.8 L538.4 584.0 L537.1 582.2 L535.8 580.3 L534.5 578.4 L533.2 576.6 L531.9 574.7 L530.7 572.8 L529.5 570.9 L528.2 568.9 L527.0 567.0 L525.9 565.1 L524.7 563.1 L523.5 561.1"/><path d="M615.7 632.5 L613.0 636.7 L610.0 637.1 L607.4 637.2 L604.9 636.9 L602.6 636.4 L600.4 635.8 L598.2 635.0 L596.1 634.1 L594.0 633.1 L592.0 632.1 L590.0 631.0 L588.1 629.9 L586.2 628.7 L584.3 627.4 L582.4 626.2 L580.6 624.9 L578.8 623.5 L577.0 622.2 L575.2 620.8 L573.4 619.4 L571.7 617.9 L570.0 616.5 L568.3 615.0 L566.6 613.5 L565.0 611.9 L563.3 610.4 L561.7 608.8 L560.1 607.2 L558.5 605.6 L556.9 604.0 L555.3 602.4 L553.8 600.7 L552.3 599.1 L550.8 597.4 L549.3 595.7 L547.9 593.9 L546.4 592.2 L545.0 590.4 L543.6 588.6 L542.3 586.8 L540.9 585.0 L539.6 583.2 L538.3 581.3 L536.9 579.5 L535.7 577.6 L534.4 575.8 L533.1 573.9 L531.9 572.0 L530.7 570.1 L529.4 568.2 L528.3 566.3 L527.1 564.3 L525.9 562.4 L524.8 560.4"/><path d="M608.7 627.7 L605.8 631.8 L603.3 631.6 L600.9 631.2 L598.6 630.6 L596.4 629.9 L594.3 629.1 L592.2 628.2 L590.1 627.3 L588.1 626.2 L586.1 625.1 L584.2 624.0 L582.3 622.8 L580.4 621.6 L578.6 620.3 L576.8 619.0 L575.0 617.7 L573.2 616.3 L571.4 614.9 L569.7 613.5 L568.0 612.1 L566.3 610.6 L564.6 609.1 L562.9 607.6 L561.3 606.1 L559.7 604.5 L558.1 602.9 L556.5 601.3 L554.9 599.7 L553.4 598.1 L551.9 596.4 L550.4 594.7 L549.0 593.0 L547.5 591.2 L546.2 589.5 L544.8 587.7 L543.4 585.9 L542.1 584.1 L540.7 582.3 L539.4 580.5 L538.1 578.7 L536.8 576.8 L535.6 575.0 L534.3 573.1 L533.1 571.2 L531.9 569.3 L530.7 567.4 L529.5 565.5 L528.3 563.6 L527.2 561.7 L526.0 559.7"/><path d="M601.8 622.7 L598.8 626.7 L596.5 626.1 L594.3 625.4 L592.1 624.6 L590.0 623.8 L588.0 622.8 L586.0 621.8 L584.0 620.8 L582.1 619.6 L580.2 618.5 L578.3 617.3 L576.4 616.0 L574.6 614.7 L572.8 613.4 L571.0 612.0 L569.3 610.7 L567.6 609.3 L565.9 607.8 L564.2 606.4 L562.5 604.9 L560.9 603.4 L559.2 601.8 L557.6 600.3 L556.1 598.7 L554.5 597.1 L552.9 595.5 L551.5 593.8 L550.1 592.1 L548.7 590.3 L547.3 588.6 L545.9 586.8 L544.5 585.0 L543.2 583.3 L541.9 581.5 L540.6 579.6 L539.3 577.8 L538.0 576.0 L536.7 574.1 L535.5 572.3 L534.3 570.4 L533.1 568.5 L531.9 566.7 L530.7 564.8 L529.5 562.8 L528.4 560.9 L527.3 559.0"/><path d="M595.1 617.4 L591.9 621.3 L589.8 620.5 L587.7 619.6 L585.7 618.7 L583.7 617.7 L581.7 616.6 L579.8 615.5 L577.9 614.3 L576.0 613.1 L574.2 611.8 L572.4 610.6 L570.6 609.2 L568.8 607.9 L567.1 606.5 L565.4 605.1 L563.7 603.6 L562.0 602.2 L560.4 600.7 L558.8 599.2 L557.2 597.6 L555.6 596.1 L554.0 594.5 L552.5 592.8 L551.1 591.1 L549.7 589.4 L548.4 587.7 L547.0 585.9 L545.7 584.1 L544.3 582.4 L543.0 580.6 L541.7 578.8 L540.4 577.0 L539.2 575.2 L537.9 573.3 L536.7 571.5 L535.5 569.6 L534.3 567.8 L533.1 565.9 L531.9 564.0 L530.8 562.1 L529.6 560.2 L528.5 558.3"/><path d="M588.5 611.9 L585.2 615.6 L583.2 614.7 L581.2 613.6 L579.3 612.5 L577.4 611.4 L575.5 610.2 L573.7 609.0 L571.9 607.8 L570.1 606.5 L568.3 605.1 L566.6 603.8 L564.9 602.4 L563.2 601.0 L561.5 599.5 L559.9 598.1 L558.2 596.6 L556.6 595.0 L555.1 593.5 L553.6 591.8 L552.2 590.1 L550.8 588.4 L549.5 586.7 L548.1 585.0 L546.8 583.2 L545.5 581.5 L544.2 579.7 L542.9 577.9 L541.6 576.1 L540.3 574.3 L539.1 572.5 L537.9 570.6 L536.7 568.8 L535.5 567.0 L534.3 565.1 L533.1 563.2 L532.0 561.3 L530.9 559.5 L529.8 557.6"/><path d="M582.1 606.1 L578.7 609.7 L576.8 608.6 L574.9 607.4 L573.1 606.2 L571.3 605.0 L569.5 603.7 L567.7 602.4 L566.0 601.1 L564.3 599.7 L562.6 598.3 L560.9 596.9 L559.3 595.4 L557.7 594.0 L556.1 592.5 L554.6 590.8 L553.3 589.1 L551.9 587.4 L550.5 585.7 L549.2 584.0 L547.9 582.3 L546.6 580.5 L545.3 578.7 L544.0 577.0 L542.7 575.2 L541.5 573.4 L540.3 571.6 L539.1 569.8 L537.9 568.0 L536.7 566.1 L535.5 564.3 L534.4 562.4 L533.2 560.6 L532.1 558.7 L531.0 556.8"/><path d="M575.9 599.9 L572.3 603.4 L570.5 602.2 L568.7 601.0 L567.0 599.7 L565.3 598.4 L563.6 597.0 L561.9 595.6 L560.2 594.2 L558.6 592.8 L557.0 591.3 L555.6 589.7 L554.3 588.0 L552.9 586.3 L551.6 584.6 L550.2 582.9 L548.9 581.2 L547.7 579.5 L546.4 577.8 L545.1 576.0 L543.9 574.3 L542.6 572.5 L541.4 570.7 L540.2 568.9 L539.1 567.1 L537.9 565.3 L536.7 563.5 L535.6 561.6 L534.5 559.8 L533.4 558.0 L532.3 556.1"/><path d="M569.8 593.5 L566.1 596.9 L564.3 595.6 L562.6 594.2 L560.9 592.7 L559.2 591.3 L557.6 589.7 L556.2 588.0 L554.8 586.3 L553.4 584.6 L552.1 582.8 L550.7 581.1 L549.4 579.3 L548.1 577.5 L546.8 575.8 L545.5 574.0 L544.2 572.1 L543.0 570.3 L541.7 568.5 L540.5 566.6 L539.3 564.8 L538.1 562.9 L537.0 561.0 L535.8 559.2 L534.7 557.3 L533.6 555.3"/><path d="M563.9 586.8 L560.1 590.1 L558.5 588.5 L557.2 586.8 L555.8 585.1 L554.4 583.4 L553.1 581.7 L551.8 580.0 L550.5 578.3 L549.2 576.5 L547.9 574.7 L546.6 573.0 L545.4 571.2 L544.1 569.4 L542.9 567.6 L541.7 565.7 L540.6 563.9 L539.4 562.1 L538.2 560.2 L537.1 558.3 L536.0 556.5 L534.9 554.6"/><path d="M521.5 513.3 L516.8 515.0 L517.3 517.1 L518.1 519.2 L518.9 521.2 L519.7 523.3 L520.5 525.3 L521.3 527.3 L522.2 529.3 L523.1 531.3 L523.9 533.3 L524.9 535.3 L525.8 537.2 L526.7 539.2 L527.7 541.2 L528.7 543.1 L529.7 545.0 L530.7 547.0 L531.7 548.9 L532.7 550.8 L533.8 552.7 L534.9 554.6"/><path d="M518.6 504.9 L513.9 506.4 L514.1 508.6 L514.5 510.8 L514.9 513.0 L515.3 515.2 L515.8 517.4 L516.6 519.4 L517.4 521.5 L518.2 523.6 L519.0 525.6 L519.9 527.6 L520.7 529.7 L521.6 531.7 L522.5 533.7 L523.4 535.7 L524.4 537.7 L525.3 539.7 L526.3 541.7 L527.3 543.7 L528.3 545.7 L529.3 547.6 L530.4 549.6 L531.4 551.5 L532.5 553.4 L533.6 555.3"/><path d="M516.1 496.4 L511.3 497.8 L511.4 499.9 L511.6 502.1 L511.9 504.3 L512.2 506.4 L512.5 508.6 L512.8 510.7 L513.2 512.8 L513.7 515.0 L514.1 517.1 L514.9 519.1 L515.6 521.1 L516.4 523.1 L517.2 525.1 L518.0 527.1 L518.9 529.1 L519.7 531.1 L520.6 533.1 L521.5 535.0 L522.4 537.0 L523.3 538.9 L524.2 540.9 L525.2 542.8 L526.1 544.7 L527.1 546.6 L528.1 548.6 L529.1 550.5 L530.2 552.3 L531.2 554.2 L532.3 556.1"/><path d="M513.9 488.0 L509.1 489.1 L509.1 491.3 L509.1 493.5 L509.3 495.7 L509.4 497.9 L509.6 500.1 L509.9 502.3 L510.2 504.4 L510.5 506.6 L510.9 508.8 L511.3 510.9 L511.7 513.1 L512.2 515.2 L512.7 517.3 L513.4 519.4 L514.2 521.4 L515.0 523.5 L515.8 525.5 L516.6 527.5 L517.4 529.5 L518.3 531.5 L519.2 533.5 L520.1 535.5 L521.0 537.5 L521.9 539.5 L522.8 541.4 L523.8 543.4 L524.8 545.3 L525.8 547.3 L526.8 549.2 L527.8 551.1 L528.9 553.0 L529.9 554.9 L531.0 556.8"/><path d="M512.1 479.5 L507.2 480.5 L507.0 482.7 L506.9 484.9 L506.9 487.2 L506.9 489.4 L507.0 491.6 L507.2 493.8 L507.3 496.0 L507.6 498.2 L507.8 500.4 L508.1 502.6 L508.5 504.7 L508.9 506.9 L509.3 509.1 L509.7 511.2 L510.2 513.4 L510.7 515.5 L511.3 517.7 L512.0 519.8 L512.8 521.8 L513.6 523.9 L514.4 525.9 L515.2 528.0 L516.0 530.0 L516.9 532.0 L517.8 534.0 L518.7 536.0 L519.6 538.0 L520.6 540.0 L521.5 542.0 L522.5 544.0 L523.5 545.9 L524.5 547.9 L525.5 549.9 L526.5 551.8 L527.6 553.7 L528.7 555.6 L529.8 557.6"/><path d="M510.6 471.1 L505.6 471.9 L505.3 474.1 L505.0 476.3 L504.8 478.6 L504.7 480.8 L504.6 483.1 L504.6 485.3 L504.7 487.5 L504.8 489.7 L505.0 491.9 L505.2 494.1 L505.4 496.3 L505.7 498.5 L506.1 500.7 L506.4 502.9 L506.8 505.1 L507.3 507.3 L507.7 509.5 L508.2 511.6 L508.7 513.8 L509.3 515.9 L509.9 518.1 L510.6 520.2 L511.4 522.3 L512.2 524.3 L513.0 526.4 L513.8 528.4 L514.7 530.5 L515.6 532.5 L516.4 534.6 L517.4 536.6 L518.3 538.6 L519.2 540.6 L520.2 542.6 L521.2 544.6 L522.2 546.6 L523.2 548.6 L524.2 550.5 L525.3 552.5 L526.3 554.4 L527.4 556.4 L528.5 558.3"/><path d="M509.3 462.6 L504.4 463.2 L503.7 465.5 L503.2 467.7 L502.8 470.0 L502.6 472.2 L502.3 474.5 L502.2 476.7 L502.2 479.0 L502.2 481.2 L502.2 483.5 L502.3 485.7 L502.5 487.9 L502.7 490.1 L502.9 492.3 L503.2 494.6 L503.5 496.8 L503.9 499.0 L504.3 501.2 L504.7 503.4 L505.2 505.5 L505.6 507.7 L506.2 509.9 L506.7 512.1 L507.3 514.2 L507.9 516.4 L508.5 518.5 L509.2 520.6 L510.0 522.7 L510.8 524.8 L511.6 526.9 L512.5 529.0 L513.3 531.0 L514.2 533.1 L515.1 535.1 L516.0 537.2 L517.0 539.2 L517.9 541.2 L518.9 543.2 L519.9 545.2 L520.9 547.2 L521.9 549.2 L522.9 551.2 L524.0 553.2 L525.1 555.1 L526.2 557.1 L527.3 559.0"/><path d="M508.4 454.1 L503.5 454.6 L502.4 456.9 L501.6 459.1 L500.9 461.4 L500.4 463.7 L500.0 465.9 L499.8 468.2 L499.6 470.4 L499.5 472.7 L499.4 474.9 L499.4 477.2 L499.5 479.4 L499.6 481.7 L499.8 483.9 L500.0 486.1 L500.3 488.4 L500.6 490.6 L500.9 492.8 L501.3 495.0 L501.7 497.2 L502.1 499.4 L502.5 501.6 L503.0 503.8 L503.5 506.0 L504.1 508.2 L504.6 510.3 L505.2 512.5 L505.8 514.7 L506.5 516.8 L507.1 519.0 L507.9 521.1 L508.7 523.2 L509.5 525.3 L510.3 527.4 L511.2 529.5 L512.0 531.6 L512.9 533.6 L513.8 535.7 L514.7 537.7 L515.7 539.8 L516.6 541.8 L517.6 543.8 L518.6 545.9 L519.6 547.9 L520.6 549.9 L521.7 551.9 L522.7 553.8 L523.8 555.8 L524.9 557.8 L526.0 559.7"/><path d="M507.8 445.7 L502.8 446.0 L501.0 448.2 L499.6 450.5 L498.6 452.8 L497.9 455.1 L497.3 457.3 L496.9 459.6 L496.6 461.9 L496.4 464.1 L496.3 466.4 L496.3 468.6 L496.3 470.9 L496.4 473.2 L496.5 475.4 L496.7 477.6 L496.9 479.9 L497.1 482.1 L497.4 484.4 L497.7 486.6 L498.1 488.8 L498.5 491.0 L498.9 493.3 L499.3 495.5 L499.8 497.7 L500.3 499.9 L500.8 502.1 L501.3 504.3 L501.9 506.5 L502.5 508.6 L503.1 510.8 L503.7 513.0 L504.4 515.2 L505.1 517.3 L505.8 519.5 L506.5 521.6 L507.3 523.7 L508.1 525.8 L509.0 527.9 L509.8 530.0 L510.7 532.1 L511.6 534.2 L512.5 536.3 L513.4 538.3 L514.4 540.4 L515.3 542.4 L516.3 544.5 L517.3 546.5 L518.3 548.5 L519.3 550.5 L520.4 552.5 L521.5 554.5 L522.6 556.5 L523.7 558.5 L524.8 560.4"/><path d="M507.5 437.2 L502.5 437.3 L497.9 439.6 L495.7 441.9 L494.4 444.2 L493.5 446.4 L493.0 448.7 L492.6 451.0 L492.4 453.3 L492.3 455.5 L492.3 457.8 L492.3 460.1 L492.4 462.3 L492.5 464.6 L492.6 466.9 L492.8 469.1 L493.0 471.4 L493.3 473.6 L493.6 475.9 L493.9 478.1 L494.3 480.4 L494.6 482.6 L495.0 484.9 L495.4 487.1 L495.9 489.3 L496.4 491.5 L496.9 493.7 L497.4 496.0 L497.9 498.2 L498.5 500.4 L499.0 502.6 L499.6 504.8 L500.3 507.0 L500.9 509.1 L501.6 511.3 L502.2 513.5 L502.9 515.6 L503.7 517.8 L504.4 519.9 L505.2 522.1 L506.0 524.2 L506.8 526.3 L507.6 528.4 L508.5 530.6 L509.4 532.7 L510.3 534.7 L511.2 536.8 L512.1 538.9 L513.1 541.0 L514.0 543.0 L515.0 545.1 L516.0 547.1 L517.0 549.1 L518.1 551.2 L519.1 553.2 L520.2 555.2 L521.3 557.2 L522.4 559.2 L523.5 561.1"/><path d="M507.5 428.8 L502.5 428.7 L497.9 426.4 L495.7 424.1 L494.4 421.8 L493.5 419.6 L493.0 417.3 L492.6 415.0 L492.4 412.7 L492.3 410.5 L492.3 408.2 L492.3 405.9 L492.4 403.7 L492.5 401.4 L492.6 399.1 L492.8 396.9 L493.0 394.6 L493.3 392.4 L493.6 390.1 L493.9 387.9 L494.3 385.6 L494.6 383.4 L495.0 381.1 L495.4 378.9 L495.9 376.7 L496.4 374.5 L496.9 372.3 L497.4 370.0 L497.9 367.8 L498.5 365.6 L499.0 363.4 L499.6 361.2 L500.3 359.0 L500.9 356.9 L501.6 354.7 L502.2 352.5 L502.9 350.4 L503.7 348.2 L504.4 346.1 L505.2 343.9 L506.0 341.8 L506.8 339.7 L507.6 337.6 L508.5 335.4 L509.4 333.3 L510.3 331.3 L511.2 329.2 L512.1 327.1 L513.1 325.0 L514.0 323.0 L515.0 320.9 L516.0 318.9 L517.0 316.9 L518.1 314.8 L519.1 312.8 L520.2 310.8 L521.3 308.8 L522.4 306.8 L523.5 304.9"/><path d="M507.8 420.3 L502.8 420.0 L501.0 417.8 L499.6 415.5 L498.6 413.2 L497.9 410.9 L497.3 408.7 L496.9 406.4 L496.6 404.1 L496.4 401.9 L496.3 399.6 L496.3 397.4 L496.3 395.1 L496.4 392.8 L496.5 390.6 L496.7 388.4 L496.9 386.1 L497.1 383.9 L497.4 381.6 L497.7 379.4 L498.1 377.2 L498.5 375.0 L498.9 372.7 L499.3 370.5 L499.8 368.3 L500.3 366.1 L500.8 363.9 L501.3 361.7 L501.9 359.5 L502.5 357.4 L503.1 355.2 L503.7 353.0 L504.4 350.8 L505.1 348.7 L505.8 346.5 L506.5 344.4 L507.3 342.3 L508.1 340.2 L509.0 338.1 L509.8 336.0 L510.7 333.9 L511.6 331.8 L512.5 329.7 L513.4 327.7 L514.4 325.6 L515.3 323.6 L516.3 321.5 L517.3 319.5 L518.3 317.5 L519.3 315.5 L520.4 313.5 L521.5 311.5 L522.6 309.5 L523.7 307.5 L524.8 305.6"/><path d="M508.4 411.9 L503.5 411.4 L502.4 409.1 L501.6 406.9 L500.9 404.6 L500.4 402.3 L500.0 400.1 L499.8 397.8 L499.6 395.6 L499.5 393.3 L499.4 391.1 L499.4 388.8 L499.5 386.6 L499.6 384.3 L499.8 382.1 L500.0 379.9 L500.3 377.6 L500.6 375.4 L500.9 373.2 L501.3 371.0 L501.7 368.8 L502.1 366.6 L502.5 364.4 L503.0 362.2 L503.5 360.0 L504.1 357.8 L504.6 355.7 L505.2 353.5 L505.8 351.3 L506.5 349.2 L507.1 347.0 L507.9 344.9 L508.7 342.8 L509.5 340.7 L510.3 338.6 L511.2 336.5 L512.0 334.4 L512.9 332.4 L513.8 330.3 L514.7 328.3 L515.7 326.2 L516.6 324.2 L517.6 322.2 L518.6 320.1 L519.6 318.1 L520.6 316.1 L521.7 314.1 L522.7 312.2 L523.8 310.2 L524.9 308.2 L526.0 306.3"/><path d="M509.3 403.4 L504.4 402.8 L503.7 400.5 L503.2 398.3 L502.8 396.0 L502.6 393.8 L502.3 391.5 L502.2 389.3 L502.2 387.0 L502.2 384.8 L502.2 382.5 L502.3 380.3 L502.5 378.1 L502.7 375.9 L502.9 373.7 L503.2 371.4 L503.5 369.2 L503.9 367.0 L504.3 364.8 L504.7 362.6 L505.2 360.5 L505.6 358.3 L506.2 356.1 L506.7 353.9 L507.3 351.8 L507.9 349.6 L508.5 347.5 L509.2 345.4 L510.0 343.3 L510.8 341.2 L511.6 339.1 L512.5 337.0 L513.3 335.0 L514.2 332.9 L515.1 330.9 L516.0 328.8 L517.0 326.8 L517.9 324.8 L518.9 322.8 L519.9 320.8 L520.9 318.8 L521.9 316.8 L522.9 314.8 L524.0 312.8 L525.1 310.9 L526.2 308.9 L527.3 307.0"/><path d="M510.6 394.9 L505.6 394.1 L505.3 391.9 L505.0 389.7 L504.8 387.4 L504.7 385.2 L504.6 382.9 L504.6 380.7 L504.7 378.5 L504.8 376.3 L505.0 374.1 L505.2 371.9 L505.4 369.7 L505.7 367.5 L506.1 365.3 L506.4 363.1 L506.8 360.9 L507.3 358.7 L507.7 356.5 L508.2 354.4 L508.7 352.2 L509.3 350.1 L509.9 347.9 L510.6 345.8 L511.4 343.7 L512.2 341.7 L513.0 339.6 L513.8 337.6 L514.7 335.5 L515.6 333.5 L516.4 331.4 L517.4 329.4 L518.3 327.4 L519.2 325.4 L520.2 323.4 L521.2 321.4 L522.2 319.4 L523.2 317.4 L524.2 315.5 L525.3 313.5 L526.3 311.6 L527.4 309.6 L528.5 307.7"/><path d="M512.1 386.5 L507.2 385.5 L507.0 383.3 L506.9 381.1 L506.9 378.8 L506.9 376.6 L507.0 374.4 L507.2 372.2 L507.3 370.0 L507.6 367.8 L507.8 365.6 L508.1 363.4 L508.5 361.3 L508.9 359.1 L509.3 356.9 L509.7 354.8 L510.2 352.6 L510.7 350.5 L511.3 348.3 L512.0 346.2 L512.8 344.2 L513.6 342.1 L514.4 340.1 L515.2 338.0 L516.0 336.0 L516.9 334.0 L517.8 332.0 L518.7 330.0 L519.6 328.0 L520.6 326.0 L521.5 324.0 L522.5 322.0 L523.5 320.1 L524.5 318.1 L525.5 316.1 L526.5 314.2 L527.6 312.3 L528.7 310.4 L529.8 308.4"/><path d="M513.9 378.0 L509.1 376.9 L509.1 374.7 L509.1 372.5 L509.3 370.3 L509.4 368.1 L509.6 365.9 L509.9 363.7 L510.2 361.6 L510.5 359.4 L510.9 357.2 L511.3 355.1 L511.7 352.9 L512.2 350.8 L512.7 348.7 L513.4 346.6 L514.2 344.6 L515.0 342.5 L515.8 340.5 L516.6 338.5 L517.4 336.5 L518.3 334.5 L519.2 332.5 L520.1 330.5 L521.0 328.5 L521.9 326.5 L522.8 324.6 L523.8 322.6 L524.8 320.7 L525.8 318.7 L526.8 316.8 L527.8 314.9 L528.9 313.0 L529.9 311.1 L531.0 309.2"/><path d="M516.1 369.6 L511.3 368.2 L511.4 366.1 L511.6 363.9 L511.9 361.7 L512.2 359.6 L512.5 357.4 L512.8 355.3 L513.2 353.2 L513.7 351.0 L514.1 348.9 L514.9 346.9 L515.6 344.9 L516.4 342.9 L517.2 340.9 L518.0 338.9 L518.9 336.9 L519.7 334.9 L520.6 332.9 L521.5 331.0 L522.4 329.0 L523.3 327.1 L524.2 325.1 L525.2 323.2 L526.1 321.3 L527.1 319.4 L528.1 317.4 L529.1 315.5 L530.2 313.7 L531.2 311.8 L532.3 309.9"/><path d="M518.6 361.1 L513.9 359.6 L514.1 357.4 L514.5 355.2 L514.9 353.0 L515.3 350.8 L515.8 348.6 L516.6 346.6 L517.4 344.5 L518.2 342.4 L519.0 340.4 L519.9 338.4 L520.7 336.3 L521.6 334.3 L522.5 332.3 L523.4 330.3 L524.4 328.3 L525.3 326.3 L526.3 324.3 L527.3 322.3 L528.3 320.3 L529.3 318.4 L530.4 316.4 L531.4 314.5 L532.5 312.6 L533.6 310.7"/><path d="M521.5 352.7 L516.8 351.0 L517.3 348.9 L518.1 346.8 L518.9 344.8 L519.7 342.7 L520.5 340.7 L521.3 338.7 L522.2 336.7 L523.1 334.7 L523.9 332.7 L524.9 330.7 L525.8 328.8 L526.7 326.8 L527.7 324.8 L528.7 322.9 L529.7 321.0 L530.7 319.0 L531.7 317.1 L532.7 315.2 L533.8 313.3 L534.9 311.4"/><path d="M563.9 279.2 L560.1 275.9 L558.5 277.5 L557.2 279.2 L555.8 280.9 L554.4 282.6 L553.1 284.3 L551.8 286.0 L550.5 287.7 L549.2 289.5 L547.9 291.3 L546.6 293.0 L545.4 294.8 L544.1 296.6 L542.9 298.4 L541.7 300.3 L540.6 302.1 L539.4 303.9 L538.2 305.8 L537.1 307.7 L536.0 309.5 L534.9 311.4"/><path d="M569.8 272.5 L566.1 269.1 L564.3 270.4 L562.6 271.8 L560.9 273.3 L559.2 274.7 L557.6 276.3 L556.2 278.0 L554.8 279.7 L553.4 281.4 L552.1 283.2 L550.7 284.9 L549.4 286.7 L548.1 288.5 L546.8 290.2 L545.5 292.0 L544.2 293.9 L543.0 295.7 L541.7 297.5 L540.5 299.4 L539.3 301.2 L538.1 303.1 L537.0 305.0 L535.8 306.8 L534.7 308.7 L533.6 310.7"/><path d="M575.9 266.1 L572.3 262.6 L570.5 263.8 L568.7 265.0 L567.0 266.3 L565.3 267.6 L563.6 269.0 L561.9 270.4 L560.2 271.8 L558.6 273.2 L557.0 274.7 L555.6 276.3 L554.3 278.0 L552.9 279.7 L551.6 281.4 L550.2 283.1 L548.9 284.8 L547.7 286.5 L546.4 288.2 L545.1 290.0 L543.9 291.7 L542.6 293.5 L541.4 295.3 L540.2 297.1 L539.1 298.9 L537.9 300.7 L536.7 302.5 L535.6 304.4 L534.5 306.2 L533.4 308.0 L532.3 309.9"/><path d="M582.1 259.9 L578.7 256.3 L576.8 257.4 L574.9 258.6 L573.1 259.8 L571.3 261.0 L569.5 262.3 L567.7 263.6 L566.0 264.9 L564.3 266.3 L562.6 267.7 L560.9 269.1 L559.3 270.6 L557.7 272.0 L556.1 273.5 L554.6 275.2 L553.3 276.9 L551.9 278.6 L550.5 280.3 L549.2 282.0 L547.9 283.7 L546.6 285.5 L545.3 287.3 L544.0 289.0 L542.7 290.8 L541.5 292.6 L540.3 294.4 L539.1 296.2 L537.9 298.0 L536.7 299.9 L535.5 301.7 L534.4 303.6 L533.2 305.4 L532.1 307.3 L531.0 309.2"/><path d="M588.5 254.1 L585.2 250.4 L583.2 251.3 L581.2 252.4 L579.3 253.5 L577.4 254.6 L575.5 255.8 L573.7 257.0 L571.9 258.2 L570.1 259.5 L568.3 260.9 L566.6 262.2 L564.9 263.6 L563.2 265.0 L561.5 266.5 L559.9 267.9 L558.2 269.4 L556.6 271.0 L555.1 272.5 L553.6 274.2 L552.2 275.9 L550.8 277.6 L549.5 279.3 L548.1 281.0 L546.8 282.8 L545.5 284.5 L544.2 286.3 L542.9 288.1 L541.6 289.9 L540.3 291.7 L539.1 293.5 L537.9 295.4 L536.7 297.2 L535.5 299.0 L534.3 300.9 L533.1 302.8 L532.0 304.7 L530.9 306.5 L529.8 308.4"/><path d="M595.1 248.6 L591.9 244.7 L589.8 245.5 L587.7 246.4 L585.7 247.3 L583.7 248.3 L581.7 249.4 L579.8 250.5 L577.9 251.7 L576.0 252.9 L574.2 254.2 L572.4 255.4 L570.6 256.8 L568.8 258.1 L567.1 259.5 L565.4 260.9 L563.7 262.4 L562.0 263.8 L560.4 265.3 L558.8 266.8 L557.2 268.4 L555.6 269.9 L554.0 271.5 L552.5 273.2 L551.1 274.9 L549.7 276.6 L548.4 278.3 L547.0 280.1 L545.7 281.9 L544.3 283.6 L543.0 285.4 L541.7 287.2 L540.4 289.0 L539.2 290.8 L537.9 292.7 L536.7 294.5 L535.5 296.4 L534.3 298.2 L533.1 300.1 L531.9 302.0 L530.8 303.9 L529.6 305.8 L528.5 307.7"/><path d="M601.8 243.3 L598.8 239.3 L596.5 239.9 L594.3 240.6 L592.1 241.4 L590.0 242.2 L588.0 243.2 L586.0 244.2 L584.0 245.2 L582.1 246.4 L580.2 247.5 L578.3 248.7 L576.4 250.0 L574.6 251.3 L572.8 252.6 L571.0 254.0 L569.3 255.3 L567.6 256.7 L565.9 258.2 L564.2 259.6 L562.5 261.1 L560.9 262.6 L559.2 264.2 L557.6 265.7 L556.1 267.3 L554.5 268.9 L552.9 270.5 L551.5 272.2 L550.1 273.9 L548.7 275.7 L547.3 277.4 L545.9 279.2 L544.5 281.0 L543.2 282.7 L541.9 284.5 L540.6 286.4 L539.3 288.2 L538.0 290.0 L536.7 291.9 L535.5 293.7 L534.3 295.6 L533.1 297.5 L531.9 299.3 L530.7 301.2 L529.5 303.2 L528.4 305.1 L527.3 307.0"/><path d="M608.7 238.3 L605.8 234.2 L603.3 234.4 L600.9 234.8 L598.6 235.4 L596.4 236.1 L594.3 236.9 L592.2 237.8 L590.1 238.7 L588.1 239.8 L586.1 240.9 L584.2 242.0 L582.3 243.2 L580.4 244.4 L578.6 245.7 L576.8 247.0 L575.0 248.3 L573.2 249.7 L571.4 251.1 L569.7 252.5 L568.0 253.9 L566.3 255.4 L564.6 256.9 L562.9 258.4 L561.3 259.9 L559.7 261.5 L558.1 263.1 L556.5 264.7 L554.9 266.3 L553.4 267.9 L551.9 269.6 L550.4 271.3 L549.0 273.0 L547.5 274.8 L546.2 276.5 L544.8 278.3 L543.4 280.1 L542.1 281.9 L540.7 283.7 L539.4 285.5 L538.1 287.3 L536.8 289.2 L535.6 291.0 L534.3 292.9 L533.1 294.8 L531.9 296.7 L530.7 298.6 L529.5 300.5 L528.3 302.4 L527.2 304.3 L526.0 306.3"/><path d="M615.7 233.5 L613.0 229.3 L610.0 228.9 L607.4 228.8 L604.9 229.1 L602.6 229.6 L600.4 230.2 L598.2 231.0 L596.1 231.9 L594.0 232.9 L592.0 233.9 L590.0 235.0 L588.1 236.1 L586.2 237.3 L584.3 238.6 L582.4 239.8 L580.6 241.1 L578.8 242.5 L577.0 243.8 L575.2 245.2 L573.4 246.6 L571.7 248.1 L570.0 249.5 L568.3 251.0 L566.6 252.5 L565.0 254.1 L563.3 255.6 L561.7 257.2 L560.1 258.8 L558.5 260.4 L556.9 262.0 L555.3 263.6 L553.8 265.3 L552.3 266.9 L550.8 268.6 L549.3 270.3 L547.9 272.1 L546.4 273.8 L545.0 275.6 L543.6 277.4 L542.3 279.2 L540.9 281.0 L539.6 282.8 L538.3 284.7 L536.9 286.5 L535.7 288.4 L534.4 290.2 L533.1 292.1 L531.9 294.0 L530.7 295.9 L529.4 297.8 L528.3 299.7 L527.1 301.7 L525.9 303.6 L524.8 305.6"/><path d="M622.9 229.0 L620.3 224.7 L616.0 221.9 L612.9 221.1 L610.3 221.1 L607.9 221.5 L605.6 222.2 L603.5 223.0 L601.4 224.0 L599.4 225.0 L597.4 226.1 L595.4 227.2 L593.5 228.4 L591.6 229.7 L589.7 230.9 L587.9 232.2 L586.0 233.6 L584.2 234.9 L582.4 236.3 L580.6 237.7 L578.9 239.1 L577.1 240.6 L575.4 242.0 L573.6 243.5 L571.9 245.0 L570.2 246.5 L568.6 248.0 L566.9 249.6 L565.3 251.2 L563.6 252.7 L562.0 254.3 L560.4 256.0 L558.8 257.6 L557.3 259.2 L555.7 260.9 L554.2 262.6 L552.7 264.3 L551.2 266.0 L549.7 267.7 L548.2 269.4 L546.8 271.2 L545.3 273.0 L543.9 274.7 L542.5 276.5 L541.1 278.3 L539.8 280.2 L538.4 282.0 L537.1 283.8 L535.8 285.7 L534.5 287.6 L533.2 289.4 L531.9 291.3 L530.7 293.2 L529.5 295.1 L528.2 297.1 L527.0 299.0 L525.9 300.9 L524.7 302.9 L523.5 304.9"/><path d="M630.2 224.8 L627.8 220.4 L627.4 215.3 L628.3 212.2 L629.6 209.9 L631.1 208.1 L632.9 206.5 L634.6 205.0 L636.5 203.7 L638.4 202.5 L640.4 201.3 L642.3 200.2 L644.3 199.1 L646.4 198.1 L648.4 197.1 L650.4 196.1 L652.5 195.2 L654.6 194.3 L656.7 193.4 L658.8 192.6 L660.9 191.7 L663.0 190.9 L665.2 190.2 L667.3 189.4 L669.5 188.7 L671.6 188.0 L673.8 187.3 L676.0 186.6 L678.1 186.0 L680.3 185.4 L682.5 184.8 L684.7 184.2 L686.9 183.6 L689.1 183.1 L691.3 182.6 L693.6 182.1 L695.8 181.6 L698.0 181.2 L700.3 180.7 L702.5 180.3 L704.7 180.0 L707.0 179.6 L709.2 179.3 L711.5 179.0 L713.7 178.7 L716.0 178.4 L718.3 178.2 L720.5 177.9 L722.8 177.7 L725.1 177.5 L727.3 177.4 L729.6 177.2 L731.9 177.1 L734.1 177.0 L736.4 176.9 L738.7 176.8 L741.0 176.8 L743.2 176.7 L745.5 176.7"/><path d="M637.7 220.8 L635.4 216.4 L636.4 213.6 L637.7 211.3 L639.2 209.3 L640.8 207.5 L642.5 205.9 L644.2 204.4 L646.1 203.0 L647.9 201.7 L649.8 200.5 L651.8 199.4 L653.7 198.2 L655.7 197.2 L657.7 196.2 L659.8 195.2 L661.8 194.3 L663.9 193.3 L665.9 192.5 L668.0 191.6 L670.1 190.8 L672.3 190.0 L674.4 189.3 L676.5 188.6 L678.7 187.8 L680.8 187.2 L683.0 186.5 L685.1 185.9 L687.3 185.3 L689.5 184.7 L691.7 184.2 L693.9 183.6 L696.1 183.1 L698.3 182.6 L700.5 182.2 L702.7 181.8 L705.0 181.4 L707.2 181.0 L709.4 180.7 L711.7 180.4 L713.9 180.1 L716.2 179.8 L718.4 179.6 L720.7 179.4 L722.9 179.1 L725.2 179.0 L727.4 178.8 L729.7 178.6 L731.9 178.5 L734.2 178.4 L736.5 178.3 L738.7 178.2 L741.0 178.2 L743.2 178.1 L745.5 178.1"/><path d="M645.3 217.1 L643.2 212.6 L644.6 210.5 L646.2 208.7 L647.8 207.0 L649.5 205.4 L651.3 204.0 L653.1 202.6 L655.0 201.3 L656.9 200.1 L658.8 198.9 L660.7 197.8 L662.7 196.8 L664.7 195.8 L666.7 194.8 L668.8 193.8 L670.8 193.0 L672.9 192.1 L675.0 191.3 L677.1 190.5 L679.2 189.7 L681.3 189.0 L683.4 188.3 L685.6 187.6 L687.7 186.9 L689.9 186.3 L692.0 185.7 L694.2 185.1 L696.4 184.6 L698.6 184.1 L700.8 183.6 L703.0 183.2 L705.2 182.8 L707.4 182.4 L709.7 182.1 L711.9 181.8 L714.1 181.5 L716.3 181.3 L718.6 181.0 L720.8 180.8 L723.0 180.6 L725.3 180.4 L727.5 180.2 L729.8 180.1 L732.0 179.9 L734.3 179.8 L736.5 179.7 L738.8 179.7 L741.0 179.6 L743.3 179.6 L745.5 179.6"/><path d="M653.1 213.7 L651.1 209.1 L652.8 207.4 L654.5 205.8 L656.2 204.4 L658.0 203.0 L659.9 201.7 L661.7 200.4 L663.6 199.3 L665.6 198.1 L667.6 197.1 L669.5 196.1 L671.5 195.1 L673.6 194.2 L675.6 193.3 L677.7 192.4 L679.7 191.6 L681.8 190.8 L683.9 190.0 L686.0 189.3 L688.2 188.6 L690.3 187.9 L692.4 187.3 L694.6 186.7 L696.7 186.1 L698.9 185.5 L701.1 185.0 L703.3 184.6 L705.5 184.2 L707.7 183.9 L709.9 183.5 L712.1 183.2 L714.3 182.9 L716.5 182.7 L718.7 182.4 L721.0 182.2 L723.2 182.0 L725.4 181.8 L727.6 181.6 L729.9 181.5 L732.1 181.4 L734.3 181.2 L736.6 181.2 L738.8 181.1 L741.0 181.0 L743.3 181.0 L745.5 181.0"/><path d="M661.0 210.5 L659.2 205.8 L661.0 204.4 L662.8 203.0 L664.6 201.7 L666.5 200.5 L668.4 199.4 L670.3 198.3 L672.3 197.2 L674.3 196.2 L676.3 195.2 L678.3 194.3 L680.3 193.4 L682.4 192.6 L684.4 191.8 L686.5 191.0 L688.6 190.2 L690.7 189.5 L692.8 188.8 L694.9 188.2 L697.1 187.6 L699.2 187.0 L701.4 186.4 L703.6 186.0 L705.7 185.6 L707.9 185.3 L710.1 185.0 L712.3 184.6 L714.5 184.4 L716.7 184.1 L718.9 183.9 L721.1 183.6 L723.3 183.4 L725.6 183.2 L727.8 183.1 L730.0 182.9 L732.2 182.8 L734.4 182.7 L736.6 182.6 L738.8 182.5 L741.1 182.5 L743.3 182.5 L745.5 182.4"/><path d="M669.1 207.6 L667.5 202.9 L669.3 201.6 L671.2 200.4 L673.1 199.3 L675.0 198.2 L677.0 197.2 L679.0 196.2 L681.0 195.3 L683.0 194.4 L685.0 193.5 L687.1 192.7 L689.1 191.9 L691.2 191.1 L693.3 190.4 L695.4 189.7 L697.5 189.0 L699.6 188.4 L701.7 187.8 L703.9 187.4 L706.1 187.0 L708.2 186.7 L710.4 186.4 L712.6 186.1 L714.8 185.8 L717.0 185.5 L719.1 185.3 L721.3 185.1 L723.5 184.9 L725.7 184.7 L727.9 184.5 L730.1 184.4 L732.3 184.2 L734.5 184.1 L736.7 184.0 L738.9 184.0 L741.1 183.9 L743.3 183.9 L745.5 183.9"/><path d="M677.3 205.0 L675.9 200.2 L677.8 199.1 L679.7 198.0 L681.7 197.0 L683.7 196.1 L685.7 195.2 L687.7 194.3 L689.7 193.5 L691.7 192.7 L693.8 191.9 L695.9 191.2 L697.9 190.5 L700.0 189.8 L702.1 189.2 L704.3 188.8 L706.4 188.5 L708.6 188.1 L710.7 187.8 L712.9 187.5 L715.1 187.2 L717.2 187.0 L719.4 186.7 L721.6 186.5 L723.7 186.3 L725.9 186.1 L728.1 186.0 L730.2 185.8 L732.4 185.7 L734.6 185.6 L736.8 185.5 L739.0 185.4 L741.1 185.4 L743.3 185.4 L745.5 185.3"/><path d="M685.7 202.6 L684.5 197.8 L686.4 196.8 L688.4 195.9 L690.4 195.1 L692.4 194.2 L694.4 193.4 L696.5 192.7 L698.5 191.9 L700.6 191.3 L702.6 190.6 L704.8 190.2 L706.9 189.9 L709.0 189.5 L711.1 189.2 L713.3 188.9 L715.4 188.7 L717.6 188.4 L719.7 188.2 L721.8 188.0 L724.0 187.8 L726.1 187.6 L728.3 187.4 L730.4 187.3 L732.6 187.2 L734.7 187.1 L736.9 187.0 L739.0 186.9 L741.2 186.9 L743.3 186.8 L745.5 186.8"/><path d="M694.3 200.6 L693.2 195.7 L695.3 194.8 L697.4 194.0 L699.5 193.2 L701.6 192.5 L703.7 191.9 L705.9 191.5 L708.1 191.2 L710.3 190.9 L712.5 190.5 L714.6 190.3 L716.8 190.0 L719.0 189.7 L721.2 189.5 L723.4 189.3 L725.6 189.1 L727.8 188.9 L730.0 188.8 L732.2 188.7 L734.5 188.6 L736.7 188.5 L738.9 188.4 L741.1 188.3 L743.3 188.3 L745.5 188.3"/><path d="M703.1 198.8 L702.2 193.9 L704.3 193.3 L706.4 193.0 L708.6 192.6 L710.8 192.3 L712.9 192.0 L715.1 191.7 L717.2 191.5 L719.4 191.2 L721.6 191.0 L723.7 190.8 L725.9 190.6 L728.1 190.4 L730.3 190.3 L732.4 190.2 L734.6 190.1 L736.8 190.0 L739.0 189.9 L741.1 189.9 L743.3 189.8 L745.5 189.8"/></g>
<circle cx="745.5" cy="433.0" r="242" fill="none" stroke="#0050F0" stroke-width="1"/>
<circle cx="745.5" cy="433.0" r="199.5" fill="none" stroke="#0050F0" stroke-width="1"/>
<circle cx="745.5" cy="433.0" r="258" fill="none" stroke="#0040F0" stroke-width="1"/>
<circle cx="745.5" cy="433.0" r="192" fill="#0028F0"/>
<path d="M751.9 297.0 L756.5 244.2 L767.5 245.2 L762.8 298.0 Z" fill="#000"/>
<path d="M756.1 249.2 L749.1 244.0 L749.9 239.0 L762.5 239.2 L774.8 241.2 L774.7 246.3 L767.0 250.2 Z" fill="#004800"/>
<path d="M754.0 295.2 L758.6 243.4" stroke="#00FFFF" stroke-width="1" shape-rendering="crispEdges"/>
<path d="M757.5 295.5 L762.1 243.7" stroke="#00FFFF" stroke-width="1" shape-rendering="crispEdges"/>
<path d="M761.0 295.8 L765.5 244.0" stroke="#00FFFF" stroke-width="1" shape-rendering="crispEdges"/>
<path d="M750.2 241.1 Q761.8 246.7 774.2 243.2" stroke="#00FFFF" stroke-width="0.9" fill="none"/>
<path d="M775.4 300.2 L789.1 249.0 L799.7 251.9 L786.0 303.1 Z" fill="#000"/>
<path d="M787.8 253.8 L781.9 247.5 L783.5 242.8 L795.8 245.1 L807.7 249.2 L806.7 254.2 L798.4 256.7 Z" fill="#004800"/>
<path d="M777.8 298.8 L791.3 248.6" stroke="#00FFFF" stroke-width="1" shape-rendering="crispEdges"/>
<path d="M781.2 299.7 L794.7 249.5" stroke="#00FFFF" stroke-width="1" shape-rendering="crispEdges"/>
<path d="M784.6 300.6 L798.1 250.4" stroke="#00FFFF" stroke-width="1" shape-rendering="crispEdges"/>
<path d="M783.5 244.8 Q793.9 252.4 806.7 251.0" stroke="#00FFFF" stroke-width="0.9" fill="none"/>
<path d="M798.0 307.4 L820.4 259.4 L830.4 264.0 L808.0 312.1 Z" fill="#000"/>
<path d="M818.3 263.9 L813.5 256.7 L816.0 252.3 L827.7 256.7 L838.7 262.8 L836.8 267.5 L828.2 268.6 Z" fill="#004800"/>
<path d="M800.6 306.5 L822.6 259.3" stroke="#00FFFF" stroke-width="1" shape-rendering="crispEdges"/>
<path d="M803.8 307.9 L825.8 260.8" stroke="#00FFFF" stroke-width="1" shape-rendering="crispEdges"/>
<path d="M807.0 309.4 L829.0 262.3" stroke="#00FFFF" stroke-width="1" shape-rendering="crispEdges"/>
<path d="M815.6 254.2 Q824.5 263.5 837.4 264.4" stroke="#00FFFF" stroke-width="0.9" fill="none"/>
<path d="M819.0 318.4 L849.4 275.0 L858.4 281.3 L828.0 324.7 Z" fill="#000"/>
<path d="M846.5 279.1 L843.1 271.2 L846.3 267.2 L857.1 273.7 L866.8 281.6 L864.2 285.9 L855.5 285.4 Z" fill="#004800"/>
<path d="M821.8 317.9 L851.6 275.4" stroke="#00FFFF" stroke-width="1" shape-rendering="crispEdges"/>
<path d="M824.7 320.0 L854.5 277.4" stroke="#00FFFF" stroke-width="1" shape-rendering="crispEdges"/>
<path d="M827.5 322.0 L857.3 279.4" stroke="#00FFFF" stroke-width="1" shape-rendering="crispEdges"/>
<path d="M845.5 269.1 Q852.8 279.8 865.3 282.9" stroke="#00FFFF" stroke-width="0.9" fill="none"/>
<path d="M837.8 332.9 L875.3 295.5 L883.0 303.2 L845.6 340.7 Z" fill="#000"/>
<path d="M871.7 299.0 L869.7 290.6 L873.5 287.3 L883.0 295.5 L891.2 305.0 L887.9 308.8 L879.5 306.8 Z" fill="#004800"/>
<path d="M840.6 332.9 L877.4 296.2" stroke="#00FFFF" stroke-width="1" shape-rendering="crispEdges"/>
<path d="M843.1 335.4 L879.9 298.6" stroke="#00FFFF" stroke-width="1" shape-rendering="crispEdges"/>
<path d="M845.6 337.9 L882.3 301.1" stroke="#00FFFF" stroke-width="1" shape-rendering="crispEdges"/>
<path d="M872.5 289.0 Q877.7 300.8 889.5 306.0" stroke="#00FFFF" stroke-width="0.9" fill="none"/>
<path d="M853.8 350.5 L897.2 320.1 L903.5 329.1 L860.1 359.5 Z" fill="#000"/>
<path d="M893.1 323.0 L892.6 314.3 L896.9 311.7 L904.8 321.4 L911.3 332.2 L907.3 335.4 L899.4 332.0 Z" fill="#004800"/>
<path d="M856.5 351.0 L899.1 321.2" stroke="#00FFFF" stroke-width="1" shape-rendering="crispEdges"/>
<path d="M858.5 353.8 L901.1 324.0" stroke="#00FFFF" stroke-width="1" shape-rendering="crispEdges"/>
<path d="M860.6 356.7 L903.1 326.9" stroke="#00FFFF" stroke-width="1" shape-rendering="crispEdges"/>
<path d="M895.6 313.2 Q898.7 325.7 909.4 333.0" stroke="#00FFFF" stroke-width="0.9" fill="none"/>
<path d="M866.4 370.5 L914.5 348.1 L919.1 358.1 L871.1 380.5 Z" fill="#000"/>
<path d="M909.9 350.3 L911.0 341.7 L915.7 339.8 L921.8 350.8 L926.2 362.5 L921.8 365.0 L914.6 360.2 Z" fill="#004800"/>
<path d="M869.1 371.5 L916.2 349.5" stroke="#00FFFF" stroke-width="1" shape-rendering="crispEdges"/>
<path d="M870.6 374.7 L917.7 352.7" stroke="#00FFFF" stroke-width="1" shape-rendering="crispEdges"/>
<path d="M872.0 377.9 L919.2 355.9" stroke="#00FFFF" stroke-width="1" shape-rendering="crispEdges"/>
<path d="M914.1 341.1 Q915.0 354.0 924.3 362.9" stroke="#00FFFF" stroke-width="0.9" fill="none"/>
<path d="M875.4 392.5 L926.6 378.8 L929.5 389.4 L878.3 403.1 Z" fill="#000"/>
<path d="M921.8 380.1 L924.3 371.8 L929.3 370.8 L933.4 382.7 L935.7 395.0 L931.0 396.6 L924.7 390.7 Z" fill="#004800"/>
<path d="M877.9 393.9 L928.1 380.4" stroke="#00FFFF" stroke-width="1" shape-rendering="crispEdges"/>
<path d="M878.8 397.3 L929.0 383.8" stroke="#00FFFF" stroke-width="1" shape-rendering="crispEdges"/>
<path d="M879.7 400.7 L929.9 387.2" stroke="#00FFFF" stroke-width="1" shape-rendering="crispEdges"/>
<path d="M927.5 371.8 Q926.1 384.6 933.7 395.0" stroke="#00FFFF" stroke-width="0.9" fill="none"/>
<path d="M880.5 415.7 L933.3 411.0 L934.3 422.0 L881.5 426.6 Z" fill="#000"/>
<path d="M928.3 411.5 L932.2 403.8 L937.3 403.7 L939.3 416.0 L939.5 428.6 L934.5 429.4 L929.3 422.4 Z" fill="#004800"/>
<path d="M882.7 417.5 L934.5 413.0" stroke="#00FFFF" stroke-width="1" shape-rendering="crispEdges"/>
<path d="M883.0 421.0 L934.8 416.4" stroke="#00FFFF" stroke-width="1" shape-rendering="crispEdges"/>
<path d="M883.3 424.5 L935.1 419.9" stroke="#00FFFF" stroke-width="1" shape-rendering="crispEdges"/>
<path d="M935.3 404.3 Q931.8 416.7 937.4 428.3" stroke="#00FFFF" stroke-width="0.9" fill="none"/>
<path d="M881.5 439.4 L934.3 444.0 L933.3 455.0 L880.5 450.3 Z" fill="#000"/>
<path d="M929.3 443.6 L934.5 436.6 L939.5 437.4 L939.3 450.0 L937.3 462.3 L932.2 462.2 L928.3 454.5 Z" fill="#004800"/>
<path d="M883.3 441.5 L935.1 446.1" stroke="#00FFFF" stroke-width="1" shape-rendering="crispEdges"/>
<path d="M883.0 445.0 L934.8 449.6" stroke="#00FFFF" stroke-width="1" shape-rendering="crispEdges"/>
<path d="M882.7 448.5 L934.5 453.0" stroke="#00FFFF" stroke-width="1" shape-rendering="crispEdges"/>
<path d="M937.4 437.7 Q931.8 449.3 935.3 461.7" stroke="#00FFFF" stroke-width="0.9" fill="none"/>
<path d="M878.3 462.9 L929.5 476.6 L926.6 487.2 L875.4 473.5 Z" fill="#000"/>
<path d="M924.7 475.3 L931.0 469.4 L935.7 471.0 L933.4 483.3 L929.3 495.2 L924.3 494.2 L921.8 485.9 Z" fill="#004800"/>
<path d="M879.7 465.3 L929.9 478.8" stroke="#00FFFF" stroke-width="1" shape-rendering="crispEdges"/>
<path d="M878.8 468.7 L929.0 482.2" stroke="#00FFFF" stroke-width="1" shape-rendering="crispEdges"/>
<path d="M877.9 472.1 L928.1 485.6" stroke="#00FFFF" stroke-width="1" shape-rendering="crispEdges"/>
<path d="M933.7 471.0 Q926.1 481.4 927.5 494.2" stroke="#00FFFF" stroke-width="0.9" fill="none"/>
<path d="M871.1 485.5 L919.1 507.9 L914.5 517.9 L866.4 495.5 Z" fill="#000"/>
<path d="M914.6 505.8 L921.8 501.0 L926.2 503.5 L921.8 515.2 L915.7 526.2 L911.0 524.3 L909.9 515.7 Z" fill="#004800"/>
<path d="M872.0 488.1 L919.2 510.1" stroke="#00FFFF" stroke-width="1" shape-rendering="crispEdges"/>
<path d="M870.6 491.3 L917.7 513.3" stroke="#00FFFF" stroke-width="1" shape-rendering="crispEdges"/>
<path d="M869.1 494.5 L916.2 516.5" stroke="#00FFFF" stroke-width="1" shape-rendering="crispEdges"/>
<path d="M924.3 503.1 Q915.0 512.0 914.1 524.9" stroke="#00FFFF" stroke-width="0.9" fill="none"/>
<path d="M860.1 506.5 L903.5 536.9 L897.2 545.9 L853.8 515.5 Z" fill="#000"/>
<path d="M899.4 534.0 L907.3 530.6 L911.3 533.8 L904.8 544.6 L896.9 554.3 L892.6 551.7 L893.1 543.0 Z" fill="#004800"/>
<path d="M860.6 509.3 L903.1 539.1" stroke="#00FFFF" stroke-width="1" shape-rendering="crispEdges"/>
<path d="M858.5 512.2 L901.1 542.0" stroke="#00FFFF" stroke-width="1" shape-rendering="crispEdges"/>
<path d="M856.5 515.0 L899.1 544.8" stroke="#00FFFF" stroke-width="1" shape-rendering="crispEdges"/>
<path d="M909.4 533.0 Q898.7 540.3 895.6 552.8" stroke="#00FFFF" stroke-width="0.9" fill="none"/>
<path d="M845.6 525.3 L883.0 562.8 L875.3 570.5 L837.8 533.1 Z" fill="#000"/>
<path d="M879.5 559.2 L887.9 557.2 L891.2 561.0 L883.0 570.5 L873.5 578.7 L869.7 575.4 L871.7 567.0 Z" fill="#004800"/>
<path d="M845.6 528.1 L882.3 564.9" stroke="#00FFFF" stroke-width="1" shape-rendering="crispEdges"/>
<path d="M843.1 530.6 L879.9 567.4" stroke="#00FFFF" stroke-width="1" shape-rendering="crispEdges"/>
<path d="M840.6 533.1 L877.4 569.8" stroke="#00FFFF" stroke-width="1" shape-rendering="crispEdges"/>
<path d="M889.5 560.0 Q877.7 565.2 872.5 577.0" stroke="#00FFFF" stroke-width="0.9" fill="none"/>
<path d="M828.0 541.3 L858.4 584.7 L849.4 591.0 L819.0 547.6 Z" fill="#000"/>
<path d="M855.5 580.6 L864.2 580.1 L866.8 584.4 L857.1 592.3 L846.3 598.8 L843.1 594.8 L846.5 586.9 Z" fill="#004800"/>
<path d="M827.5 544.0 L857.3 586.6" stroke="#00FFFF" stroke-width="1" shape-rendering="crispEdges"/>
<path d="M824.7 546.0 L854.5 588.6" stroke="#00FFFF" stroke-width="1" shape-rendering="crispEdges"/>
<path d="M821.8 548.1 L851.6 590.6" stroke="#00FFFF" stroke-width="1" shape-rendering="crispEdges"/>
<path d="M865.3 583.1 Q852.8 586.2 845.5 596.9" stroke="#00FFFF" stroke-width="0.9" fill="none"/>
<path d="M808.0 553.9 L830.4 602.0 L820.4 606.6 L798.0 558.6 Z" fill="#000"/>
<path d="M828.2 597.4 L836.8 598.5 L838.7 603.2 L827.7 609.3 L816.0 613.7 L813.5 609.3 L818.3 602.1 Z" fill="#004800"/>
<path d="M807.0 556.6 L829.0 603.7" stroke="#00FFFF" stroke-width="1" shape-rendering="crispEdges"/>
<path d="M803.8 558.1 L825.8 605.2" stroke="#00FFFF" stroke-width="1" shape-rendering="crispEdges"/>
<path d="M800.6 559.5 L822.6 606.7" stroke="#00FFFF" stroke-width="1" shape-rendering="crispEdges"/>
<path d="M837.4 601.6 Q824.5 602.5 815.6 611.8" stroke="#00FFFF" stroke-width="0.9" fill="none"/>
<path d="M786.0 562.9 L799.7 614.1 L789.1 617.0 L775.4 565.8 Z" fill="#000"/>
<path d="M798.4 609.3 L806.7 611.8 L807.7 616.8 L795.8 620.9 L783.5 623.2 L781.9 618.5 L787.8 612.2 Z" fill="#004800"/>
<path d="M784.6 565.4 L798.1 615.6" stroke="#00FFFF" stroke-width="1" shape-rendering="crispEdges"/>
<path d="M781.2 566.3 L794.7 616.5" stroke="#00FFFF" stroke-width="1" shape-rendering="crispEdges"/>
<path d="M777.8 567.2 L791.3 617.4" stroke="#00FFFF" stroke-width="1" shape-rendering="crispEdges"/>
<path d="M806.7 615.0 Q793.9 613.6 783.5 621.2" stroke="#00FFFF" stroke-width="0.9" fill="none"/>
<path d="M762.8 568.0 L767.5 620.8 L756.5 621.8 L751.9 569.0 Z" fill="#000"/>
<path d="M767.0 615.8 L774.7 619.7 L774.8 624.8 L762.5 626.8 L749.9 627.0 L749.1 622.0 L756.1 616.8 Z" fill="#004800"/>
<path d="M761.0 570.2 L765.5 622.0" stroke="#00FFFF" stroke-width="1" shape-rendering="crispEdges"/>
<path d="M757.5 570.5 L762.1 622.3" stroke="#00FFFF" stroke-width="1" shape-rendering="crispEdges"/>
<path d="M754.0 570.8 L758.6 622.6" stroke="#00FFFF" stroke-width="1" shape-rendering="crispEdges"/>
<path d="M774.2 622.8 Q761.8 619.3 750.2 624.9" stroke="#00FFFF" stroke-width="0.9" fill="none"/>
<path d="M739.1 569.0 L734.5 621.8 L723.5 620.8 L728.2 568.0 Z" fill="#000"/>
<path d="M734.9 616.8 L741.9 622.0 L741.1 627.0 L728.5 626.8 L716.2 624.8 L716.3 619.7 L724.0 615.8 Z" fill="#004800"/>
<path d="M737.0 570.8 L732.4 622.6" stroke="#00FFFF" stroke-width="1" shape-rendering="crispEdges"/>
<path d="M733.5 570.5 L728.9 622.3" stroke="#00FFFF" stroke-width="1" shape-rendering="crispEdges"/>
<path d="M730.0 570.2 L725.5 622.0" stroke="#00FFFF" stroke-width="1" shape-rendering="crispEdges"/>
<path d="M740.8 624.9 Q729.2 619.3 716.8 622.8" stroke="#00FFFF" stroke-width="0.9" fill="none"/>
<path d="M715.6 565.8 L701.9 617.0 L691.3 614.1 L705.0 562.9 Z" fill="#000"/>
<path d="M703.2 612.2 L709.1 618.5 L707.5 623.2 L695.2 620.9 L683.3 616.8 L684.3 611.8 L692.6 609.3 Z" fill="#004800"/>
<path d="M713.2 567.2 L699.7 617.4" stroke="#00FFFF" stroke-width="1" shape-rendering="crispEdges"/>
<path d="M709.8 566.3 L696.3 616.5" stroke="#00FFFF" stroke-width="1" shape-rendering="crispEdges"/>
<path d="M706.4 565.4 L692.9 615.6" stroke="#00FFFF" stroke-width="1" shape-rendering="crispEdges"/>
<path d="M707.5 621.2 Q697.1 613.6 684.3 615.0" stroke="#00FFFF" stroke-width="0.9" fill="none"/>
<path d="M693.0 558.6 L670.6 606.6 L660.6 602.0 L683.0 553.9 Z" fill="#000"/>
<path d="M672.7 602.1 L677.5 609.3 L675.0 613.7 L663.3 609.3 L652.3 603.2 L654.2 598.5 L662.8 597.4 Z" fill="#004800"/>
<path d="M690.4 559.5 L668.4 606.7" stroke="#00FFFF" stroke-width="1" shape-rendering="crispEdges"/>
<path d="M687.2 558.1 L665.2 605.2" stroke="#00FFFF" stroke-width="1" shape-rendering="crispEdges"/>
<path d="M684.0 556.6 L662.0 603.7" stroke="#00FFFF" stroke-width="1" shape-rendering="crispEdges"/>
<path d="M675.4 611.8 Q666.5 602.5 653.6 601.6" stroke="#00FFFF" stroke-width="0.9" fill="none"/>
<path d="M672.0 547.6 L641.6 591.0 L632.6 584.7 L663.0 541.3 Z" fill="#000"/>
<path d="M644.5 586.9 L647.9 594.8 L644.7 598.8 L633.9 592.3 L624.2 584.4 L626.8 580.1 L635.5 580.6 Z" fill="#004800"/>
<path d="M669.2 548.1 L639.4 590.6" stroke="#00FFFF" stroke-width="1" shape-rendering="crispEdges"/>
<path d="M666.3 546.0 L636.5 588.6" stroke="#00FFFF" stroke-width="1" shape-rendering="crispEdges"/>
<path d="M663.5 544.0 L633.7 586.6" stroke="#00FFFF" stroke-width="1" shape-rendering="crispEdges"/>
<path d="M645.5 596.9 Q638.2 586.2 625.7 583.1" stroke="#00FFFF" stroke-width="0.9" fill="none"/>
<path d="M653.2 533.1 L615.7 570.5 L608.0 562.8 L645.4 525.3 Z" fill="#000"/>
<path d="M619.3 567.0 L621.3 575.4 L617.5 578.7 L608.0 570.5 L599.8 561.0 L603.1 557.2 L611.5 559.2 Z" fill="#004800"/>
<path d="M650.4 533.1 L613.6 569.8" stroke="#00FFFF" stroke-width="1" shape-rendering="crispEdges"/>
<path d="M647.9 530.6 L611.1 567.4" stroke="#00FFFF" stroke-width="1" shape-rendering="crispEdges"/>
<path d="M645.4 528.1 L608.7 564.9" stroke="#00FFFF" stroke-width="1" shape-rendering="crispEdges"/>
<path d="M618.5 577.0 Q613.3 565.2 601.5 560.0" stroke="#00FFFF" stroke-width="0.9" fill="none"/>
<path d="M637.2 515.5 L593.8 545.9 L587.5 536.9 L630.9 506.5 Z" fill="#000"/>
<path d="M597.9 543.0 L598.4 551.7 L594.1 554.3 L586.2 544.6 L579.7 533.8 L583.7 530.6 L591.6 534.0 Z" fill="#004800"/>
<path d="M634.5 515.0 L591.9 544.8" stroke="#00FFFF" stroke-width="1" shape-rendering="crispEdges"/>
<path d="M632.5 512.2 L589.9 542.0" stroke="#00FFFF" stroke-width="1" shape-rendering="crispEdges"/>
<path d="M630.4 509.3 L587.9 539.1" stroke="#00FFFF" stroke-width="1" shape-rendering="crispEdges"/>
<path d="M595.4 552.8 Q592.3 540.3 581.6 533.0" stroke="#00FFFF" stroke-width="0.9" fill="none"/>
<path d="M624.6 495.5 L576.5 517.9 L571.9 507.9 L619.9 485.5 Z" fill="#000"/>
<path d="M581.1 515.7 L580.0 524.3 L575.3 526.2 L569.2 515.2 L564.8 503.5 L569.2 501.0 L576.4 505.8 Z" fill="#004800"/>
<path d="M621.9 494.5 L574.8 516.5" stroke="#00FFFF" stroke-width="1" shape-rendering="crispEdges"/>
<path d="M620.4 491.3 L573.3 513.3" stroke="#00FFFF" stroke-width="1" shape-rendering="crispEdges"/>
<path d="M619.0 488.1 L571.8 510.1" stroke="#00FFFF" stroke-width="1" shape-rendering="crispEdges"/>
<path d="M576.9 524.9 Q576.0 512.0 566.7 503.1" stroke="#00FFFF" stroke-width="0.9" fill="none"/>
<path d="M615.6 473.5 L564.4 487.2 L561.5 476.6 L612.7 462.9 Z" fill="#000"/>
<path d="M569.2 485.9 L566.7 494.2 L561.7 495.2 L557.6 483.3 L555.3 471.0 L560.0 469.4 L566.3 475.3 Z" fill="#004800"/>
<path d="M613.1 472.1 L562.9 485.6" stroke="#00FFFF" stroke-width="1" shape-rendering="crispEdges"/>
<path d="M612.2 468.7 L562.0 482.2" stroke="#00FFFF" stroke-width="1" shape-rendering="crispEdges"/>
<path d="M611.3 465.3 L561.1 478.8" stroke="#00FFFF" stroke-width="1" shape-rendering="crispEdges"/>
<path d="M563.5 494.2 Q564.9 481.4 557.3 471.0" stroke="#00FFFF" stroke-width="0.9" fill="none"/>
<path d="M610.5 450.3 L557.7 455.0 L556.7 444.0 L609.5 439.4 Z" fill="#000"/>
<path d="M562.7 454.5 L558.8 462.2 L553.7 462.3 L551.7 450.0 L551.5 437.4 L556.5 436.6 L561.7 443.6 Z" fill="#004800"/>
<path d="M608.3 448.5 L556.5 453.0" stroke="#00FFFF" stroke-width="1" shape-rendering="crispEdges"/>
<path d="M608.0 445.0 L556.2 449.6" stroke="#00FFFF" stroke-width="1" shape-rendering="crispEdges"/>
<path d="M607.7 441.5 L555.9 446.1" stroke="#00FFFF" stroke-width="1" shape-rendering="crispEdges"/>
<path d="M555.7 461.7 Q559.2 449.3 553.6 437.7" stroke="#00FFFF" stroke-width="0.9" fill="none"/>
<path d="M609.5 426.6 L556.7 422.0 L557.7 411.0 L610.5 415.7 Z" fill="#000"/>
<path d="M561.7 422.4 L556.5 429.4 L551.5 428.6 L551.7 416.0 L553.7 403.7 L558.8 403.8 L562.7 411.5 Z" fill="#004800"/>
<path d="M607.7 424.5 L555.9 419.9" stroke="#00FFFF" stroke-width="1" shape-rendering="crispEdges"/>
<path d="M608.0 421.0 L556.2 416.4" stroke="#00FFFF" stroke-width="1" shape-rendering="crispEdges"/>
<path d="M608.3 417.5 L556.5 413.0" stroke="#00FFFF" stroke-width="1" shape-rendering="crispEdges"/>
<path d="M553.6 428.3 Q559.2 416.7 555.7 404.3" stroke="#00FFFF" stroke-width="0.9" fill="none"/>
<path d="M612.7 403.1 L561.5 389.4 L564.4 378.8 L615.6 392.5 Z" fill="#000"/>
<path d="M566.3 390.7 L560.0 396.6 L555.3 395.0 L557.6 382.7 L561.7 370.8 L566.7 371.8 L569.2 380.1 Z" fill="#004800"/>
<path d="M611.3 400.7 L561.1 387.2" stroke="#00FFFF" stroke-width="1" shape-rendering="crispEdges"/>
<path d="M612.2 397.3 L562.0 383.8" stroke="#00FFFF" stroke-width="1" shape-rendering="crispEdges"/>
<path d="M613.1 393.9 L562.9 380.4" stroke="#00FFFF" stroke-width="1" shape-rendering="crispEdges"/>
<path d="M557.3 395.0 Q564.9 384.6 563.5 371.8" stroke="#00FFFF" stroke-width="0.9" fill="none"/>
<path d="M619.9 380.5 L571.9 358.1 L576.5 348.1 L624.6 370.5 Z" fill="#000"/>
<path d="M576.4 360.2 L569.2 365.0 L564.8 362.5 L569.2 350.8 L575.3 339.8 L580.0 341.7 L581.1 350.3 Z" fill="#004800"/>
<path d="M619.0 377.9 L571.8 355.9" stroke="#00FFFF" stroke-width="1" shape-rendering="crispEdges"/>
<path d="M620.4 374.7 L573.3 352.7" stroke="#00FFFF" stroke-width="1" shape-rendering="crispEdges"/>
<path d="M621.9 371.5 L574.8 349.5" stroke="#00FFFF" stroke-width="1" shape-rendering="crispEdges"/>
<path d="M566.7 362.9 Q576.0 354.0 576.9 341.1" stroke="#00FFFF" stroke-width="0.9" fill="none"/>
<path d="M630.9 359.5 L587.5 329.1 L593.8 320.1 L637.2 350.5 Z" fill="#000"/>
<path d="M591.6 332.0 L583.7 335.4 L579.7 332.2 L586.2 321.4 L594.1 311.7 L598.4 314.3 L597.9 323.0 Z" fill="#004800"/>
<path d="M630.4 356.7 L587.9 326.9" stroke="#00FFFF" stroke-width="1" shape-rendering="crispEdges"/>
<path d="M632.5 353.8 L589.9 324.0" stroke="#00FFFF" stroke-width="1" shape-rendering="crispEdges"/>
<path d="M634.5 351.0 L591.9 321.2" stroke="#00FFFF" stroke-width="1" shape-rendering="crispEdges"/>
<path d="M581.6 333.0 Q592.3 325.7 595.4 313.2" stroke="#00FFFF" stroke-width="0.9" fill="none"/>
<path d="M645.4 340.7 L608.0 303.2 L615.7 295.5 L653.2 332.9 Z" fill="#000"/>
<path d="M611.5 306.8 L603.1 308.8 L599.8 305.0 L608.0 295.5 L617.5 287.3 L621.3 290.6 L619.3 299.0 Z" fill="#004800"/>
<path d="M645.4 337.9 L608.7 301.1" stroke="#00FFFF" stroke-width="1" shape-rendering="crispEdges"/>
<path d="M647.9 335.4 L611.1 298.6" stroke="#00FFFF" stroke-width="1" shape-rendering="crispEdges"/>
<path d="M650.4 332.9 L613.6 296.2" stroke="#00FFFF" stroke-width="1" shape-rendering="crispEdges"/>
<path d="M601.5 306.0 Q613.3 300.8 618.5 289.0" stroke="#00FFFF" stroke-width="0.9" fill="none"/>
<path d="M663.0 324.7 L632.6 281.3 L641.6 275.0 L672.0 318.4 Z" fill="#000"/>
<path d="M635.5 285.4 L626.8 285.9 L624.2 281.6 L633.9 273.7 L644.7 267.2 L647.9 271.2 L644.5 279.1 Z" fill="#004800"/>
<path d="M663.5 322.0 L633.7 279.4" stroke="#00FFFF" stroke-width="1" shape-rendering="crispEdges"/>
<path d="M666.3 320.0 L636.5 277.4" stroke="#00FFFF" stroke-width="1" shape-rendering="crispEdges"/>
<path d="M669.2 317.9 L639.4 275.4" stroke="#00FFFF" stroke-width="1" shape-rendering="crispEdges"/>
<path d="M625.7 282.9 Q638.2 279.8 645.5 269.1" stroke="#00FFFF" stroke-width="0.9" fill="none"/>
<path d="M683.0 312.1 L660.6 264.0 L670.6 259.4 L693.0 307.4 Z" fill="#000"/>
<path d="M662.8 268.6 L654.2 267.5 L652.3 262.8 L663.3 256.7 L675.0 252.3 L677.5 256.7 L672.7 263.9 Z" fill="#004800"/>
<path d="M684.0 309.4 L662.0 262.3" stroke="#00FFFF" stroke-width="1" shape-rendering="crispEdges"/>
<path d="M687.2 307.9 L665.2 260.8" stroke="#00FFFF" stroke-width="1" shape-rendering="crispEdges"/>
<path d="M690.4 306.5 L668.4 259.3" stroke="#00FFFF" stroke-width="1" shape-rendering="crispEdges"/>
<path d="M653.6 264.4 Q666.5 263.5 675.4 254.2" stroke="#00FFFF" stroke-width="0.9" fill="none"/>
<path d="M705.0 303.1 L691.3 251.9 L701.9 249.0 L715.6 300.2 Z" fill="#000"/>
<path d="M692.6 256.7 L684.3 254.2 L683.3 249.2 L695.2 245.1 L707.5 242.8 L709.1 247.5 L703.2 253.8 Z" fill="#004800"/>
<path d="M706.4 300.6 L692.9 250.4" stroke="#00FFFF" stroke-width="1" shape-rendering="crispEdges"/>
<path d="M709.8 299.7 L696.3 249.5" stroke="#00FFFF" stroke-width="1" shape-rendering="crispEdges"/>
<path d="M713.2 298.8 L699.7 248.6" stroke="#00FFFF" stroke-width="1" shape-rendering="crispEdges"/>
<path d="M684.3 251.0 Q697.1 252.4 707.5 244.8" stroke="#00FFFF" stroke-width="0.9" fill="none"/>
<path d="M728.2 298.0 L723.5 245.2 L734.5 244.2 L739.1 297.0 Z" fill="#000"/>
<path d="M724.0 250.2 L716.3 246.3 L716.2 241.2 L728.5 239.2 L741.1 239.0 L741.9 244.0 L734.9 249.2 Z" fill="#004800"/>
<path d="M730.0 295.8 L725.5 244.0" stroke="#00FFFF" stroke-width="1" shape-rendering="crispEdges"/>
<path d="M733.5 295.5 L728.9 243.7" stroke="#00FFFF" stroke-width="1" shape-rendering="crispEdges"/>
<path d="M737.0 295.2 L732.4 243.4" stroke="#00FFFF" stroke-width="1" shape-rendering="crispEdges"/>
<path d="M716.8 243.2 Q729.2 246.7 740.8 241.1" stroke="#00FFFF" stroke-width="0.9" fill="none"/>
<circle cx="745.5" cy="433.0" r="140" fill="#004A00"/>
<path d="M745.5 333.0 L754.3 331.9 L763.6 330.3 L773.4 328.9 L783.8 327.8 L794.8 327.2 L806.5 327.3 L812.5 337.4 L817.5 347.2 L821.7 356.8 L825.3 366.0 L828.6 374.8 L832.1 383.0 L837.5 390.1 L843.4 397.3 L849.6 405.1 L855.8 413.6 L861.8 422.8 L867.5 433.0 L861.8 443.2 L855.8 452.4 L849.6 460.9 L843.4 468.7 L837.5 475.9 L832.1 483.0 L828.6 491.2 L825.3 500.0 L821.7 509.2 L817.5 518.8 L812.5 528.6 L806.5 538.7 L794.8 538.8 L783.8 538.2 L773.4 537.1 L763.6 535.7 L754.3 534.1 L745.5 533.0 L736.7 534.1 L727.4 535.7 L717.6 537.1 L707.2 538.2 L696.2 538.8 L684.5 538.7 L678.5 528.6 L673.5 518.8 L669.3 509.2 L665.7 500.0 L662.4 491.2 L658.9 483.0 L653.5 475.9 L647.6 468.7 L641.4 460.9 L635.2 452.4 L629.2 443.2 L623.5 433.0 L629.2 422.8 L635.2 413.6 L641.4 405.1 L647.6 397.3 L653.5 390.1 L658.9 383.0 L662.4 374.8 L665.7 366.0 L669.3 356.8 L673.5 347.2 L678.5 337.4 L684.5 327.3 L696.2 327.2 L707.2 327.8 L717.6 328.9 L727.4 330.3 L736.7 331.9 Z" fill="#008000"/>
<path d="M745.5 364.0 L751.5 364.0 L757.7 364.1 L763.9 364.4 L770.1 365.3 L776.2 367.1 L782.0 369.8 L787.2 373.4 L791.8 377.8 L795.7 382.8 L799.1 388.0 L802.2 393.3 L805.3 398.5 L808.3 403.7 L811.3 409.1 L814.1 414.6 L816.4 420.5 L818.0 426.7 L818.5 433.0 L818.0 439.3 L816.4 445.5 L814.1 451.4 L811.3 456.9 L808.3 462.3 L805.3 467.5 L802.2 472.7 L799.1 478.0 L795.7 483.2 L791.8 488.2 L787.2 492.6 L782.0 496.2 L776.2 498.9 L770.1 500.7 L763.9 501.6 L757.7 501.9 L751.5 502.0 L745.5 502.0 L739.5 502.0 L733.3 501.9 L727.1 501.6 L720.9 500.7 L714.8 498.9 L709.0 496.2 L703.8 492.6 L699.2 488.2 L695.3 483.2 L691.9 478.0 L688.8 472.7 L685.7 467.5 L682.7 462.3 L679.7 456.9 L676.9 451.4 L674.6 445.5 L673.0 439.3 L672.5 433.0 L673.0 426.7 L674.6 420.5 L676.9 414.6 L679.7 409.1 L682.7 403.7 L685.7 398.5 L688.8 393.3 L691.9 388.0 L695.3 382.8 L699.2 377.8 L703.8 373.4 L709.0 369.8 L714.8 367.1 L720.9 365.3 L727.1 364.4 L733.3 364.1 L739.5 364.0 Z" fill="#00CC00"/>
<path d="M745.5 393.5 L765.2 398.8 L779.7 413.2 L785.0 433.0 L779.7 452.8 L765.2 467.2 L745.5 472.5 L725.8 467.2 L711.3 452.8 L706.0 433.0 L711.3 413.2 L725.8 398.8 Z" fill="#0A2EF0"/>
<g fill="none" stroke="#00FFFF" stroke-width="1" shape-rendering="crispEdges"><path d="M736.2 293.3 L735.9 292.7 L735.6 292.2 L735.2 291.6 L734.9 291.0 L734.6 290.5 L734.2 289.9 L733.9 289.3 L734.5 290.3 L735.3 291.2 L736.0 292.1 L736.9 292.9 L737.8 293.6 L738.8 294.2 L739.8 294.7 L740.9 295.2 L742.0 295.5 L743.2 295.8 L744.3 295.9 L745.5 296.0 L746.7 295.9 L747.8 295.8 L749.0 295.5 L750.1 295.2 L751.2 294.7 L752.2 294.2 L753.2 293.6 L754.1 292.9 L755.0 292.1 L755.7 291.2 L756.5 290.3 L757.1 289.3 L756.8 289.9 L756.4 290.5 L756.1 291.0 L755.8 291.6 L755.4 292.2 L755.1 292.7 L754.8 293.3"/><path d="M729.8 293.9 L729.8 293.9 L729.8 293.9 L729.8 293.9 L729.8 293.9 L729.8 293.9 L729.8 293.9 L729.8 293.9 L730.7 295.3 L731.6 296.5 L732.7 297.7 L733.8 298.8 L735.1 299.7 L736.4 300.6 L737.8 301.3 L739.3 301.9 L740.8 302.4 L742.4 302.7 L743.9 302.9 L745.5 303.0 L747.1 302.9 L748.6 302.7 L750.2 302.4 L751.7 301.9 L753.2 301.3 L754.6 300.6 L755.9 299.7 L757.2 298.8 L758.3 297.7 L759.4 296.5 L760.3 295.3 L761.2 293.9 L761.2 293.9 L761.2 293.9 L761.2 293.9 L761.2 293.9 L761.2 293.9 L761.2 293.9 L761.2 293.9"/><path d="M723.4 294.8 L723.8 295.5 L724.2 296.2 L724.6 297.0 L725.1 297.7 L725.5 298.5 L725.9 299.2 L726.3 299.9 L727.4 301.6 L728.6 303.1 L729.9 304.5 L731.3 305.8 L732.8 307.0 L734.4 308.0 L736.2 308.9 L737.9 309.7 L739.8 310.2 L741.7 310.7 L743.6 310.9 L745.5 311.0 L747.4 310.9 L749.3 310.7 L751.2 310.2 L753.1 309.7 L754.8 308.9 L756.6 308.0 L758.2 307.0 L759.7 305.8 L761.1 304.5 L762.4 303.1 L763.6 301.6 L764.7 299.9 L765.1 299.2 L765.5 298.5 L765.9 297.7 L766.4 297.0 L766.8 296.2 L767.2 295.5 L767.6 294.8"/><path d="M717.0 295.9 L717.7 297.1 L718.4 298.3 L719.1 299.5 L719.8 300.7 L720.5 301.9 L721.2 303.1 L721.8 304.3 L723.1 306.4 L724.6 308.2 L726.2 310.0 L727.9 311.6 L729.8 313.1 L731.8 314.3 L734.0 315.4 L736.2 316.4 L738.4 317.1 L740.8 317.6 L743.1 317.9 L745.5 318.0 L747.9 317.9 L750.2 317.6 L752.6 317.1 L754.8 316.4 L757.0 315.4 L759.2 314.3 L761.2 313.1 L763.1 311.6 L764.8 310.0 L766.4 308.2 L767.9 306.4 L769.2 304.3 L769.8 303.1 L770.5 301.9 L771.2 300.7 L771.9 299.5 L772.6 298.3 L773.3 297.1 L774.0 295.9"/><path d="M710.7 297.4 L711.7 299.2 L712.8 301.0 L713.8 302.9 L714.9 304.7 L715.9 306.5 L717.0 308.3 L718.0 310.1 L719.5 312.5 L721.2 314.7 L723.1 316.7 L725.1 318.6 L727.3 320.3 L729.6 321.8 L732.1 323.0 L734.7 324.1 L737.3 324.9 L740.0 325.5 L742.7 325.9 L745.5 326.0 L748.3 325.9 L751.0 325.5 L753.7 324.9 L756.3 324.1 L758.9 323.0 L761.4 321.8 L763.7 320.3 L765.9 318.6 L767.9 316.7 L769.8 314.7 L771.5 312.5 L773.0 310.1 L774.0 308.3 L775.1 306.5 L776.1 304.7 L777.2 302.9 L778.2 301.0 L779.3 299.2 L780.3 297.4"/><path d="M704.5 299.2 L705.8 301.5 L707.2 303.9 L708.6 306.3 L710.0 308.7 L711.3 311.1 L712.7 313.5 L714.1 315.9 L715.8 318.5 L717.7 321.1 L719.9 323.4 L722.2 325.5 L724.7 327.4 L727.4 329.1 L730.2 330.6 L733.1 331.8 L736.1 332.8 L739.2 333.4 L742.3 333.9 L745.5 334.0 L748.7 333.9 L751.8 333.4 L754.9 332.8 L757.9 331.8 L760.8 330.6 L763.6 329.1 L766.3 327.4 L768.8 325.5 L771.1 323.4 L773.3 321.1 L775.2 318.5 L776.9 315.9 L778.3 313.5 L779.7 311.1 L781.0 308.7 L782.4 306.3 L783.8 303.9 L785.2 301.5 L786.5 299.2"/><path d="M698.3 301.2 L700.1 304.3 L701.9 307.4 L703.7 310.6 L705.5 313.7 L707.3 316.8 L709.1 319.9 L710.9 323.0 L712.8 326.0 L714.9 328.7 L717.3 331.3 L719.8 333.7 L722.6 335.8 L725.5 337.6 L728.6 339.3 L731.8 340.6 L735.2 341.6 L738.6 342.4 L742.0 342.8 L745.5 343.0 L749.0 342.8 L752.4 342.4 L755.8 341.6 L759.2 340.6 L762.4 339.3 L765.5 337.6 L768.4 335.8 L771.2 333.7 L773.7 331.3 L776.1 328.7 L778.2 326.0 L780.1 323.0 L781.9 319.9 L783.7 316.8 L785.5 313.7 L787.3 310.6 L789.1 307.4 L790.9 304.3 L792.7 301.2"/><path d="M692.3 303.5 L694.5 307.3 L696.7 311.1 L698.8 314.9 L701.0 318.7 L703.2 322.5 L705.4 326.3 L707.6 330.1 L709.7 333.4 L712.0 336.4 L714.6 339.2 L717.4 341.8 L720.4 344.1 L723.6 346.1 L727.0 347.9 L730.5 349.4 L734.2 350.5 L737.9 351.3 L741.7 351.8 L745.5 352.0 L749.3 351.8 L753.1 351.3 L756.8 350.5 L760.5 349.4 L764.0 347.9 L767.4 346.1 L770.6 344.1 L773.6 341.8 L776.4 339.2 L779.0 336.4 L781.3 333.4 L783.4 330.1 L785.6 326.3 L787.8 322.5 L790.0 318.7 L792.2 314.9 L794.3 311.1 L796.5 307.3 L798.7 303.5"/><path d="M686.3 306.1 L689.0 310.8 L691.7 315.4 L694.4 320.1 L697.1 324.7 L699.8 329.4 L702.5 334.0 L705.1 338.7 L707.3 342.1 L709.8 345.4 L712.6 348.4 L715.5 351.1 L718.8 353.6 L722.2 355.8 L725.8 357.6 L729.6 359.2 L733.4 360.4 L737.4 361.3 L741.4 361.8 L745.5 362.0 L749.6 361.8 L753.6 361.3 L757.6 360.4 L761.4 359.2 L765.2 357.6 L768.8 355.8 L772.2 353.6 L775.5 351.1 L778.4 348.4 L781.2 345.4 L783.7 342.1 L785.9 338.7 L788.5 334.0 L791.2 329.4 L793.9 324.7 L796.6 320.1 L799.3 315.4 L802.0 310.8 L804.7 306.1"/><path d="M680.5 309.0 L684.1 315.1 L687.6 321.2 L691.1 327.3 L694.6 333.4 L698.2 339.5 L701.7 345.6 L705.2 351.7 L707.4 355.2 L709.9 358.4 L712.6 361.4 L715.6 364.1 L718.8 366.6 L722.2 368.8 L725.8 370.6 L729.6 372.2 L733.5 373.4 L737.4 374.3 L741.4 374.8 L745.5 375.0 L749.6 374.8 L753.6 374.3 L757.5 373.4 L761.4 372.2 L765.2 370.6 L768.8 368.8 L772.2 366.6 L775.4 364.1 L778.4 361.4 L781.1 358.4 L783.6 355.2 L785.8 351.7 L789.3 345.6 L792.8 339.5 L796.4 333.4 L799.9 327.3 L803.4 321.2 L806.9 315.1 L810.5 309.0"/><path d="M765.0 399.2 L815.5 311.8"/><path d="M861.8 355.1 L862.2 354.5 L862.5 354.0 L862.8 353.4 L863.2 352.8 L863.5 352.3 L863.8 351.7 L864.1 351.1 L863.6 352.2 L863.2 353.2 L862.8 354.3 L862.6 355.5 L862.4 356.6 L862.4 357.8 L862.4 359.0 L862.6 360.1 L862.8 361.3 L863.2 362.4 L863.6 363.5 L864.1 364.5 L864.8 365.5 L865.5 366.4 L866.3 367.3 L867.1 368.1 L868.1 368.8 L869.0 369.4 L870.1 369.9 L871.2 370.4 L872.3 370.7 L873.4 371.0 L874.6 371.1 L875.7 371.2 L875.1 371.2 L874.4 371.2 L873.8 371.2 L873.1 371.2 L872.4 371.2 L871.8 371.2 L871.1 371.2"/><path d="M858.1 349.8 L858.1 349.8 L858.1 349.8 L858.1 349.8 L858.1 349.9 L858.1 349.9 L858.1 349.9 L858.1 349.9 L857.4 351.3 L856.7 352.7 L856.3 354.2 L855.9 355.8 L855.7 357.4 L855.7 358.9 L855.7 360.5 L855.9 362.1 L856.3 363.6 L856.7 365.1 L857.4 366.6 L858.1 368.0 L858.9 369.3 L859.9 370.6 L861.0 371.8 L862.1 372.8 L863.4 373.8 L864.7 374.6 L866.1 375.4 L867.6 376.0 L869.1 376.4 L870.6 376.8 L872.2 377.0 L873.8 377.1 L873.8 377.1 L873.8 377.1 L873.8 377.1 L873.8 377.1 L873.8 377.1 L873.8 377.1 L873.8 377.1"/><path d="M854.1 344.7 L853.7 345.4 L853.3 346.2 L852.9 346.9 L852.4 347.7 L852.0 348.4 L851.6 349.1 L851.2 349.9 L850.3 351.6 L849.5 353.4 L848.9 355.2 L848.5 357.1 L848.3 359.0 L848.2 360.9 L848.3 362.9 L848.5 364.8 L848.9 366.7 L849.5 368.5 L850.3 370.3 L851.2 372.0 L852.2 373.6 L853.4 375.2 L854.7 376.6 L856.1 377.9 L857.6 379.1 L859.2 380.1 L861.0 381.0 L862.7 381.7 L864.6 382.3 L866.5 382.7 L868.4 383.0 L870.3 383.1 L871.2 383.1 L872.0 383.1 L872.9 383.1 L873.7 383.1 L874.6 383.1 L875.4 383.1 L876.3 383.1"/><path d="M849.9 339.8 L849.3 341.0 L848.6 342.2 L847.9 343.4 L847.2 344.6 L846.5 345.8 L845.8 347.0 L845.1 348.2 L844.0 350.3 L843.1 352.5 L842.4 354.8 L841.8 357.1 L841.5 359.5 L841.4 361.8 L841.5 364.2 L841.8 366.6 L842.4 368.9 L843.1 371.2 L844.0 373.4 L845.1 375.5 L846.4 377.5 L847.8 379.4 L849.4 381.2 L851.2 382.8 L853.1 384.2 L855.1 385.5 L857.2 386.6 L859.4 387.5 L861.7 388.2 L864.0 388.7 L866.4 389.1 L868.7 389.2 L870.1 389.2 L871.5 389.2 L872.9 389.2 L874.3 389.2 L875.7 389.2 L877.1 389.2 L878.5 389.2"/><path d="M845.5 335.0 L844.5 336.9 L843.4 338.7 L842.4 340.5 L841.3 342.3 L840.3 344.2 L839.2 346.0 L838.2 347.8 L836.9 350.3 L835.8 352.8 L835.0 355.4 L834.4 358.1 L834.0 360.9 L833.9 363.6 L834.0 366.4 L834.4 369.2 L835.0 371.9 L835.8 374.5 L836.9 377.0 L838.2 379.5 L839.7 381.8 L841.3 384.0 L843.2 386.1 L845.2 387.9 L847.4 389.6 L849.8 391.1 L852.2 392.4 L854.8 393.4 L857.4 394.3 L860.1 394.9 L862.9 395.2 L865.6 395.4 L867.7 395.4 L869.8 395.4 L871.9 395.4 L874.0 395.4 L876.1 395.4 L878.2 395.4 L880.3 395.4"/><path d="M840.9 330.5 L839.5 332.9 L838.1 335.3 L836.8 337.7 L835.4 340.1 L834.0 342.5 L832.6 344.9 L831.2 347.2 L829.8 350.1 L828.6 353.0 L827.6 356.0 L826.9 359.1 L826.5 362.2 L826.4 365.4 L826.5 368.5 L826.9 371.7 L827.6 374.8 L828.6 377.8 L829.8 380.7 L831.2 383.5 L832.9 386.2 L834.9 388.7 L837.0 391.0 L839.3 393.1 L841.8 395.1 L844.5 396.8 L847.3 398.2 L850.2 399.4 L853.2 400.4 L856.3 401.1 L859.5 401.5 L862.6 401.6 L865.4 401.6 L868.1 401.6 L870.9 401.6 L873.7 401.6 L876.4 401.6 L879.2 401.6 L881.9 401.6"/><path d="M836.1 326.2 L834.2 329.3 L832.4 332.5 L830.6 335.6 L828.8 338.7 L827.0 341.8 L825.2 344.9 L823.4 348.1 L821.8 351.2 L820.5 354.4 L819.5 357.7 L818.7 361.1 L818.2 364.6 L818.1 368.0 L818.2 371.5 L818.7 375.0 L819.5 378.4 L820.5 381.7 L821.8 384.9 L823.4 388.0 L825.3 390.9 L827.4 393.7 L829.8 396.3 L832.4 398.6 L835.1 400.7 L838.1 402.6 L841.1 404.2 L844.4 405.6 L847.7 406.6 L851.1 407.4 L854.5 407.8 L858.0 408.0 L861.6 408.0 L865.2 408.0 L868.8 408.0 L872.4 408.0 L876.0 408.0 L879.6 408.0 L883.2 408.0"/><path d="M831.0 322.2 L828.8 326.0 L826.6 329.8 L824.4 333.6 L822.2 337.4 L820.0 341.2 L817.8 345.0 L815.6 348.8 L813.9 352.2 L812.4 355.7 L811.3 359.3 L810.5 363.0 L810.0 366.8 L809.8 370.6 L810.0 374.4 L810.5 378.2 L811.3 382.0 L812.4 385.6 L813.9 389.1 L815.6 392.5 L817.7 395.7 L820.0 398.7 L822.6 401.6 L825.4 404.1 L828.4 406.5 L831.7 408.5 L835.0 410.3 L838.6 411.7 L842.2 412.9 L845.9 413.7 L849.7 414.2 L853.5 414.4 L857.9 414.4 L862.3 414.4 L866.7 414.4 L871.1 414.4 L875.5 414.4 L879.9 414.4 L884.3 414.4"/><path d="M825.8 318.3 L823.1 323.0 L820.4 327.6 L817.7 332.3 L815.1 336.9 L812.4 341.6 L809.7 346.2 L807.0 350.9 L805.1 354.5 L803.6 358.3 L802.3 362.1 L801.5 366.1 L800.9 370.1 L800.7 374.2 L800.9 378.3 L801.5 382.3 L802.3 386.3 L803.6 390.1 L805.1 393.9 L807.0 397.5 L809.2 400.9 L811.6 404.2 L814.4 407.2 L817.4 409.9 L820.6 412.4 L824.0 414.6 L827.6 416.4 L831.4 418.0 L835.3 419.2 L839.3 420.1 L843.3 420.6 L847.3 420.8 L852.7 420.8 L858.1 420.8 L863.5 420.8 L868.8 420.8 L874.2 420.8 L879.6 420.8 L885.0 420.8"/><path d="M820.4 314.7 L816.9 320.8 L813.4 326.9 L809.8 333.1 L806.3 339.2 L802.8 345.3 L799.3 351.4 L795.7 357.5 L793.9 361.1 L792.3 364.8 L791.1 368.7 L790.2 372.7 L789.7 376.7 L789.5 380.7 L789.7 384.8 L790.2 388.8 L791.1 392.8 L792.3 396.7 L793.9 400.4 L795.7 404.0 L797.9 407.4 L800.4 410.6 L803.1 413.6 L806.1 416.4 L809.3 418.8 L812.8 421.0 L816.4 422.9 L820.1 424.5 L824.0 425.7 L827.9 426.6 L832.0 427.1 L836.0 427.3 L843.1 427.3 L850.1 427.3 L857.2 427.3 L864.2 427.3 L871.3 427.3 L878.3 427.3 L885.4 427.3"/><path d="M784.5 433.0 L885.5 433.0"/><path d="M871.1 494.8 L871.8 494.8 L872.4 494.8 L873.1 494.8 L873.8 494.8 L874.4 494.8 L875.1 494.8 L875.7 494.8 L874.6 494.9 L873.4 495.0 L872.3 495.3 L871.2 495.6 L870.1 496.1 L869.0 496.6 L868.1 497.2 L867.1 497.9 L866.3 498.7 L865.5 499.6 L864.8 500.5 L864.1 501.5 L863.6 502.5 L863.2 503.6 L862.8 504.7 L862.6 505.9 L862.4 507.0 L862.4 508.2 L862.4 509.4 L862.6 510.5 L862.8 511.7 L863.2 512.8 L863.6 513.8 L864.1 514.9 L863.8 514.3 L863.5 513.7 L863.2 513.2 L862.8 512.6 L862.5 512.0 L862.2 511.5 L861.8 510.9"/><path d="M873.8 488.9 L873.8 488.9 L873.8 488.9 L873.8 488.9 L873.8 488.9 L873.8 488.9 L873.8 488.9 L873.8 488.9 L872.2 489.0 L870.6 489.2 L869.1 489.6 L867.6 490.0 L866.1 490.6 L864.7 491.4 L863.4 492.2 L862.1 493.2 L861.0 494.2 L859.9 495.4 L858.9 496.7 L858.1 498.0 L857.4 499.4 L856.7 500.9 L856.3 502.4 L855.9 503.9 L855.7 505.5 L855.7 507.1 L855.7 508.6 L855.9 510.2 L856.3 511.8 L856.7 513.3 L857.4 514.7 L858.1 516.1 L858.1 516.1 L858.1 516.1 L858.1 516.1 L858.1 516.2 L858.1 516.2 L858.1 516.2 L858.1 516.2"/><path d="M876.3 482.9 L875.4 482.9 L874.6 482.9 L873.7 482.9 L872.9 482.9 L872.0 482.9 L871.2 482.9 L870.3 482.9 L868.4 483.0 L866.5 483.3 L864.6 483.7 L862.7 484.3 L861.0 485.0 L859.2 485.9 L857.6 486.9 L856.1 488.1 L854.7 489.4 L853.4 490.8 L852.2 492.4 L851.2 494.0 L850.3 495.7 L849.5 497.5 L848.9 499.3 L848.5 501.2 L848.3 503.1 L848.2 505.1 L848.3 507.0 L848.5 508.9 L848.9 510.8 L849.5 512.6 L850.3 514.4 L851.2 516.1 L851.6 516.9 L852.0 517.6 L852.4 518.3 L852.9 519.1 L853.3 519.8 L853.7 520.6 L854.1 521.3"/><path d="M878.5 476.8 L877.1 476.8 L875.7 476.8 L874.3 476.8 L872.9 476.8 L871.5 476.8 L870.1 476.8 L868.7 476.8 L866.4 476.9 L864.0 477.3 L861.7 477.8 L859.4 478.5 L857.2 479.4 L855.1 480.5 L853.1 481.8 L851.2 483.2 L849.4 484.8 L847.8 486.6 L846.4 488.5 L845.1 490.5 L844.0 492.6 L843.1 494.8 L842.4 497.1 L841.8 499.4 L841.5 501.8 L841.4 504.2 L841.5 506.5 L841.8 508.9 L842.4 511.2 L843.1 513.5 L844.0 515.7 L845.1 517.8 L845.8 519.0 L846.5 520.2 L847.2 521.4 L847.9 522.6 L848.6 523.8 L849.3 525.0 L849.9 526.2"/><path d="M880.3 470.6 L878.2 470.6 L876.1 470.6 L874.0 470.6 L871.9 470.6 L869.8 470.6 L867.7 470.6 L865.6 470.6 L862.9 470.8 L860.1 471.1 L857.4 471.7 L854.8 472.6 L852.2 473.6 L849.8 474.9 L847.4 476.4 L845.2 478.1 L843.2 479.9 L841.3 482.0 L839.7 484.2 L838.2 486.5 L836.9 489.0 L835.8 491.5 L835.0 494.1 L834.4 496.8 L834.0 499.6 L833.9 502.4 L834.0 505.1 L834.4 507.9 L835.0 510.6 L835.8 513.2 L836.9 515.7 L838.2 518.2 L839.2 520.0 L840.3 521.8 L841.3 523.7 L842.4 525.5 L843.4 527.3 L844.5 529.1 L845.5 531.0"/><path d="M881.9 464.4 L879.2 464.4 L876.4 464.4 L873.7 464.4 L870.9 464.4 L868.1 464.4 L865.4 464.4 L862.6 464.4 L859.5 464.5 L856.3 464.9 L853.2 465.6 L850.2 466.6 L847.3 467.8 L844.5 469.2 L841.8 470.9 L839.3 472.9 L837.0 475.0 L834.9 477.3 L832.9 479.8 L831.2 482.5 L829.8 485.3 L828.6 488.2 L827.6 491.2 L826.9 494.3 L826.5 497.5 L826.4 500.6 L826.5 503.8 L826.9 506.9 L827.6 510.0 L828.6 513.0 L829.8 515.9 L831.2 518.8 L832.6 521.1 L834.0 523.5 L835.4 525.9 L836.8 528.3 L838.1 530.7 L839.5 533.1 L840.9 535.5"/><path d="M883.2 458.0 L879.6 458.0 L876.0 458.0 L872.4 458.0 L868.8 458.0 L865.2 458.0 L861.6 458.0 L858.0 458.0 L854.5 458.2 L851.1 458.6 L847.7 459.4 L844.4 460.4 L841.1 461.8 L838.1 463.4 L835.1 465.3 L832.4 467.4 L829.8 469.7 L827.4 472.3 L825.3 475.1 L823.4 478.0 L821.8 481.1 L820.5 484.3 L819.5 487.6 L818.7 491.0 L818.2 494.5 L818.1 498.0 L818.2 501.4 L818.7 504.9 L819.5 508.3 L820.5 511.6 L821.8 514.8 L823.4 517.9 L825.2 521.1 L827.0 524.2 L828.8 527.3 L830.6 530.4 L832.4 533.5 L834.2 536.7 L836.1 539.8"/><path d="M884.3 451.6 L879.9 451.6 L875.5 451.6 L871.1 451.6 L866.7 451.6 L862.3 451.6 L857.9 451.6 L853.5 451.6 L849.7 451.8 L845.9 452.3 L842.2 453.1 L838.6 454.3 L835.0 455.7 L831.7 457.5 L828.4 459.5 L825.4 461.9 L822.6 464.4 L820.0 467.3 L817.7 470.3 L815.6 473.5 L813.9 476.9 L812.4 480.4 L811.3 484.0 L810.5 487.8 L810.0 491.6 L809.8 495.4 L810.0 499.2 L810.5 503.0 L811.3 506.7 L812.4 510.3 L813.9 513.8 L815.6 517.2 L817.8 521.0 L820.0 524.8 L822.2 528.6 L824.4 532.4 L826.6 536.2 L828.8 540.0 L831.0 543.8"/><path d="M885.0 445.2 L879.6 445.2 L874.2 445.2 L868.8 445.2 L863.5 445.2 L858.1 445.2 L852.7 445.2 L847.3 445.2 L843.3 445.4 L839.3 445.9 L835.3 446.8 L831.4 448.0 L827.6 449.6 L824.0 451.4 L820.6 453.6 L817.4 456.1 L814.4 458.8 L811.6 461.8 L809.2 465.1 L807.0 468.5 L805.1 472.1 L803.6 475.9 L802.3 479.7 L801.5 483.7 L800.9 487.7 L800.7 491.8 L800.9 495.9 L801.5 499.9 L802.3 503.9 L803.6 507.7 L805.1 511.5 L807.0 515.1 L809.7 519.8 L812.4 524.4 L815.1 529.1 L817.7 533.7 L820.4 538.4 L823.1 543.0 L825.8 547.7"/><path d="M885.4 438.7 L878.3 438.7 L871.3 438.7 L864.2 438.7 L857.2 438.7 L850.1 438.7 L843.1 438.7 L836.0 438.7 L832.0 438.9 L827.9 439.4 L824.0 440.3 L820.1 441.5 L816.4 443.1 L812.8 445.0 L809.3 447.2 L806.1 449.6 L803.1 452.4 L800.4 455.4 L797.9 458.6 L795.7 462.0 L793.9 465.6 L792.3 469.3 L791.1 473.2 L790.2 477.2 L789.7 481.2 L789.5 485.3 L789.7 489.3 L790.2 493.3 L791.1 497.3 L792.3 501.2 L793.9 504.9 L795.7 508.5 L799.3 514.6 L802.8 520.7 L806.3 526.8 L809.8 532.9 L813.4 539.1 L816.9 545.2 L820.4 551.3"/><path d="M765.0 466.8 L815.5 554.2"/><path d="M754.8 572.7 L755.1 573.3 L755.4 573.8 L755.8 574.4 L756.1 575.0 L756.4 575.5 L756.8 576.1 L757.1 576.7 L756.5 575.7 L755.7 574.8 L755.0 573.9 L754.1 573.1 L753.2 572.4 L752.2 571.8 L751.2 571.3 L750.1 570.8 L749.0 570.5 L747.8 570.2 L746.7 570.1 L745.5 570.0 L744.3 570.1 L743.2 570.2 L742.0 570.5 L740.9 570.8 L739.8 571.3 L738.8 571.8 L737.8 572.4 L736.9 573.1 L736.0 573.9 L735.3 574.8 L734.5 575.7 L733.9 576.7 L734.2 576.1 L734.6 575.5 L734.9 575.0 L735.2 574.4 L735.6 573.8 L735.9 573.3 L736.2 572.7"/><path d="M761.2 572.1 L761.2 572.1 L761.2 572.1 L761.2 572.1 L761.2 572.1 L761.2 572.1 L761.2 572.1 L761.2 572.1 L760.3 570.7 L759.4 569.5 L758.3 568.3 L757.2 567.2 L755.9 566.3 L754.6 565.4 L753.2 564.7 L751.7 564.1 L750.2 563.6 L748.6 563.3 L747.1 563.1 L745.5 563.0 L743.9 563.1 L742.4 563.3 L740.8 563.6 L739.3 564.1 L737.8 564.7 L736.4 565.4 L735.1 566.3 L733.8 567.2 L732.7 568.3 L731.6 569.5 L730.7 570.7 L729.8 572.1 L729.8 572.1 L729.8 572.1 L729.8 572.1 L729.8 572.1 L729.8 572.1 L729.8 572.1 L729.8 572.1"/><path d="M767.6 571.2 L767.2 570.5 L766.8 569.8 L766.4 569.0 L765.9 568.3 L765.5 567.5 L765.1 566.8 L764.7 566.1 L763.6 564.4 L762.4 562.9 L761.1 561.5 L759.7 560.2 L758.2 559.0 L756.6 558.0 L754.8 557.1 L753.1 556.3 L751.2 555.8 L749.3 555.3 L747.4 555.1 L745.5 555.0 L743.6 555.1 L741.7 555.3 L739.8 555.8 L737.9 556.3 L736.2 557.1 L734.4 558.0 L732.8 559.0 L731.3 560.2 L729.9 561.5 L728.6 562.9 L727.4 564.4 L726.3 566.1 L725.9 566.8 L725.5 567.5 L725.1 568.3 L724.6 569.0 L724.2 569.8 L723.8 570.5 L723.4 571.2"/><path d="M774.0 570.1 L773.3 568.9 L772.6 567.7 L771.9 566.5 L771.2 565.3 L770.5 564.1 L769.8 562.9 L769.2 561.7 L767.9 559.6 L766.4 557.8 L764.8 556.0 L763.1 554.4 L761.2 552.9 L759.2 551.7 L757.0 550.6 L754.8 549.6 L752.6 548.9 L750.2 548.4 L747.9 548.1 L745.5 548.0 L743.1 548.1 L740.8 548.4 L738.4 548.9 L736.2 549.6 L734.0 550.6 L731.8 551.7 L729.8 552.9 L727.9 554.4 L726.2 556.0 L724.6 557.8 L723.1 559.6 L721.8 561.7 L721.2 562.9 L720.5 564.1 L719.8 565.3 L719.1 566.5 L718.4 567.7 L717.7 568.9 L717.0 570.1"/><path d="M780.3 568.6 L779.3 566.8 L778.2 565.0 L777.2 563.1 L776.1 561.3 L775.1 559.5 L774.0 557.7 L773.0 555.9 L771.5 553.5 L769.8 551.3 L767.9 549.3 L765.9 547.4 L763.7 545.7 L761.4 544.2 L758.9 543.0 L756.3 541.9 L753.7 541.1 L751.0 540.5 L748.3 540.1 L745.5 540.0 L742.7 540.1 L740.0 540.5 L737.3 541.1 L734.7 541.9 L732.1 543.0 L729.6 544.2 L727.3 545.7 L725.1 547.4 L723.1 549.3 L721.2 551.3 L719.5 553.5 L718.0 555.9 L717.0 557.7 L715.9 559.5 L714.9 561.3 L713.8 563.1 L712.8 565.0 L711.7 566.8 L710.7 568.6"/><path d="M786.5 566.8 L785.2 564.5 L783.8 562.1 L782.4 559.7 L781.0 557.3 L779.7 554.9 L778.3 552.5 L776.9 550.1 L775.2 547.5 L773.3 544.9 L771.1 542.6 L768.8 540.5 L766.3 538.6 L763.6 536.9 L760.8 535.4 L757.9 534.2 L754.9 533.2 L751.8 532.6 L748.7 532.1 L745.5 532.0 L742.3 532.1 L739.2 532.6 L736.1 533.2 L733.1 534.2 L730.2 535.4 L727.4 536.9 L724.7 538.6 L722.2 540.5 L719.9 542.6 L717.7 544.9 L715.8 547.5 L714.1 550.1 L712.7 552.5 L711.3 554.9 L710.0 557.3 L708.6 559.7 L707.2 562.1 L705.8 564.5 L704.5 566.8"/><path d="M792.7 564.8 L790.9 561.7 L789.1 558.6 L787.3 555.4 L785.5 552.3 L783.7 549.2 L781.9 546.1 L780.1 543.0 L778.2 540.0 L776.1 537.3 L773.7 534.7 L771.2 532.3 L768.4 530.2 L765.5 528.4 L762.4 526.7 L759.2 525.4 L755.8 524.4 L752.4 523.6 L749.0 523.2 L745.5 523.0 L742.0 523.2 L738.6 523.6 L735.2 524.4 L731.8 525.4 L728.6 526.7 L725.5 528.4 L722.6 530.2 L719.8 532.3 L717.3 534.7 L714.9 537.3 L712.8 540.0 L710.9 543.0 L709.1 546.1 L707.3 549.2 L705.5 552.3 L703.7 555.4 L701.9 558.6 L700.1 561.7 L698.3 564.8"/><path d="M798.7 562.5 L796.5 558.7 L794.3 554.9 L792.2 551.1 L790.0 547.3 L787.8 543.5 L785.6 539.7 L783.4 535.9 L781.3 532.6 L779.0 529.6 L776.4 526.8 L773.6 524.2 L770.6 521.9 L767.4 519.9 L764.0 518.1 L760.5 516.6 L756.8 515.5 L753.1 514.7 L749.3 514.2 L745.5 514.0 L741.7 514.2 L737.9 514.7 L734.2 515.5 L730.5 516.6 L727.0 518.1 L723.6 519.9 L720.4 521.9 L717.4 524.2 L714.6 526.8 L712.0 529.6 L709.7 532.6 L707.6 535.9 L705.4 539.7 L703.2 543.5 L701.0 547.3 L698.8 551.1 L696.7 554.9 L694.5 558.7 L692.3 562.5"/><path d="M804.7 559.9 L802.0 555.2 L799.3 550.6 L796.6 545.9 L793.9 541.3 L791.2 536.6 L788.5 532.0 L785.9 527.3 L783.7 523.9 L781.2 520.6 L778.4 517.6 L775.5 514.9 L772.2 512.4 L768.8 510.2 L765.2 508.4 L761.4 506.8 L757.6 505.6 L753.6 504.7 L749.6 504.2 L745.5 504.0 L741.4 504.2 L737.4 504.7 L733.4 505.6 L729.6 506.8 L725.8 508.4 L722.2 510.2 L718.8 512.4 L715.5 514.9 L712.6 517.6 L709.8 520.6 L707.3 523.9 L705.1 527.3 L702.5 532.0 L699.8 536.6 L697.1 541.3 L694.4 545.9 L691.7 550.6 L689.0 555.2 L686.3 559.9"/><path d="M810.5 557.0 L806.9 550.9 L803.4 544.8 L799.9 538.7 L796.4 532.6 L792.8 526.5 L789.3 520.4 L785.8 514.3 L783.6 510.8 L781.1 507.6 L778.4 504.6 L775.4 501.9 L772.2 499.4 L768.8 497.2 L765.2 495.4 L761.4 493.8 L757.5 492.6 L753.6 491.7 L749.6 491.2 L745.5 491.0 L741.4 491.2 L737.4 491.7 L733.5 492.6 L729.6 493.8 L725.8 495.4 L722.2 497.2 L718.8 499.4 L715.6 501.9 L712.6 504.6 L709.9 507.6 L707.4 510.8 L705.2 514.3 L701.7 520.4 L698.2 526.5 L694.6 532.6 L691.1 538.7 L687.6 544.8 L684.1 550.9 L680.5 557.0"/><path d="M726.0 466.8 L675.5 554.2"/><path d="M629.2 510.9 L628.8 511.5 L628.5 512.0 L628.2 512.6 L627.8 513.2 L627.5 513.7 L627.2 514.3 L626.9 514.9 L627.4 513.8 L627.8 512.8 L628.2 511.7 L628.4 510.5 L628.6 509.4 L628.6 508.2 L628.6 507.0 L628.4 505.9 L628.2 504.7 L627.8 503.6 L627.4 502.5 L626.9 501.5 L626.2 500.5 L625.5 499.6 L624.7 498.7 L623.9 497.9 L622.9 497.2 L622.0 496.6 L620.9 496.1 L619.8 495.6 L618.7 495.3 L617.6 495.0 L616.4 494.9 L615.3 494.8 L615.9 494.8 L616.6 494.8 L617.2 494.8 L617.9 494.8 L618.6 494.8 L619.2 494.8 L619.9 494.8"/><path d="M632.9 516.2 L632.9 516.2 L632.9 516.2 L632.9 516.2 L632.9 516.1 L632.9 516.1 L632.9 516.1 L632.9 516.1 L633.6 514.7 L634.3 513.3 L634.7 511.8 L635.1 510.2 L635.3 508.6 L635.3 507.1 L635.3 505.5 L635.1 503.9 L634.7 502.4 L634.3 500.9 L633.6 499.4 L632.9 498.0 L632.1 496.7 L631.1 495.4 L630.0 494.2 L628.9 493.2 L627.6 492.2 L626.3 491.4 L624.9 490.6 L623.4 490.0 L621.9 489.6 L620.4 489.2 L618.8 489.0 L617.2 488.9 L617.2 488.9 L617.2 488.9 L617.2 488.9 L617.2 488.9 L617.2 488.9 L617.2 488.9 L617.2 488.9"/><path d="M636.9 521.3 L637.3 520.6 L637.7 519.8 L638.1 519.1 L638.6 518.3 L639.0 517.6 L639.4 516.9 L639.8 516.1 L640.7 514.4 L641.5 512.6 L642.1 510.8 L642.5 508.9 L642.7 507.0 L642.8 505.1 L642.7 503.1 L642.5 501.2 L642.1 499.3 L641.5 497.5 L640.7 495.7 L639.8 494.0 L638.8 492.4 L637.6 490.8 L636.3 489.4 L634.9 488.1 L633.4 486.9 L631.8 485.9 L630.0 485.0 L628.3 484.3 L626.4 483.7 L624.5 483.3 L622.6 483.0 L620.7 482.9 L619.8 482.9 L619.0 482.9 L618.1 482.9 L617.3 482.9 L616.4 482.9 L615.6 482.9 L614.7 482.9"/><path d="M641.1 526.2 L641.7 525.0 L642.4 523.8 L643.1 522.6 L643.8 521.4 L644.5 520.2 L645.2 519.0 L645.9 517.8 L647.0 515.7 L647.9 513.5 L648.6 511.2 L649.2 508.9 L649.5 506.5 L649.6 504.2 L649.5 501.8 L649.2 499.4 L648.6 497.1 L647.9 494.8 L647.0 492.6 L645.9 490.5 L644.6 488.5 L643.2 486.6 L641.6 484.8 L639.8 483.2 L637.9 481.8 L635.9 480.5 L633.8 479.4 L631.6 478.5 L629.3 477.8 L627.0 477.3 L624.6 476.9 L622.3 476.8 L620.9 476.8 L619.5 476.8 L618.1 476.8 L616.7 476.8 L615.3 476.8 L613.9 476.8 L612.5 476.8"/><path d="M645.5 531.0 L646.5 529.1 L647.6 527.3 L648.6 525.5 L649.7 523.7 L650.7 521.8 L651.8 520.0 L652.8 518.2 L654.1 515.7 L655.2 513.2 L656.0 510.6 L656.6 507.9 L657.0 505.1 L657.1 502.4 L657.0 499.6 L656.6 496.8 L656.0 494.1 L655.2 491.5 L654.1 489.0 L652.8 486.5 L651.3 484.2 L649.7 482.0 L647.8 479.9 L645.8 478.1 L643.6 476.4 L641.2 474.9 L638.8 473.6 L636.2 472.6 L633.6 471.7 L630.9 471.1 L628.1 470.8 L625.4 470.6 L623.3 470.6 L621.2 470.6 L619.1 470.6 L617.0 470.6 L614.9 470.6 L612.8 470.6 L610.7 470.6"/><path d="M650.1 535.5 L651.5 533.1 L652.9 530.7 L654.2 528.3 L655.6 525.9 L657.0 523.5 L658.4 521.1 L659.8 518.8 L661.2 515.9 L662.4 513.0 L663.4 510.0 L664.1 506.9 L664.5 503.8 L664.6 500.6 L664.5 497.5 L664.1 494.3 L663.4 491.2 L662.4 488.2 L661.2 485.3 L659.8 482.5 L658.1 479.8 L656.1 477.3 L654.0 475.0 L651.7 472.9 L649.2 470.9 L646.5 469.2 L643.7 467.8 L640.8 466.6 L637.8 465.6 L634.7 464.9 L631.5 464.5 L628.4 464.4 L625.6 464.4 L622.9 464.4 L620.1 464.4 L617.3 464.4 L614.6 464.4 L611.8 464.4 L609.1 464.4"/><path d="M654.9 539.8 L656.8 536.7 L658.6 533.5 L660.4 530.4 L662.2 527.3 L664.0 524.2 L665.8 521.1 L667.6 517.9 L669.2 514.8 L670.5 511.6 L671.5 508.3 L672.3 504.9 L672.8 501.4 L672.9 498.0 L672.8 494.5 L672.3 491.0 L671.5 487.6 L670.5 484.3 L669.2 481.1 L667.6 478.0 L665.7 475.1 L663.6 472.3 L661.2 469.7 L658.6 467.4 L655.9 465.3 L652.9 463.4 L649.9 461.8 L646.6 460.4 L643.3 459.4 L639.9 458.6 L636.5 458.2 L633.0 458.0 L629.4 458.0 L625.8 458.0 L622.2 458.0 L618.6 458.0 L615.0 458.0 L611.4 458.0 L607.8 458.0"/><path d="M660.0 543.8 L662.2 540.0 L664.4 536.2 L666.6 532.4 L668.8 528.6 L671.0 524.8 L673.2 521.0 L675.4 517.2 L677.1 513.8 L678.6 510.3 L679.7 506.7 L680.5 503.0 L681.0 499.2 L681.2 495.4 L681.0 491.6 L680.5 487.8 L679.7 484.0 L678.6 480.4 L677.1 476.9 L675.4 473.5 L673.3 470.3 L671.0 467.3 L668.4 464.4 L665.6 461.9 L662.6 459.5 L659.3 457.5 L656.0 455.7 L652.4 454.3 L648.8 453.1 L645.1 452.3 L641.3 451.8 L637.5 451.6 L633.1 451.6 L628.7 451.6 L624.3 451.6 L619.9 451.6 L615.5 451.6 L611.1 451.6 L606.7 451.6"/><path d="M665.2 547.7 L667.9 543.0 L670.6 538.4 L673.3 533.7 L675.9 529.1 L678.6 524.4 L681.3 519.8 L684.0 515.1 L685.9 511.5 L687.4 507.7 L688.7 503.9 L689.5 499.9 L690.1 495.9 L690.3 491.8 L690.1 487.7 L689.5 483.7 L688.7 479.7 L687.4 475.9 L685.9 472.1 L684.0 468.5 L681.8 465.1 L679.4 461.8 L676.6 458.8 L673.6 456.1 L670.4 453.6 L667.0 451.4 L663.4 449.6 L659.6 448.0 L655.7 446.8 L651.7 445.9 L647.7 445.4 L643.7 445.2 L638.3 445.2 L632.9 445.2 L627.5 445.2 L622.2 445.2 L616.8 445.2 L611.4 445.2 L606.0 445.2"/><path d="M670.6 551.3 L674.1 545.2 L677.6 539.1 L681.2 532.9 L684.7 526.8 L688.2 520.7 L691.7 514.6 L695.3 508.5 L697.1 504.9 L698.7 501.2 L699.9 497.3 L700.8 493.3 L701.3 489.3 L701.5 485.3 L701.3 481.2 L700.8 477.2 L699.9 473.2 L698.7 469.3 L697.1 465.6 L695.3 462.0 L693.1 458.6 L690.6 455.4 L687.9 452.4 L684.9 449.6 L681.7 447.2 L678.2 445.0 L674.6 443.1 L670.9 441.5 L667.0 440.3 L663.1 439.4 L659.0 438.9 L655.0 438.7 L647.9 438.7 L640.9 438.7 L633.8 438.7 L626.8 438.7 L619.7 438.7 L612.7 438.7 L605.6 438.7"/><path d="M706.5 433.0 L605.5 433.0"/><path d="M619.9 371.2 L619.2 371.2 L618.6 371.2 L617.9 371.2 L617.2 371.2 L616.6 371.2 L615.9 371.2 L615.3 371.2 L616.4 371.1 L617.6 371.0 L618.7 370.7 L619.8 370.4 L620.9 369.9 L622.0 369.4 L622.9 368.8 L623.9 368.1 L624.7 367.3 L625.5 366.4 L626.2 365.5 L626.9 364.5 L627.4 363.5 L627.8 362.4 L628.2 361.3 L628.4 360.1 L628.6 359.0 L628.6 357.8 L628.6 356.6 L628.4 355.5 L628.2 354.3 L627.8 353.2 L627.4 352.2 L626.9 351.1 L627.2 351.7 L627.5 352.3 L627.8 352.8 L628.2 353.4 L628.5 354.0 L628.8 354.5 L629.2 355.1"/><path d="M617.2 377.1 L617.2 377.1 L617.2 377.1 L617.2 377.1 L617.2 377.1 L617.2 377.1 L617.2 377.1 L617.2 377.1 L618.8 377.0 L620.4 376.8 L621.9 376.4 L623.4 376.0 L624.9 375.4 L626.3 374.6 L627.6 373.8 L628.9 372.8 L630.0 371.8 L631.1 370.6 L632.1 369.3 L632.9 368.0 L633.6 366.6 L634.3 365.1 L634.7 363.6 L635.1 362.1 L635.3 360.5 L635.3 358.9 L635.3 357.4 L635.1 355.8 L634.7 354.2 L634.3 352.7 L633.6 351.3 L632.9 349.9 L632.9 349.9 L632.9 349.9 L632.9 349.9 L632.9 349.8 L632.9 349.8 L632.9 349.8 L632.9 349.8"/><path d="M614.7 383.1 L615.6 383.1 L616.4 383.1 L617.3 383.1 L618.1 383.1 L619.0 383.1 L619.8 383.1 L620.7 383.1 L622.6 383.0 L624.5 382.7 L626.4 382.3 L628.3 381.7 L630.0 381.0 L631.8 380.1 L633.4 379.1 L634.9 377.9 L636.3 376.6 L637.6 375.2 L638.8 373.6 L639.8 372.0 L640.7 370.3 L641.5 368.5 L642.1 366.7 L642.5 364.8 L642.7 362.9 L642.8 360.9 L642.7 359.0 L642.5 357.1 L642.1 355.2 L641.5 353.4 L640.7 351.6 L639.8 349.9 L639.4 349.1 L639.0 348.4 L638.6 347.7 L638.1 346.9 L637.7 346.2 L637.3 345.4 L636.9 344.7"/><path d="M612.5 389.2 L613.9 389.2 L615.3 389.2 L616.7 389.2 L618.1 389.2 L619.5 389.2 L620.9 389.2 L622.3 389.2 L624.6 389.1 L627.0 388.7 L629.3 388.2 L631.6 387.5 L633.8 386.6 L635.9 385.5 L637.9 384.2 L639.8 382.8 L641.6 381.2 L643.2 379.4 L644.6 377.5 L645.9 375.5 L647.0 373.4 L647.9 371.2 L648.6 368.9 L649.2 366.6 L649.5 364.2 L649.6 361.8 L649.5 359.5 L649.2 357.1 L648.6 354.8 L647.9 352.5 L647.0 350.3 L645.9 348.2 L645.2 347.0 L644.5 345.8 L643.8 344.6 L643.1 343.4 L642.4 342.2 L641.7 341.0 L641.1 339.8"/><path d="M610.7 395.4 L612.8 395.4 L614.9 395.4 L617.0 395.4 L619.1 395.4 L621.2 395.4 L623.3 395.4 L625.4 395.4 L628.1 395.2 L630.9 394.9 L633.6 394.3 L636.2 393.4 L638.8 392.4 L641.2 391.1 L643.6 389.6 L645.8 387.9 L647.8 386.1 L649.7 384.0 L651.3 381.8 L652.8 379.5 L654.1 377.0 L655.2 374.5 L656.0 371.9 L656.6 369.2 L657.0 366.4 L657.1 363.6 L657.0 360.9 L656.6 358.1 L656.0 355.4 L655.2 352.8 L654.1 350.3 L652.8 347.8 L651.8 346.0 L650.7 344.2 L649.7 342.3 L648.6 340.5 L647.6 338.7 L646.5 336.9 L645.5 335.0"/><path d="M609.1 401.6 L611.8 401.6 L614.6 401.6 L617.3 401.6 L620.1 401.6 L622.9 401.6 L625.6 401.6 L628.4 401.6 L631.5 401.5 L634.7 401.1 L637.8 400.4 L640.8 399.4 L643.7 398.2 L646.5 396.8 L649.2 395.1 L651.7 393.1 L654.0 391.0 L656.1 388.7 L658.1 386.2 L659.8 383.5 L661.2 380.7 L662.4 377.8 L663.4 374.8 L664.1 371.7 L664.5 368.5 L664.6 365.4 L664.5 362.2 L664.1 359.1 L663.4 356.0 L662.4 353.0 L661.2 350.1 L659.8 347.2 L658.4 344.9 L657.0 342.5 L655.6 340.1 L654.2 337.7 L652.9 335.3 L651.5 332.9 L650.1 330.5"/><path d="M607.8 408.0 L611.4 408.0 L615.0 408.0 L618.6 408.0 L622.2 408.0 L625.8 408.0 L629.4 408.0 L633.0 408.0 L636.5 407.8 L639.9 407.4 L643.3 406.6 L646.6 405.6 L649.9 404.2 L652.9 402.6 L655.9 400.7 L658.6 398.6 L661.2 396.3 L663.6 393.7 L665.7 390.9 L667.6 388.0 L669.2 384.9 L670.5 381.7 L671.5 378.4 L672.3 375.0 L672.8 371.5 L672.9 368.0 L672.8 364.6 L672.3 361.1 L671.5 357.7 L670.5 354.4 L669.2 351.2 L667.6 348.1 L665.8 344.9 L664.0 341.8 L662.2 338.7 L660.4 335.6 L658.6 332.5 L656.8 329.3 L654.9 326.2"/><path d="M606.7 414.4 L611.1 414.4 L615.5 414.4 L619.9 414.4 L624.3 414.4 L628.7 414.4 L633.1 414.4 L637.5 414.4 L641.3 414.2 L645.1 413.7 L648.8 412.9 L652.4 411.7 L656.0 410.3 L659.3 408.5 L662.6 406.5 L665.6 404.1 L668.4 401.6 L671.0 398.7 L673.3 395.7 L675.4 392.5 L677.1 389.1 L678.6 385.6 L679.7 382.0 L680.5 378.2 L681.0 374.4 L681.2 370.6 L681.0 366.8 L680.5 363.0 L679.7 359.3 L678.6 355.7 L677.1 352.2 L675.4 348.8 L673.2 345.0 L671.0 341.2 L668.8 337.4 L666.6 333.6 L664.4 329.8 L662.2 326.0 L660.0 322.2"/><path d="M606.0 420.8 L611.4 420.8 L616.8 420.8 L622.2 420.8 L627.5 420.8 L632.9 420.8 L638.3 420.8 L643.7 420.8 L647.7 420.6 L651.7 420.1 L655.7 419.2 L659.6 418.0 L663.4 416.4 L667.0 414.6 L670.4 412.4 L673.6 409.9 L676.6 407.2 L679.4 404.2 L681.8 400.9 L684.0 397.5 L685.9 393.9 L687.4 390.1 L688.7 386.3 L689.5 382.3 L690.1 378.3 L690.3 374.2 L690.1 370.1 L689.5 366.1 L688.7 362.1 L687.4 358.3 L685.9 354.5 L684.0 350.9 L681.3 346.2 L678.6 341.6 L675.9 336.9 L673.3 332.3 L670.6 327.6 L667.9 323.0 L665.2 318.3"/><path d="M605.6 427.3 L612.7 427.3 L619.7 427.3 L626.8 427.3 L633.8 427.3 L640.9 427.3 L647.9 427.3 L655.0 427.3 L659.0 427.1 L663.1 426.6 L667.0 425.7 L670.9 424.5 L674.6 422.9 L678.2 421.0 L681.7 418.8 L684.9 416.4 L687.9 413.6 L690.6 410.6 L693.1 407.4 L695.3 404.0 L697.1 400.4 L698.7 396.7 L699.9 392.8 L700.8 388.8 L701.3 384.8 L701.5 380.7 L701.3 376.7 L700.8 372.7 L699.9 368.7 L698.7 364.8 L697.1 361.1 L695.3 357.5 L691.7 351.4 L688.2 345.3 L684.7 339.2 L681.2 333.1 L677.6 326.9 L674.1 320.8 L670.6 314.7"/><path d="M726.0 399.2 L675.5 311.8"/></g>
</svg>
<!-- ENDPLOT -->
<div class="a raised2" style="left:1055px;top:65px;width:16px;height:6px"></div><div class="a" style="left:1055px;top:71px;width:16px;height:1px;background:#000"></div><div class="a track" style="left:1055px;top:72px;width:16px;height:728px"></div><div class="a raised2" style="left:1055px;top:72px;width:16px;height:16px"><svg class="a" style="left:-1px;top:-1px" width="16" height="16"><path d="M4 10 H11 L7.5 6.5 Z" fill="#000"/></svg></div><div class="a raised2" style="left:1055px;top:784px;width:16px;height:16px"><svg class="a" style="left:-1px;top:-1px" width="16" height="16"><path d="M4 6 H11 L7.5 9.5 Z" fill="#000"/></svg></div><div class="a raised2" style="left:1055px;top:231px;width:16px;height:409px"></div><div class="a raised2" style="left:436px;top:800px;width:6px;height:16px"></div><div class="a" style="left:442px;top:800px;width:1px;height:16px;background:#000"></div><div class="a track" style="left:443px;top:800px;width:612px;height:16px"></div><div class="a raised2" style="left:443px;top:800px;width:16px;height:16px"><svg class="a" style="left:-1px;top:-1px" width="16" height="16"><path d="M9 4 V11 L5.5 7.5 Z" fill="#000"/></svg></div><div class="a raised2" style="left:1039px;top:800px;width:16px;height:16px"><svg class="a" style="left:-1px;top:-1px" width="16" height="16"><path d="M6 4 V11 L9.5 7.5 Z" fill="#000"/></svg></div><div class="a raised2" style="left:592px;top:800px;width:315px;height:16px"></div><div class="a" style="left:1055px;top:800px;width:16px;height:16px;background:#D4D0C8"></div><div class="vl" style="left:1072px;top:65px;height:752px;background:#fff"></div>
<!-- LEGEND PANEL -->
<div class="vl" style="left:1076px;top:65px;height:752px;background:#808080"></div><div class="grip" style="left:1084px;top:72px;width:41px;height:2px"></div><div class="grip" style="left:1084px;top:76px;width:41px;height:2px"></div><div class="a raised2" style="left:1127px;top:70px;width:10px;height:11px"><svg class="a" style="left:1px;top:2px" width="7" height="5"><path d="M0 0 H7 L3.5 4 Z" fill="#808080"/></svg></div><div class="a raised2" style="left:1138px;top:70px;width:11px;height:11px"><svg class="a" style="left:1px;top:1px" width="8" height="8"><path d="M1 1 L7 7 M7 1 L1 7" stroke="#000" stroke-width="1.8"/></svg></div><div class="a sunk" style="left:1084px;top:84px;width:65px;height:729px;background:#fff"></div><div class="t" style="left:1093px;top:99px">Индукция</div><div class="t" style="left:1093px;top:117px">B (Тл)</div><svg class="a" style="left:1085px;top:84px" width="67" height="729" shape-rendering="crispEdges"><rect x="8" y="58" width="15" height="31" fill="#FF0000"/><rect x="8" y="89" width="15" height="33" fill="#FF5500"/><rect x="8" y="122" width="15" height="33" fill="#FF7800"/><rect x="8" y="155" width="15" height="54" fill="#FF9020"/><rect x="8" y="209" width="15" height="13" fill="#FFA020"/><rect x="8" y="222" width="15" height="33" fill="#FFB000"/><rect x="8" y="255" width="15" height="14" fill="#FFD200"/><rect x="8" y="269" width="15" height="20" fill="#FFCC00"/><rect x="8" y="289" width="15" height="32" fill="#FFD820"/><rect x="8" y="321" width="15" height="8" fill="#FFEE00"/><rect x="8" y="329" width="15" height="60" fill="#FFFF00"/><rect x="8" y="389" width="15" height="33" fill="#CCFF00"/><rect x="8" y="422" width="15" height="33" fill="#22EE00"/><rect x="8" y="455" width="15" height="33" fill="#00F0D8"/><rect x="8" y="488" width="15" height="21" fill="#00FFFF"/><rect x="8" y="509" width="15" height="14" fill="#00F0FF"/><rect x="8" y="523" width="15" height="33" fill="#00D8F4"/><rect x="8" y="556" width="15" height="33" fill="#00C8FF"/><rect x="8" y="589" width="15" height="32" fill="#00A8FF"/><rect x="8" y="621" width="15" height="8" fill="#0090FF"/><rect x="8" y="629" width="15" height="26" fill="#0070FF"/><rect x="8" y="655" width="15" height="34" fill="#0020F0"/><rect x="8" y="689" width="15" height="28" fill="#A000FF"/><rect x="8.5" y="58.5" width="14" height="658" fill="none" stroke="#000"/><rect x="8" y="89" width="18" height="1" fill="#000"/><text x="27" y="89" font-family="Liberation Sans" font-size="11" fill="#000" shape-rendering="auto">5.140</text><rect x="8" y="149" width="18" height="1" fill="#000"/><text x="27" y="149" font-family="Liberation Sans" font-size="11" fill="#000" shape-rendering="auto">4.627</text><rect x="8" y="209" width="18" height="1" fill="#000"/><text x="27" y="209" font-family="Liberation Sans" font-size="11" fill="#000" shape-rendering="auto">4.113</text><rect x="8" y="269" width="18" height="1" fill="#000"/><text x="27" y="269" font-family="Liberation Sans" font-size="11" fill="#000" shape-rendering="auto">3.600</text><rect x="8" y="329" width="18" height="1" fill="#000"/><text x="27" y="329" font-family="Liberation Sans" font-size="11" fill="#000" shape-rendering="auto">3.086</text><rect x="8" y="389" width="18" height="1" fill="#000"/><text x="27" y="389" font-family="Liberation Sans" font-size="11" fill="#000" shape-rendering="auto">2.573</text><rect x="8" y="449" width="18" height="1" fill="#000"/><text x="27" y="449" font-family="Liberation Sans" font-size="11" fill="#000" shape-rendering="auto">2.059</text><rect x="8" y="509" width="18" height="1" fill="#000"/><text x="27" y="509" font-family="Liberation Sans" font-size="11" fill="#000" shape-rendering="auto">1.546</text><rect x="8" y="569" width="18" height="1" fill="#000"/><text x="27" y="569" font-family="Liberation Sans" font-size="11" fill="#000" shape-rendering="auto">1.032</text><rect x="8" y="629" width="18" height="1" fill="#000"/><text x="27" y="629" font-family="Liberation Sans" font-size="11" fill="#000" shape-rendering="auto">0.519</text><rect x="8" y="689" width="18" height="1" fill="#000"/><text x="27" y="689" font-family="Liberation Sans" font-size="11" fill="#000" shape-rendering="auto">0.005</text></svg>
<!-- STATUS BAR -->
<div class="hl" style="left:0;top:816px;width:1152px;background:#808080"></div><div class="hl" style="left:0;top:817px;width:1152px;background:#fff"></div><div class="t" style="left:2px;top:822px">Для вывода справки нажмите клавишу F1</div><div class="a" style="left:1001px;top:820px;width:150px;height:16px;border:1px solid;border-color:#808080 #fff #fff #808080"></div><div class="t" style="left:1004px;top:822px">6.5, 6.6</div>
<!-- TASKBAR -->
<div class="hl" style="left:0;top:837px;width:1152px;background:#fff"></div><div class="a raised2" style="left:2px;top:840px;width:51px;height:22px"></div><svg class="a" style="left:5px;top:843px" width="16" height="16" viewBox="0 0 16 16">
<path d="M1 2 Q4 0 7 2 L6 7 Q3 5 0 7 Z" fill="#F05020"/><path d="M8 2 Q11 4 15 2 L14 7 Q11 9 7 7 Z" fill="#50B030"/>
<path d="M0 8 Q3 6 6 8 L5 13 Q2 11 -1 13 Z" fill="#3070E0"/><path d="M7 8 Q10 10 14 8 L13 13 Q10 15 6 13 Z" fill="#F0C020"/></svg><div class="t" style="left:22px;top:844px;font-weight:bold;font-size:12px">Пуск</div><svg class="a" style="left:60px;top:842px" width="16" height="16" viewBox="0 0 16 16"><rect x="1" y="1" width="13" height="13" rx="3" fill="#F8D8A0" stroke="#E08030"/><circle cx="9" cy="10" r="5" fill="#F8E0A0" stroke="#E0B040"/><path d="M6 9 L9 12 L12 9" stroke="#C08000" stroke-width="1.5" fill="none"/></svg><svg class="a" style="left:85px;top:842px" width="16" height="17" viewBox="0 0 16 17"><text x="1" y="14" font-family="Liberation Sans" font-weight="bold" font-size="17" fill="#2080E0">e</text><path d="M2 13 Q0 16 4 14 Q12 10 15 3 Q16 0 12 2" stroke="#E0A020" stroke-width="1.3" fill="none"/></svg><svg class="a" style="left:107px;top:842px" width="16" height="16" viewBox="0 0 16 16"><rect x="1" y="2" width="12" height="12" rx="2" fill="#fff" stroke="#2060D0" stroke-width="1.5"/><path d="M4 11 L10 5" stroke="#404080" stroke-width="1.5"/><circle cx="13" cy="4" r="1.5" fill="#E04040"/></svg><div class="t" style="left:144px;top:841px;font-weight:bold;font-size:11px">»</div><div class="a raised2" style="left:156px;top:840px;width:116px;height:22px"></div><div class="t" style="left:180px;top:845px">Total Command...</div><svg class="a" style="left:161px;top:843px" width="16" height="16" viewBox="0 0 16 16"><circle cx="8" cy="8" r="7" fill="#3C8CE0" stroke="#2060A0"/><ellipse cx="7" cy="5" rx="5" ry="3" fill="#A0D0FF"/><text x="3" y="12" font-family="Liberation Serif" font-weight="bold" font-style="italic" font-size="9" fill="#20C020">TC</text></svg><div class="a raised2" style="left:275px;top:840px;width:116px;height:22px"></div><div class="t" style="left:299px;top:845px">www.skif.biz - ...</div><svg class="a" style="left:280px;top:843px" width="16" height="16" viewBox="0 0 16 16"><circle cx="8" cy="8" r="7" fill="#E06010"/><circle cx="9" cy="7" r="4.5" fill="#3050C0"/><path d="M2 6 Q4 1 9 3 Q6 5 7 9 Q10 13 14 10 Q11 16 5 14 Q1 11 2 6Z" fill="#F08020"/></svg><div class="a track" style="left:394px;top:840px;width:117px;height:22px;border:1px solid;border-color:#000 #fff #fff #000;box-shadow:inset 1px 1px #808080"></div><div class="t" style="left:419px;top:845px;font-weight:bold;letter-spacing:0.25px">Elcut - [Резул...</div><svg class="a" style="left:399px;top:843px" width="16" height="16" viewBox="0 0 16 16"><g shape-rendering="crispEdges" transform="translate(-1,-1)"><rect x="6" y="2" width="2" height="5" fill="#FF0000"/><rect x="7" y="1" width="3" height="2" fill="#FF0000"/><rect x="10" y="1" width="3" height="2" fill="#0000FF"/><rect x="12" y="2" width="3" height="9" fill="#0000FF"/><rect x="3" y="8" width="8" height="8" fill="#000"/><rect x="2" y="10" width="10" height="4" fill="#000"/><rect x="4" y="8" width="6" height="7" fill="#00FFFF"/><rect x="3" y="10" width="8" height="4" fill="#00FFFF"/><rect x="4" y="9" width="5" height="4" fill="#FF0000"/><rect x="12" y="13" width="4" height="2" fill="#A0A020"/><rect x="15" y="15" width="2" height="2" fill="#A0A020"/></g></svg><div class="a raised2" style="left:513px;top:840px;width:116px;height:22px"></div><div class="t" style="left:537px;top:845px">Консоль сбора ...</div><svg class="a" style="left:518px;top:843px" width="16" height="16" viewBox="0 0 16 16"><path d="M2 14 L7 9" stroke="#E04020" stroke-width="2"/><path d="M14 2 L9 7" stroke="#20A040" stroke-width="2"/><circle cx="8" cy="8" r="3" fill="#fff" stroke="#2040C0"/><path d="M1 11 V15 H5 Z" fill="#E04020"/><path d="M15 5 V1 H11 Z" fill="#20A040"/></svg><div class="a raised2" style="left:633px;top:840px;width:116px;height:22px"></div><div class="t" style="left:657px;top:845px">Способность г...</div><svg class="a" style="left:638px;top:843px" width="16" height="16" viewBox="0 0 16 16"><text x="1" y="14" font-family="Liberation Sans" font-weight="bold" font-size="17" fill="#2080E0">e</text><path d="M2 13 Q0 16 4 14 Q12 10 15 3 Q16 0 12 2" stroke="#E0A020" stroke-width="1.3" fill="none"/></svg><div class="a raised2" style="left:754px;top:840px;width:116px;height:22px"></div><div class="t" style="left:778px;top:845px">Калькулятор</div><svg class="a" style="left:759px;top:843px" width="16" height="16" viewBox="0 0 16 16"><rect x="3" y="0" width="10" height="16" rx="2" fill="#A8C8F0" stroke="#6080C0"/><rect x="5" y="2" width="6" height="3" fill="#E0F0FF"/><path d="M5 7 h2 M9 7 h2 M5 10 h2 M9 10 h2 M5 13 h2 M9 13 h2" stroke="#fff"/></svg><div class="a raised2" style="left:874px;top:840px;width:116px;height:22px"></div><div class="t" style="left:898px;top:845px">мой ВД расчет....</div><svg class="a" style="left:879px;top:843px" width="16" height="16" viewBox="0 0 16 16"><rect x="1" y="0" width="13" height="16" fill="#fff" stroke="#404040"/><rect x="3" y="2" width="9" height="8" fill="#3060C0"/><path d="M3 13 L13 5" stroke="#C02020" stroke-width="1.5"/></svg><div class="a" style="left:998px;top:840px;width:152px;height:22px;border:1px solid;border-color:#808080 #fff #fff #808080"></div><svg class="a" style="left:1000px;top:843px" width="110" height="17" viewBox="0 0 110 17">
<g transform="translate(0,0)"><circle cx="8" cy="4" r="3" fill="#40C040"/><circle cx="4" cy="8" r="3" fill="#40C040"/><circle cx="12" cy="8" r="3" fill="#40C040"/><circle cx="5" cy="12" r="3" fill="#40C040"/><circle cx="11" cy="12" r="3" fill="#40C040"/><circle cx="8" cy="8" r="2" fill="#E0E000"/></g>
<g transform="translate(20,0)"><path d="M1 2 H4 V7 L8 2 H11 L6 8 L11 15 H8 L4 10 V15 H1 Z" fill="#E00000"/><path d="M7 10 L12 15 L13 10 Z" fill="#000"/></g>
<g transform="translate(37,0)"><rect x="1" y="1" width="13" height="13" rx="3" fill="#F8D8A0" stroke="#E08030"/><circle cx="9" cy="10" r="5" fill="#F8E0A0" stroke="#E0B040"/><path d="M6 9 L9 12 L12 9" stroke="#C08000" stroke-width="1.5" fill="none"/></g>
<g transform="translate(55,0)"><rect x="6" y="1" width="9" height="8" fill="#404080" stroke="#202060"/><rect x="1" y="5" width="9" height="8" fill="#404080" stroke="#202060"/><rect x="2" y="14" width="7" height="2" fill="#8090C0"/></g>
<g transform="translate(72,0)"><rect x="1" y="1" width="14" height="12" fill="#A0C0E0" stroke="#406080"/><rect x="3" y="4" width="10" height="7" fill="#4080C0"/><circle cx="11" cy="12" r="4.5" fill="#fff" stroke="#208020"/><path d="M11 15 V9 M9 11 L11 9 L13 11" stroke="#20A020" stroke-width="1.5" fill="none"/></g>
<g transform="translate(90,0)"><circle cx="6" cy="7" r="5" fill="#808080" stroke="#404040"/><circle cx="6" cy="7" r="2" fill="#C0C0C0"/><path d="M9 13 Q13 12 14 8 M8 15 Q14 14 15 9" stroke="#8090D0" fill="none"/></g>
</svg><div class="t" style="left:1114px;top:845px">11:58</div>
</body></html>
